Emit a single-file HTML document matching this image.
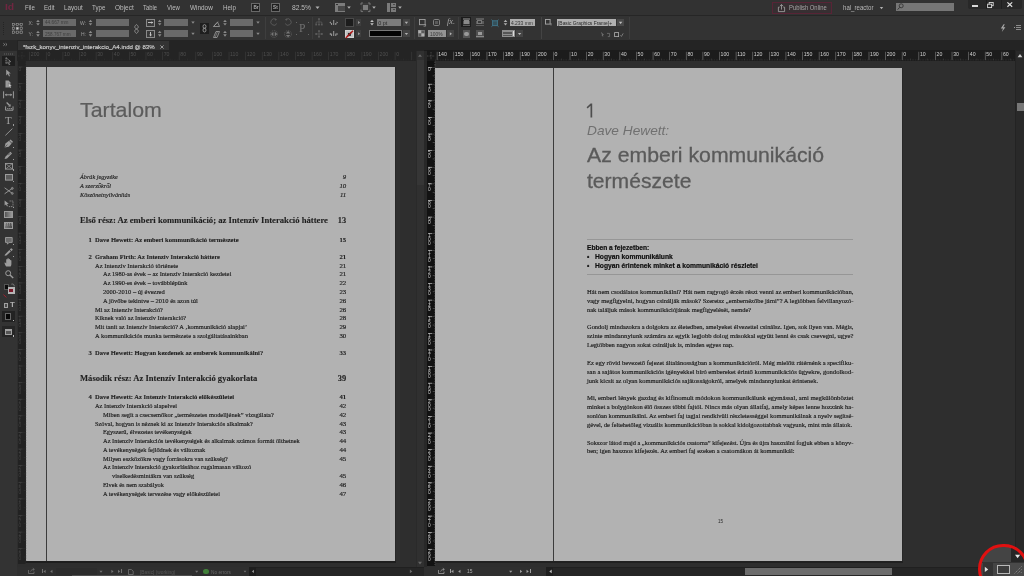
<!DOCTYPE html>
<html><head><meta charset="utf-8"><title>InDesign</title>
<style>
html,body{margin:0;padding:0;}
body{width:1024px;height:576px;overflow:hidden;background:#2e2e2e;position:relative;font-family:"Liberation Sans",sans-serif;}
.b{position:absolute;}
.t{position:absolute;white-space:pre;transform-origin:0 0;}
.se{font-family:"Liberation Serif",serif;}
.sa{font-family:"Liberation Sans",sans-serif;}
svg{position:absolute;overflow:visible;}
#r{position:absolute;left:-16px;top:-16px;width:1056px;height:608px;background:#2e2e2e;filter:blur(0.45px);}
#w{position:absolute;left:16px;top:16px;width:1024px;height:576px;}
</style></head><body><div id="r"><div id="w">
<div class="b" style="left:17px;top:51px;width:407px;height:525px;background:#2e2e2e;"></div>
<div class="b" style="left:424px;top:51px;width:600px;height:525px;background:#2e2e2e;"></div>
<div class="b" style="left:26.2px;top:67px;width:369.0px;height:493.70000000000005px;background:#b2b2b2;"></div>
<div class="b" style="left:395.2px;top:67px;width:1px;height:493.70000000000005px;background:#272727;"></div>
<div class="b" style="left:45.7px;top:67px;width:1.1px;height:493.70000000000005px;background:#3c3c3c;"></div>
<div class="b" style="left:435.4px;top:67.9px;width:467.0px;height:493.1px;background:#b2b2b2;"></div>
<div class="b" style="left:902.4px;top:67.9px;width:1px;height:492.80000000000007px;background:#272727;"></div>
<div class="b" style="left:553.3px;top:67.9px;width:1.1px;height:493.1px;background:#3c3c3c;"></div>
<div class="t sa" style="top:98.38px;font-size:20.2px;line-height:24.24px;color:#5c5c5c;left:79.80px;transform:scaleX(1.0573);-webkit-text-stroke:0.2px #5c5c5c;">Tartalom</div>
<div class="t se" style="top:172.82px;font-size:6.8px;line-height:8.16px;color:#1e1e1e;font-style:italic;left:79.90px;transform:scaleX(0.9119);-webkit-text-stroke:0.15px #1e1e1e;">Ábrák jegyzéke</div>
<div class="t se" style="top:172.82px;font-size:6.8px;line-height:8.16px;color:#1e1e1e;font-style:italic;left:342.80px;-webkit-text-stroke:0.15px #1e1e1e;">9</div>
<div class="t se" style="top:181.82px;font-size:6.8px;line-height:8.16px;color:#1e1e1e;font-style:italic;left:79.90px;transform:scaleX(0.9232);-webkit-text-stroke:0.15px #1e1e1e;">A szerzőkről</div>
<div class="t se" style="top:181.82px;font-size:6.8px;line-height:8.16px;color:#1e1e1e;font-style:italic;left:339.40px;-webkit-text-stroke:0.15px #1e1e1e;">10</div>
<div class="t se" style="top:190.53px;font-size:6.8px;line-height:8.16px;color:#1e1e1e;font-style:italic;left:79.90px;transform:scaleX(0.9147);-webkit-text-stroke:0.15px #1e1e1e;">Köszönetnyilvánítás</div>
<div class="t se" style="top:190.53px;font-size:6.8px;line-height:8.16px;color:#1e1e1e;font-style:italic;left:339.90px;-webkit-text-stroke:0.15px #1e1e1e;">11</div>
<div class="t se" style="top:215.72px;font-size:8.4px;line-height:10.08px;color:#1e1e1e;font-weight:bold;left:79.90px;transform:scaleX(1.0336);-webkit-text-stroke:0.1px #1e1e1e;">Első rész: Az emberi kommunikáció; az Intenzív Interakció háttere</div>
<div class="t se" style="top:215.72px;font-size:8.4px;line-height:10.08px;color:#1e1e1e;font-weight:bold;left:337.80px;-webkit-text-stroke:0.1px #1e1e1e;">13</div>
<div class="t se" style="top:374.12px;font-size:8.4px;line-height:10.08px;color:#1e1e1e;font-weight:bold;left:79.90px;transform:scaleX(1.0235);-webkit-text-stroke:0.1px #1e1e1e;">Második rész: Az Intenzív Interakció gyakorlata</div>
<div class="t se" style="top:374.12px;font-size:8.4px;line-height:10.08px;color:#1e1e1e;font-weight:bold;left:337.80px;-webkit-text-stroke:0.1px #1e1e1e;">39</div>
<div class="t se" style="top:235.92px;font-size:6.7px;line-height:8.04px;color:#1e1e1e;font-weight:bold;left:88.40px;-webkit-text-stroke:0.1px #1e1e1e;">1</div>
<div class="t se" style="top:235.92px;font-size:6.7px;line-height:8.04px;color:#1e1e1e;font-weight:bold;left:94.90px;transform:scaleX(0.9828);-webkit-text-stroke:0.1px #1e1e1e;">Dave Hewett: Az emberi kommunikáció természete</div>
<div class="t se" style="top:235.92px;font-size:6.7px;line-height:8.04px;color:#1e1e1e;font-weight:bold;left:339.50px;-webkit-text-stroke:0.1px #1e1e1e;">15</div>
<div class="t se" style="top:252.92px;font-size:6.7px;line-height:8.04px;color:#1e1e1e;font-weight:bold;left:88.40px;-webkit-text-stroke:0.1px #1e1e1e;">2</div>
<div class="t se" style="top:252.92px;font-size:6.7px;line-height:8.04px;color:#1e1e1e;font-weight:bold;left:94.90px;transform:scaleX(0.9580);-webkit-text-stroke:0.1px #1e1e1e;">Graham Firth: Az Intenzív Interakció háttere</div>
<div class="t se" style="top:252.92px;font-size:6.7px;line-height:8.04px;color:#1e1e1e;font-weight:bold;left:339.50px;-webkit-text-stroke:0.1px #1e1e1e;">21</div>
<div class="t se" style="top:261.52px;font-size:6.8px;line-height:8.16px;color:#1e1e1e;left:94.90px;transform:scaleX(0.9613);-webkit-text-stroke:0.18px #1e1e1e;">Az Intenzív Interakció története</div>
<div class="t se" style="top:261.52px;font-size:6.8px;line-height:8.16px;color:#1e1e1e;left:339.40px;-webkit-text-stroke:0.18px #1e1e1e;">21</div>
<div class="t se" style="top:270.32px;font-size:6.8px;line-height:8.16px;color:#1e1e1e;left:103.10px;transform:scaleX(0.9425);-webkit-text-stroke:0.18px #1e1e1e;">Az 1980-as évek – az Intenzív Interakció kezdetei</div>
<div class="t se" style="top:270.32px;font-size:6.8px;line-height:8.16px;color:#1e1e1e;left:339.40px;-webkit-text-stroke:0.18px #1e1e1e;">21</div>
<div class="t se" style="top:279.12px;font-size:6.8px;line-height:8.16px;color:#1e1e1e;left:103.10px;transform:scaleX(0.9429);-webkit-text-stroke:0.18px #1e1e1e;">Az 1990-es évek – továbblépünk</div>
<div class="t se" style="top:279.12px;font-size:6.8px;line-height:8.16px;color:#1e1e1e;left:339.40px;-webkit-text-stroke:0.18px #1e1e1e;">22</div>
<div class="t se" style="top:287.93px;font-size:6.8px;line-height:8.16px;color:#1e1e1e;left:103.10px;transform:scaleX(0.9598);-webkit-text-stroke:0.18px #1e1e1e;">2000-2010 – új évezred</div>
<div class="t se" style="top:287.93px;font-size:6.8px;line-height:8.16px;color:#1e1e1e;left:339.40px;-webkit-text-stroke:0.18px #1e1e1e;">23</div>
<div class="t se" style="top:296.72px;font-size:6.8px;line-height:8.16px;color:#1e1e1e;left:103.10px;transform:scaleX(0.9535);-webkit-text-stroke:0.18px #1e1e1e;">A jövőbe tekintve – 2010 és azon túl</div>
<div class="t se" style="top:296.72px;font-size:6.8px;line-height:8.16px;color:#1e1e1e;left:339.40px;-webkit-text-stroke:0.18px #1e1e1e;">26</div>
<div class="t se" style="top:305.52px;font-size:6.8px;line-height:8.16px;color:#1e1e1e;left:94.90px;transform:scaleX(0.9454);-webkit-text-stroke:0.18px #1e1e1e;">Mi az Intenzív Interakció?</div>
<div class="t se" style="top:305.52px;font-size:6.8px;line-height:8.16px;color:#1e1e1e;left:339.40px;-webkit-text-stroke:0.18px #1e1e1e;">26</div>
<div class="t se" style="top:314.32px;font-size:6.8px;line-height:8.16px;color:#1e1e1e;left:94.90px;transform:scaleX(0.9362);-webkit-text-stroke:0.18px #1e1e1e;">Kiknek való az Intenzív Interakció?</div>
<div class="t se" style="top:314.32px;font-size:6.8px;line-height:8.16px;color:#1e1e1e;left:339.40px;-webkit-text-stroke:0.18px #1e1e1e;">28</div>
<div class="t se" style="top:323.02px;font-size:6.8px;line-height:8.16px;color:#1e1e1e;left:94.90px;transform:scaleX(0.9488);-webkit-text-stroke:0.18px #1e1e1e;">Mit tanít az Intenzív Interakció? A ‚kommunikáció alapjai’</div>
<div class="t se" style="top:323.02px;font-size:6.8px;line-height:8.16px;color:#1e1e1e;left:339.40px;-webkit-text-stroke:0.18px #1e1e1e;">29</div>
<div class="t se" style="top:331.82px;font-size:6.8px;line-height:8.16px;color:#1e1e1e;left:94.90px;transform:scaleX(0.9544);-webkit-text-stroke:0.18px #1e1e1e;">A kommunikációs munka természete a szolgáltatásainkban</div>
<div class="t se" style="top:331.82px;font-size:6.8px;line-height:8.16px;color:#1e1e1e;left:339.40px;-webkit-text-stroke:0.18px #1e1e1e;">30</div>
<div class="t se" style="top:348.72px;font-size:6.7px;line-height:8.04px;color:#1e1e1e;font-weight:bold;left:88.40px;-webkit-text-stroke:0.1px #1e1e1e;">3</div>
<div class="t se" style="top:348.72px;font-size:6.7px;line-height:8.04px;color:#1e1e1e;font-weight:bold;left:94.90px;transform:scaleX(0.9743);-webkit-text-stroke:0.1px #1e1e1e;">Dave Hewett: Hogyan kezdenek az emberek kommunikálni?</div>
<div class="t se" style="top:348.72px;font-size:6.7px;line-height:8.04px;color:#1e1e1e;font-weight:bold;left:339.50px;-webkit-text-stroke:0.1px #1e1e1e;">33</div>
<div class="t se" style="top:393.42px;font-size:6.7px;line-height:8.04px;color:#1e1e1e;font-weight:bold;left:88.40px;-webkit-text-stroke:0.1px #1e1e1e;">4</div>
<div class="t se" style="top:393.42px;font-size:6.7px;line-height:8.04px;color:#1e1e1e;font-weight:bold;left:94.90px;transform:scaleX(0.9794);-webkit-text-stroke:0.1px #1e1e1e;">Dave Hewett: Az Intenzív Interakció előkészületei</div>
<div class="t se" style="top:393.42px;font-size:6.7px;line-height:8.04px;color:#1e1e1e;font-weight:bold;left:339.50px;-webkit-text-stroke:0.1px #1e1e1e;">41</div>
<div class="t se" style="top:402.12px;font-size:6.8px;line-height:8.16px;color:#1e1e1e;left:94.90px;transform:scaleX(0.9393);-webkit-text-stroke:0.18px #1e1e1e;">Az Intenzív Interakció alapelvei</div>
<div class="t se" style="top:402.12px;font-size:6.8px;line-height:8.16px;color:#1e1e1e;left:339.40px;-webkit-text-stroke:0.18px #1e1e1e;">42</div>
<div class="t se" style="top:410.82px;font-size:6.8px;line-height:8.16px;color:#1e1e1e;left:103.10px;transform:scaleX(0.9463);-webkit-text-stroke:0.18px #1e1e1e;">Miben segít a csecsemőkor „természetes modelljének” vizsgálata?</div>
<div class="t se" style="top:410.82px;font-size:6.8px;line-height:8.16px;color:#1e1e1e;left:339.40px;-webkit-text-stroke:0.18px #1e1e1e;">42</div>
<div class="t se" style="top:419.62px;font-size:6.8px;line-height:8.16px;color:#1e1e1e;left:94.90px;transform:scaleX(0.9317);-webkit-text-stroke:0.18px #1e1e1e;">Szóval, hogyan is néznek ki az Intenzív Interakciós alkalmak?</div>
<div class="t se" style="top:419.62px;font-size:6.8px;line-height:8.16px;color:#1e1e1e;left:339.40px;-webkit-text-stroke:0.18px #1e1e1e;">43</div>
<div class="t se" style="top:428.43px;font-size:6.8px;line-height:8.16px;color:#1e1e1e;left:103.10px;transform:scaleX(0.9303);-webkit-text-stroke:0.18px #1e1e1e;">Egyszerű, élvezetes tevékenységek</div>
<div class="t se" style="top:428.43px;font-size:6.8px;line-height:8.16px;color:#1e1e1e;left:339.40px;-webkit-text-stroke:0.18px #1e1e1e;">43</div>
<div class="t se" style="top:437.12px;font-size:6.8px;line-height:8.16px;color:#1e1e1e;left:103.10px;transform:scaleX(0.9463);-webkit-text-stroke:0.18px #1e1e1e;">Az Intenzív Interakciós tevékenységek és alkalmak számos formát ölthetnek</div>
<div class="t se" style="top:437.12px;font-size:6.8px;line-height:8.16px;color:#1e1e1e;left:339.40px;-webkit-text-stroke:0.18px #1e1e1e;">44</div>
<div class="t se" style="top:445.93px;font-size:6.8px;line-height:8.16px;color:#1e1e1e;left:103.10px;transform:scaleX(0.9374);-webkit-text-stroke:0.18px #1e1e1e;">A tevékenységek fejlődnek és változnak</div>
<div class="t se" style="top:445.93px;font-size:6.8px;line-height:8.16px;color:#1e1e1e;left:339.40px;-webkit-text-stroke:0.18px #1e1e1e;">44</div>
<div class="t se" style="top:454.72px;font-size:6.8px;line-height:8.16px;color:#1e1e1e;left:103.10px;transform:scaleX(0.9304);-webkit-text-stroke:0.18px #1e1e1e;">Milyen eszközökre vagy forrásokra van szükség?</div>
<div class="t se" style="top:454.72px;font-size:6.8px;line-height:8.16px;color:#1e1e1e;left:339.40px;-webkit-text-stroke:0.18px #1e1e1e;">45</div>
<div class="t se" style="top:463.43px;font-size:6.8px;line-height:8.16px;color:#1e1e1e;left:103.10px;transform:scaleX(0.9446);-webkit-text-stroke:0.18px #1e1e1e;">Az Intenzív Interakció gyakorlásához rugalmasan változó</div>
<div class="t se" style="top:472.22px;font-size:6.8px;line-height:8.16px;color:#1e1e1e;left:111.60px;transform:scaleX(0.9422);-webkit-text-stroke:0.18px #1e1e1e;">viselkedésmintákra van szükség</div>
<div class="t se" style="top:472.22px;font-size:6.8px;line-height:8.16px;color:#1e1e1e;left:339.40px;-webkit-text-stroke:0.18px #1e1e1e;">45</div>
<div class="t se" style="top:481.02px;font-size:6.8px;line-height:8.16px;color:#1e1e1e;left:103.10px;transform:scaleX(0.9295);-webkit-text-stroke:0.18px #1e1e1e;">Elvek és nem szabályok</div>
<div class="t se" style="top:481.02px;font-size:6.8px;line-height:8.16px;color:#1e1e1e;left:339.40px;-webkit-text-stroke:0.18px #1e1e1e;">46</div>
<div class="t se" style="top:489.72px;font-size:6.8px;line-height:8.16px;color:#1e1e1e;left:103.10px;transform:scaleX(0.9333);-webkit-text-stroke:0.18px #1e1e1e;">A tevékenységek tervezése vagy előkészületei</div>
<div class="t se" style="top:489.72px;font-size:6.8px;line-height:8.16px;color:#1e1e1e;left:339.40px;-webkit-text-stroke:0.18px #1e1e1e;">47</div>
<svg style="left:0;top:0" width="1024" height="576"><path d="M586.6 107.2L590.6 103.4H592.2V117.6H590.5V105.8L587.6 108.4Z" fill="#4e4e4e"/></svg>
<div class="t sa" style="top:124.07px;font-size:12.6px;line-height:15.12px;color:#707070;font-style:italic;left:586.90px;transform:scaleX(1.0868);">Dave Hewett:</div>
<div class="t sa" style="top:143.10px;font-size:20.6px;line-height:24.72px;color:#5a5a5a;left:586.80px;transform:scaleX(1.0308);-webkit-text-stroke:0.3px #5a5a5a;">Az emberi kommunikáció</div>
<div class="t sa" style="top:169.10px;font-size:20.6px;line-height:24.72px;color:#5a5a5a;left:586.80px;transform:scaleX(1.0246);-webkit-text-stroke:0.3px #5a5a5a;">természete</div>
<div class="b" style="left:586.9px;top:238.8px;width:266.5px;height:0.6px;background:#969696;"></div>
<div class="b" style="left:586.9px;top:274.2px;width:266.5px;height:0.6px;background:#969696;"></div>
<div class="t sa" style="top:244.25px;font-size:6.6px;line-height:7.92px;color:#101010;font-weight:bold;left:586.90px;transform:scaleX(1.0052);-webkit-text-stroke:0.2px #101010;">Ebben a fejezetben:</div>
<div class="t sa" style="top:253.35px;font-size:6.6px;line-height:7.92px;color:#101010;font-weight:bold;left:586.90px;-webkit-text-stroke:0.2px #101010;">•</div>
<div class="t sa" style="top:253.35px;font-size:6.6px;line-height:7.92px;color:#101010;font-weight:bold;left:595.40px;transform:scaleX(1.0212);-webkit-text-stroke:0.2px #101010;">Hogyan kommunikálunk</div>
<div class="t sa" style="top:262.15px;font-size:6.6px;line-height:7.92px;color:#101010;font-weight:bold;left:586.90px;-webkit-text-stroke:0.2px #101010;">•</div>
<div class="t sa" style="top:262.15px;font-size:6.6px;line-height:7.92px;color:#101010;font-weight:bold;left:595.40px;transform:scaleX(1.0175);-webkit-text-stroke:0.2px #101010;">Hogyan érintenek minket a kommunikáció részletei</div>
<div class="t se" style="top:287.93px;font-size:6.8px;line-height:8.16px;color:#1e1e1e;left:586.90px;transform:scaleX(0.9660);-webkit-text-stroke:0.18px #1e1e1e;">Hát nem csodálatos kommunikálni? Hát nem ragyogó érzés részt venni az emberi kommunikációban,</div>
<div class="t se" style="top:296.79px;font-size:6.8px;line-height:8.16px;color:#1e1e1e;left:586.90px;transform:scaleX(0.9543);-webkit-text-stroke:0.18px #1e1e1e;">vagy megfigyelni, hogyan csinálják mások? Szeretsz „embernézőbe járni”? A legtöbben felvillanyozó-</div>
<div class="t se" style="top:305.64px;font-size:6.8px;line-height:8.16px;color:#1e1e1e;left:586.90px;transform:scaleX(0.9499);-webkit-text-stroke:0.18px #1e1e1e;">nak találjuk mások kommunikációjának megfigyelését, nemde?</div>
<div class="t se" style="top:323.37px;font-size:6.8px;line-height:8.16px;color:#1e1e1e;left:586.90px;transform:scaleX(0.9460);-webkit-text-stroke:0.18px #1e1e1e;">Gondolj mindazokra a dolgokra az életedben, amelyeket élvezettel csinálsz. Igen, sok ilyen van. Mégis,</div>
<div class="t se" style="top:332.23px;font-size:6.8px;line-height:8.16px;color:#1e1e1e;left:586.90px;transform:scaleX(0.9774);-webkit-text-stroke:0.18px #1e1e1e;">szinte mindannyiunk számára az egyik legjobb dolog másokkal együtt lenni és csak csevegni, ugye?</div>
<div class="t se" style="top:341.09px;font-size:6.8px;line-height:8.16px;color:#1e1e1e;left:586.90px;transform:scaleX(0.9555);-webkit-text-stroke:0.18px #1e1e1e;">Legtöbben nagyon sokat csináljuk is, minden egyes nap.</div>
<div class="t se" style="top:358.81px;font-size:6.8px;line-height:8.16px;color:#1e1e1e;left:586.90px;transform:scaleX(0.9595);-webkit-text-stroke:0.18px #1e1e1e;">Ez egy rövid bevezető fejezet általánosságban a kommunikációról. Még mielőtt rátérnénk a specifiku-</div>
<div class="t se" style="top:367.67px;font-size:6.8px;line-height:8.16px;color:#1e1e1e;left:586.90px;transform:scaleX(0.9713);-webkit-text-stroke:0.18px #1e1e1e;">san a sajátos kommunikációs igényekkel bíró embereket érintő kommunikációs ügyekre, gondolkod-</div>
<div class="t se" style="top:376.52px;font-size:6.8px;line-height:8.16px;color:#1e1e1e;left:586.90px;transform:scaleX(0.9516);-webkit-text-stroke:0.18px #1e1e1e;">junk kicsit az olyan kommunikációs sajátosságokról, amelyek mindannyiunkat érintenek.</div>
<div class="t se" style="top:394.25px;font-size:6.8px;line-height:8.16px;color:#1e1e1e;left:586.90px;transform:scaleX(0.9814);-webkit-text-stroke:0.18px #1e1e1e;">Mi, emberi lények gazdag és kifinomult módokon kommunikálunk egymással, ami megkülönböztet</div>
<div class="t se" style="top:403.11px;font-size:6.8px;line-height:8.16px;color:#1e1e1e;left:586.90px;transform:scaleX(0.9647);-webkit-text-stroke:0.18px #1e1e1e;">minket a bolygónkon élő összes többi fajtól. Nincs más olyan állatfaj, amely képes lenne hozzánk ha-</div>
<div class="t se" style="top:411.97px;font-size:6.8px;line-height:8.16px;color:#1e1e1e;left:586.90px;transform:scaleX(0.9459);-webkit-text-stroke:0.18px #1e1e1e;">sonlóan kommunikálni. Az emberi faj tagjai rendkívüli részletességgel kommunikálnak a nyelv segítsé-</div>
<div class="t se" style="top:420.82px;font-size:6.8px;line-height:8.16px;color:#1e1e1e;left:586.90px;transform:scaleX(0.9346);-webkit-text-stroke:0.18px #1e1e1e;">gével, de feltehetőleg vizuális kommunikációban is sokkal kidolgozottabbak vagyunk, mint más állatok.</div>
<div class="t se" style="top:438.55px;font-size:6.8px;line-height:8.16px;color:#1e1e1e;left:586.90px;transform:scaleX(0.9316);-webkit-text-stroke:0.18px #1e1e1e;">Sokszor látod majd a „kommunikációs csatorna” kifejezést. Újra és újra használni fogjuk ebben a könyv-</div>
<div class="t se" style="top:447.40px;font-size:6.8px;line-height:8.16px;color:#1e1e1e;left:586.90px;transform:scaleX(0.9478);-webkit-text-stroke:0.18px #1e1e1e;">ben; igen hasznos kifejezés. Az emberi faj ezeken a csatornákon át kommunikál:</div>
<div class="t sa" style="top:516.83px;font-size:6.2px;line-height:7.44px;color:#2a2a2a;left:717.50px;transform:scaleX(0.7395);">15</div>
<div class="b" style="left:0px;top:0px;width:1024px;height:15px;background:#323232;"></div>
<div class="b" style="left:0px;top:14.6px;width:1024px;height:1.2px;background:#262626;"></div>
<div class="b" style="left:0px;top:16px;width:1024px;height:24px;background:#333333;"></div>
<div class="t sa" style="top:1.21px;font-size:9.6px;line-height:11.52px;color:#702641;font-weight:bold;left:4.90px;transform:scaleX(1.0784);">Id</div>
<div class="t sa" style="top:3.01px;font-size:7.6px;line-height:9.12px;color:#bdbdbd;left:25.30px;transform:scaleX(0.8084);">File</div>
<div class="t sa" style="top:3.01px;font-size:7.6px;line-height:9.12px;color:#bdbdbd;left:43.90px;transform:scaleX(0.8018);">Edit</div>
<div class="t sa" style="top:3.01px;font-size:7.6px;line-height:9.12px;color:#bdbdbd;left:64.00px;transform:scaleX(0.8239);">Layout</div>
<div class="t sa" style="top:3.01px;font-size:7.6px;line-height:9.12px;color:#bdbdbd;left:92.20px;transform:scaleX(0.8072);">Type</div>
<div class="t sa" style="top:3.01px;font-size:7.6px;line-height:9.12px;color:#bdbdbd;left:114.80px;transform:scaleX(0.8559);">Object</div>
<div class="t sa" style="top:3.01px;font-size:7.6px;line-height:9.12px;color:#bdbdbd;left:143.00px;transform:scaleX(0.7705);">Table</div>
<div class="t sa" style="top:3.01px;font-size:7.6px;line-height:9.12px;color:#bdbdbd;left:166.90px;transform:scaleX(0.7835);">View</div>
<div class="t sa" style="top:3.01px;font-size:7.6px;line-height:9.12px;color:#bdbdbd;left:190.20px;transform:scaleX(0.8435);">Window</div>
<div class="t sa" style="top:3.01px;font-size:7.6px;line-height:9.12px;color:#bdbdbd;left:222.70px;transform:scaleX(0.8253);">Help</div>
<div class="b" style="left:251.3px;top:2.8px;width:9.2px;height:8.8px;background:#1f1f1f;border:0.8px solid #686868;box-sizing:border-box;"></div>
<div class="t sa" style="top:4.95px;font-size:4.6px;line-height:5.52px;color:#b0b0b0;font-weight:bold;left:253.40px;">Br</div>
<div class="b" style="left:271px;top:2.8px;width:9.2px;height:8.8px;background:#1f1f1f;border:0.8px solid #686868;box-sizing:border-box;"></div>
<div class="t sa" style="top:4.95px;font-size:4.6px;line-height:5.52px;color:#b0b0b0;font-weight:bold;left:273.10px;">St</div>
<div class="t sa" style="top:3.01px;font-size:7.6px;line-height:9.12px;color:#bdbdbd;left:291.90px;transform:scaleX(0.8863);">82.5%</div>
<svg style="left:0;top:0" width="1024" height="576"><polygon points="315.5,6.3999999999999995 319.5,6.3999999999999995 317.5,9.0" fill="#b0b0b0"/></svg>
<div class="b" style="left:335.2px;top:3px;width:10px;height:8.6px;background:#7c7c7c;"></div>
<div class="b" style="left:337.6px;top:5.6px;width:7px;height:5.2px;background:#484848;"></div>
<div class="b" style="left:336px;top:3.8px;width:1.6px;height:1.4px;background:#333;"></div>
<svg style="left:0;top:0" width="1024" height="576"><polygon points="347.2,6.52 350.8,6.52 349,8.86" fill="#b0b0b0"/></svg>
<div class="b" style="left:361px;top:3px;width:9px;height:8.6px;background:#3a3a3a;"></div>
<div class="b" style="left:363.2px;top:4.8px;width:4.8px;height:5px;background:#7c7c7c;"></div>
<svg style="left:361px;top:3px" width="9" height="8.6" viewBox="0 0 9 8.6"><path d="M0 2V0H2M7 0H9V2M9 6.6V8.6H7M2 8.6H0V6.6" stroke="#7c7c7c" stroke-width="0.9" fill="none"/></svg>
<svg style="left:0;top:0" width="1024" height="576"><polygon points="372.2,6.52 375.8,6.52 374,8.86" fill="#b0b0b0"/></svg>
<div class="b" style="left:386.7px;top:3px;width:9.8px;height:8.6px;background:#7a7a7a;"></div>
<div class="b" style="left:390.2px;top:3px;width:1.2px;height:8.6px;background:#343434;"></div>
<div class="b" style="left:391.4px;top:6.8px;width:5.2px;height:1.2px;background:#343434;"></div>
<div class="b" style="left:392.6px;top:4.2px;width:2.4px;height:1px;background:#4a4a4a;"></div>
<div class="b" style="left:392.6px;top:9px;width:2.4px;height:1px;background:#4a4a4a;"></div>
<svg style="left:0;top:0" width="1024" height="576"><polygon points="398.2,6.52 401.8,6.52 400,8.86" fill="#b0b0b0"/></svg>
<div class="b" style="left:772.4px;top:1.6px;width:59.4px;height:12.8px;background:#372f32;border:0.8px solid #582436;box-sizing:border-box;"></div>
<svg style="left:778px;top:4.2px" width="7" height="8" viewBox="0 0 7 8"><path d="M1.6 3.2H0.4V7.6H6.6V3.2H5.4M3.5 5.6V0.6M1.9 2.2L3.5 0.6L5.1 2.2" stroke="#a8a8a8" stroke-width="0.8" fill="none"/></svg>
<div class="t sa" style="top:4.39px;font-size:7.2px;line-height:8.64px;color:#a5a5a5;left:788.60px;transform:scaleX(0.8142);">Publish Online</div>
<div class="t sa" style="top:3.79px;font-size:7.2px;line-height:8.64px;color:#b8b8b8;left:843.30px;transform:scaleX(0.8467);">hal_reactor</div>
<svg style="left:0;top:0" width="1024" height="576"><polygon points="879.8,6.98 883.2,6.98 881.5,9.19" fill="#b0b0b0"/></svg>
<div class="b" style="left:896px;top:2.5px;width:58px;height:8.6px;background:#767676;"></div>
<svg style="left:896.6px;top:3.2px" width="7" height="7" viewBox="0 0 7 7"><circle cx="4.2" cy="2.8" r="2" stroke="#333" stroke-width="0.9" fill="none"/><path d="M2.8 4.3L0.6 6.6" stroke="#333" stroke-width="1"/></svg>
<div class="b" style="left:968px;top:0px;width:53.6px;height:8.8px;background:#282828;border-radius:0 0 2px 2px;"></div>
<div class="b" style="left:986px;top:0px;width:0.6px;height:8.8px;background:#1e1e1e;"></div>
<div class="b" style="left:1001px;top:0px;width:0.6px;height:8.8px;background:#1e1e1e;"></div>
<div class="b" style="left:972px;top:5.3px;width:6px;height:1.5px;background:#d8d8d8;"></div>
<svg style="left:986.6px;top:1.6px" width="7" height="6.4" viewBox="0 0 7 6.4"><rect x="2.2" y="0.5" width="4" height="3.2" stroke="#d8d8d8" stroke-width="0.9" fill="none"/><rect x="0.6" y="2.2" width="4" height="3.4" stroke="#d8d8d8" stroke-width="0.9" fill="#282828"/></svg>
<svg style="left:1007px;top:2px" width="5.6" height="5.2" viewBox="0 0 5.6 5.2"><path d="M0.4 0.4L5.2 4.8M5.2 0.4L0.4 4.8" stroke="#e0e0e0" stroke-width="1.2"/></svg>
<div class="b" style="left:2.8px;top:22px;width:1.2px;height:1.2px;background:#242424;"></div>
<div class="b" style="left:2.8px;top:24px;width:1.2px;height:1.2px;background:#242424;"></div>
<div class="b" style="left:2.8px;top:26px;width:1.2px;height:1.2px;background:#242424;"></div>
<div class="b" style="left:2.8px;top:28px;width:1.2px;height:1.2px;background:#242424;"></div>
<div class="b" style="left:2.8px;top:30px;width:1.2px;height:1.2px;background:#242424;"></div>
<div class="b" style="left:2.8px;top:32px;width:1.2px;height:1.2px;background:#242424;"></div>
<div class="b" style="left:2.8px;top:34px;width:1.2px;height:1.2px;background:#242424;"></div>
<svg style="left:12.3px;top:23px" width="10.4" height="10.4" viewBox="0 0 10.4 10.4"><rect x="0.3" y="0.3" width="2.2" height="2.2" stroke="#9a9a9a" stroke-width="0.6" fill="none"/><rect x="0.3" y="4.2" width="2.2" height="2.2" stroke="#9a9a9a" stroke-width="0.6" fill="none"/><rect x="0.3" y="8.1" width="2.2" height="2.2" stroke="#9a9a9a" stroke-width="0.6" fill="none"/><rect x="4.2" y="0.3" width="2.2" height="2.2" stroke="#9a9a9a" stroke-width="0.6" fill="none"/><rect x="4.2" y="4.2" width="2.2" height="2.2" stroke="#9a9a9a" stroke-width="0.6" fill="#ccc"/><rect x="4.2" y="8.1" width="2.2" height="2.2" stroke="#9a9a9a" stroke-width="0.6" fill="none"/><rect x="8.1" y="0.3" width="2.2" height="2.2" stroke="#9a9a9a" stroke-width="0.6" fill="none"/><rect x="8.1" y="4.2" width="2.2" height="2.2" stroke="#9a9a9a" stroke-width="0.6" fill="none"/><rect x="8.1" y="8.1" width="2.2" height="2.2" stroke="#9a9a9a" stroke-width="0.6" fill="none"/><path d="M2.5 1.4H4.2M6.4 1.4H8.1M2.5 9.2H4.2M6.4 9.2H8.1M1.4 2.5V4.2M1.4 6.4V8.1M9.2 2.5V4.2M9.2 6.4V8.1" stroke="#8a8a8a" stroke-width="0.5"/></svg>
<div class="t sa" style="top:19.67px;font-size:5px;line-height:6.0px;color:#9c9c9c;left:28.60px;">X:</div>
<div class="t sa" style="top:31.37px;font-size:5px;line-height:6.0px;color:#9c9c9c;left:28.60px;">Y:</div>
<svg style="left:0;top:0" width="1024" height="576"><polygon points="36.2,21.980000000000004 39.8,21.980000000000004 38,19.64" fill="#8c8c8c"/></svg>
<svg style="left:0;top:0" width="1024" height="576"><polygon points="36.2,23.22 39.8,23.22 38,25.560000000000002" fill="#8c8c8c"/></svg>
<svg style="left:0;top:0" width="1024" height="576"><polygon points="36.2,33.08 39.8,33.08 38,30.74" fill="#8c8c8c"/></svg>
<svg style="left:0;top:0" width="1024" height="576"><polygon points="36.2,34.32000000000001 39.8,34.32000000000001 38,36.660000000000004" fill="#8c8c8c"/></svg>
<div class="b" style="left:43.1px;top:19px;width:32.9px;height:7.1px;background:#6a6a6a;"></div>
<div class="b" style="left:43.1px;top:30.2px;width:32.9px;height:7.1px;background:#6a6a6a;"></div>
<div class="t sa" style="top:19.19px;font-size:5.5px;line-height:6.6px;color:#3e3e3e;left:44.50px;transform:scaleX(0.8541);">44.667 mm</div>
<div class="t sa" style="top:30.59px;font-size:5.5px;line-height:6.6px;color:#3e3e3e;left:44.50px;transform:scaleX(0.8341);">258.767 mm</div>
<div class="t sa" style="top:19.67px;font-size:5px;line-height:6.0px;color:#9c9c9c;left:80.00px;">W:</div>
<div class="t sa" style="top:31.37px;font-size:5px;line-height:6.0px;color:#9c9c9c;left:81.00px;">H:</div>
<svg style="left:0;top:0" width="1024" height="576"><polygon points="88.7,21.980000000000004 92.3,21.980000000000004 90.5,19.64" fill="#8c8c8c"/></svg>
<svg style="left:0;top:0" width="1024" height="576"><polygon points="88.7,23.22 92.3,23.22 90.5,25.560000000000002" fill="#8c8c8c"/></svg>
<svg style="left:0;top:0" width="1024" height="576"><polygon points="88.7,33.08 92.3,33.08 90.5,30.74" fill="#8c8c8c"/></svg>
<svg style="left:0;top:0" width="1024" height="576"><polygon points="88.7,34.32000000000001 92.3,34.32000000000001 90.5,36.660000000000004" fill="#8c8c8c"/></svg>
<div class="b" style="left:96px;top:19px;width:32.6px;height:7.1px;background:#6a6a6a;"></div>
<div class="b" style="left:96px;top:30.2px;width:32.6px;height:7.1px;background:#6a6a6a;"></div>
<svg style="left:132.5px;top:23.5px" width="7" height="10" viewBox="0 0 7 10"><path d="M3.5 0.6C1.2 2 1.2 4 3.5 5C5.8 6 5.8 8 3.5 9.4M3.5 0.6C5.8 2 5.8 4 3.5 5C1.2 6 1.2 8 3.5 9.4" stroke="#a0a0a0" stroke-width="0.8" fill="none"/></svg>
<div class="b" style="left:146.3px;top:18.5px;width:8.6px;height:8px;background:#3a3a3a;border:0.7px solid #8a8a8a;box-sizing:border-box;"></div>
<div class="b" style="left:146.3px;top:30px;width:8.6px;height:8px;background:#3a3a3a;border:0.7px solid #8a8a8a;box-sizing:border-box;"></div>
<div class="b" style="left:148px;top:22.2px;width:4.6px;height:0.9px;background:#c0c0c0;"></div>
<svg style="left:0;top:0" width="1024" height="576"><polygon points="151.35999999999999,21.200000000000003 151.35999999999999,24.0 153.17999999999998,22.6" fill="#c0c0c0"/></svg>
<div class="b" style="left:150.1px;top:31.6px;width:0.9px;height:4.6px;background:#c0c0c0;"></div>
<svg style="left:0;top:0" width="1024" height="576"><polygon points="149.2,34.559999999999995 152.0,34.559999999999995 150.6,36.379999999999995" fill="#c0c0c0"/></svg>
<svg style="left:0;top:0" width="1024" height="576"><polygon points="157.89999999999998,21.980000000000004 161.5,21.980000000000004 159.7,19.64" fill="#8c8c8c"/></svg>
<svg style="left:0;top:0" width="1024" height="576"><polygon points="157.89999999999998,23.22 161.5,23.22 159.7,25.560000000000002" fill="#8c8c8c"/></svg>
<svg style="left:0;top:0" width="1024" height="576"><polygon points="157.89999999999998,33.08 161.5,33.08 159.7,30.74" fill="#8c8c8c"/></svg>
<svg style="left:0;top:0" width="1024" height="576"><polygon points="157.89999999999998,34.32000000000001 161.5,34.32000000000001 159.7,36.660000000000004" fill="#8c8c8c"/></svg>
<div class="b" style="left:164.4px;top:19px;width:23.6px;height:7.1px;background:#6a6a6a;"></div>
<div class="b" style="left:164.4px;top:30.2px;width:23.6px;height:7.1px;background:#6a6a6a;"></div>
<svg style="left:0;top:0" width="1024" height="576"><polygon points="191.3,21.580000000000002 194.7,21.580000000000002 193,23.790000000000003" fill="#8a8a8a"/></svg>
<svg style="left:0;top:0" width="1024" height="576"><polygon points="191.3,32.779999999999994 194.7,32.779999999999994 193,34.989999999999995" fill="#8a8a8a"/></svg>
<div class="b" style="left:200px;top:23px;width:9.4px;height:11px;background:#1e1e1e;"></div>
<svg style="left:202.2px;top:24.2px" width="5" height="8.6" viewBox="0 0 5 8.6"><ellipse cx="2.5" cy="2.5" rx="1.5" ry="1.9" stroke="#a8a8a8" stroke-width="0.8" fill="none"/><ellipse cx="2.5" cy="6.1" rx="1.5" ry="1.9" stroke="#a8a8a8" stroke-width="0.8" fill="none"/></svg>
<svg style="left:212.5px;top:20.5px" width="7" height="6" viewBox="0 0 7 6"><path d="M0.5 5.5H6.5L4.6 1.2Z" stroke="#a0a0a0" stroke-width="0.8" fill="none"/><path d="M0.5 5.5L5 0.5" stroke="#a0a0a0" stroke-width="0.6"/></svg>
<svg style="left:212.5px;top:31px" width="7" height="7" viewBox="0 0 7 7"><path d="M0.5 6.5L3 0.5H6.5L4 6.5Z" stroke="#a0a0a0" stroke-width="0.8" fill="none"/><path d="M2 6.5L4.6 0.5" stroke="#a0a0a0" stroke-width="0.6"/></svg>
<svg style="left:0;top:0" width="1024" height="576"><polygon points="223.2,21.980000000000004 226.8,21.980000000000004 225,19.64" fill="#8c8c8c"/></svg>
<svg style="left:0;top:0" width="1024" height="576"><polygon points="223.2,23.22 226.8,23.22 225,25.560000000000002" fill="#8c8c8c"/></svg>
<svg style="left:0;top:0" width="1024" height="576"><polygon points="223.2,33.08 226.8,33.08 225,30.74" fill="#8c8c8c"/></svg>
<svg style="left:0;top:0" width="1024" height="576"><polygon points="223.2,34.32000000000001 226.8,34.32000000000001 225,36.660000000000004" fill="#8c8c8c"/></svg>
<div class="b" style="left:229.7px;top:19px;width:23.3px;height:7.1px;background:#6a6a6a;"></div>
<div class="b" style="left:229.7px;top:30.2px;width:23.3px;height:7.1px;background:#6a6a6a;"></div>
<svg style="left:0;top:0" width="1024" height="576"><polygon points="256.3,21.580000000000002 259.7,21.580000000000002 258,23.790000000000003" fill="#8a8a8a"/></svg>
<svg style="left:0;top:0" width="1024" height="576"><polygon points="256.3,32.779999999999994 259.7,32.779999999999994 258,34.989999999999995" fill="#8a8a8a"/></svg>
<div class="b" style="left:264.8px;top:17px;width:0.7px;height:22px;background:#3e3e3e;"></div>
<svg style="left:270px;top:18px" width="8" height="8" viewBox="0 0 8 8"><path d="M6.8 5.6A3.2 3.2 0 1 1 5.8 1.4" stroke="#5c5c5c" stroke-width="0.9" fill="none"/><path d="M4.6 0.2L7 1.2L5.6 3Z" fill="#5c5c5c"/></svg>
<svg style="left:284px;top:18px" width="8" height="8" viewBox="0 0 8 8"><path d="M1.2 5.6A3.2 3.2 0 1 0 2.2 1.4" stroke="#5c5c5c" stroke-width="0.9" fill="none"/><path d="M3.4 0.2L1 1.2L2.4 3Z" fill="#5c5c5c"/></svg>
<svg style="left:270px;top:30.4px" width="8.4" height="8.4" viewBox="0 0 8.4 8.4"><circle cx="4" cy="4.1" r="3.5" stroke="#5c5c5c" stroke-width="0.8" fill="none" stroke-dasharray="1.4 0.9"/><path d="M3.4 1.8V6.4L1 4.1ZM4.8 1.8V6.4L7.2 4.1Z" fill="#777"/></svg>
<svg style="left:283.8px;top:30.4px" width="8.4" height="8.4" viewBox="0 0 8.4 8.4"><circle cx="4" cy="4.1" r="3.5" stroke="#5c5c5c" stroke-width="0.8" fill="none" stroke-dasharray="1.4 0.9"/><path d="M1.8 3.5H6.4L4.1 1.1ZM1.8 4.9H6.4L4.1 7.3Z" fill="#777"/></svg>
<div class="t se" style="top:21.35px;font-size:12px;line-height:14.4px;color:#737373;left:299.20px;transform:scaleX(0.9589);">P</div>
<div class="b" style="left:296px;top:21.8px;width:1px;height:1px;background:#666;"></div>
<div class="b" style="left:308.4px;top:21.8px;width:1px;height:1px;background:#666;"></div>
<div class="b" style="left:296px;top:34px;width:1px;height:1px;background:#666;"></div>
<div class="b" style="left:308.4px;top:34px;width:1px;height:1px;background:#666;"></div>
<div class="b" style="left:312px;top:17px;width:0.6px;height:22px;background:#3c3c3c;"></div>
<svg style="left:315px;top:18.3px" width="8" height="8.2" viewBox="0 0 8 8.2"><rect x="3.1" y="0.2" width="1.8" height="1.8" fill="#5c5c5c"/><path d="M4 2V5.4M1.2 5.6V4H6.8V5.6" stroke="#5c5c5c" stroke-width="0.7" fill="none"/><rect x="0.3" y="5.6" width="1.8" height="1.8" fill="#5c5c5c"/><rect x="3.1" y="5.6" width="1.8" height="1.8" fill="#5c5c5c"/><rect x="5.9" y="5.6" width="1.8" height="1.8" fill="#5c5c5c"/></svg>
<svg style="left:315px;top:30.2px" width="8" height="8.2" viewBox="0 0 8 8.2"><rect x="3.1" y="0.2" width="1.8" height="1.8" fill="#5c5c5c"/><path d="M4 2V6M0.6 4H7.4" stroke="#5c5c5c" stroke-width="0.7" fill="none"/><rect x="0.3" y="3.1" width="1.8" height="1.8" fill="#5c5c5c"/><rect x="5.9" y="3.1" width="1.8" height="1.8" fill="#5c5c5c"/><rect x="3.1" y="5.8" width="1.8" height="1.8" fill="#5c5c5c"/></svg>
<svg style="left:329px;top:18.5px" width="9.4" height="7" viewBox="0 0 9.4 7"><path d="M4.7 1V6M2.6 4V6M6.8 4V6" stroke="#a8a8a8" stroke-width="0.9"/><path d="M0.4 3.6L1.8 2.4V4.8ZM9 3.6L7.6 2.4V4.8Z" fill="#a8a8a8"/></svg>
<svg style="left:329px;top:30px" width="9.4" height="7" viewBox="0 0 9.4 7"><path d="M4.7 1V6M2.6 3.6V6M6.8 3.6V6" stroke="#a8a8a8" stroke-width="0.9"/><path d="M0.4 4L1.8 2.8V5.2ZM9 4L7.6 2.8V5.2Z" fill="#a8a8a8"/></svg>
<div class="b" style="left:345.3px;top:18px;width:8.8px;height:8.8px;background:#1c1c1c;border:0.7px solid #4a4a4a;box-sizing:border-box;"></div>
<div class="b" style="left:345.2px;top:29.6px;width:8.9px;height:8.6px;background:#c2c2c2;border:0.7px solid #d4d4d4;box-sizing:border-box;"></div>
<svg style="left:345.2px;top:29.6px" width="8.8" height="8.8" viewBox="0 0 8.8 8.8"><path d="M0.8 8L8 0.8" stroke="#b01818" stroke-width="1.5"/><rect x="2.9" y="2.9" width="3" height="3" fill="#2a2a2a"/><path d="M2.4 6.4L6.4 2.4" stroke="#b01818" stroke-width="1.3"/></svg>
<div class="b" style="left:356.4px;top:19px;width:5px;height:6.6px;background:#3e3e3e;"></div>
<div class="b" style="left:356.4px;top:30.4px;width:5px;height:6.6px;background:#3e3e3e;"></div>
<svg style="left:0;top:0" width="1024" height="576"><polygon points="358.1,20.9 358.1,23.9 360.05,22.4" fill="#a0a0a0"/></svg>
<svg style="left:0;top:0" width="1024" height="576"><polygon points="358.1,32.2 358.1,35.2 360.05,33.7" fill="#a0a0a0"/></svg>
<svg style="left:0;top:0" width="1024" height="576"><polygon points="370.2,21.980000000000004 373.8,21.980000000000004 372,19.64" fill="#c4c4c4"/></svg>
<svg style="left:0;top:0" width="1024" height="576"><polygon points="370.2,23.22 373.8,23.22 372,25.560000000000002" fill="#c4c4c4"/></svg>
<div class="b" style="left:377px;top:19px;width:24.3px;height:7.1px;background:#7c7c7c;"></div>
<div class="t sa" style="top:19.69px;font-size:5.4px;line-height:6.48px;color:#2a2a2a;left:378.20px;">0 pt</div>
<div class="b" style="left:403px;top:19px;width:6.8px;height:7.1px;background:#444;"></div>
<svg style="left:0;top:0" width="1024" height="576"><polygon points="404.7,21.68 408.09999999999997,21.68 406.4,23.89" fill="#b0b0b0"/></svg>
<div class="b" style="left:369.2px;top:30.2px;width:32.7px;height:7.1px;background:#787878;"></div>
<div class="b" style="left:370.4px;top:31.3px;width:30.3px;height:4.9px;background:#040404;"></div>
<div class="b" style="left:403px;top:30.2px;width:6.8px;height:7.1px;background:#444;"></div>
<svg style="left:0;top:0" width="1024" height="576"><polygon points="404.7,32.879999999999995 408.09999999999997,32.879999999999995 406.4,35.089999999999996" fill="#b0b0b0"/></svg>
<div class="b" style="left:413.5px;top:17px;width:0.7px;height:22px;background:#3e3e3e;"></div>
<svg style="left:419px;top:18.5px" width="8" height="8" viewBox="0 0 8 8"><rect x="0.5" y="0.5" width="5.6" height="5.2" stroke="#a0a0a0" stroke-width="0.9" fill="none"/><path d="M6.6 5V7.2H4.6" stroke="#a0a0a0" stroke-width="0.7" fill="none"/></svg>
<svg style="left:433px;top:18.5px" width="8" height="8" viewBox="0 0 8 8"><rect x="0.5" y="0.5" width="6" height="6" rx="1.2" stroke="#8a8a8a" stroke-width="0.9" fill="none"/><rect x="2" y="2" width="3" height="3" fill="#5a5a5a"/></svg>
<div class="t se" style="top:17.86px;font-size:7.4px;line-height:8.88px;color:#a8a8a8;font-style:italic;left:446.60px;transform:scaleX(1.1405);">fx.</div>
<svg style="left:418px;top:30.2px" width="6.6" height="6.6" viewBox="0 0 6.6 6.6"><rect x="0.3" y="0.3" width="6" height="6" stroke="#8a8a8a" stroke-width="0.6" fill="#5a5a5a"/><rect x="0.3" y="0.3" width="3" height="3" fill="#b0b0b0"/><rect x="3.3" y="3.3" width="3" height="3" fill="#b0b0b0"/></svg>
<div class="b" style="left:428px;top:30.2px;width:18px;height:7.1px;background:#949494;"></div>
<div class="t sa" style="top:30.89px;font-size:5.4px;line-height:6.48px;color:#3a3a3a;left:430.00px;transform:scaleX(0.9123);">100%</div>
<div class="b" style="left:447.3px;top:30.2px;width:6.4px;height:7.1px;background:#444;"></div>
<svg style="left:0;top:0" width="1024" height="576"><polygon points="449.84000000000003,32.199999999999996 449.84000000000003,35.4 451.92,33.8" fill="#b0b0b0"/></svg>
<div class="b" style="left:458px;top:17px;width:0.7px;height:22px;background:#3e3e3e;"></div>
<div class="b" style="left:461.4px;top:17.4px;width:10px;height:9.6px;background:#1c1c1c;"></div>
<div class="b" style="left:462.6px;top:18.4px;width:7.6px;height:7.4px;background:#5c5c5c;"></div>
<div class="b" style="left:462.6px;top:19.799999999999997px;width:7.6px;height:0.7px;background:#333;"></div>
<div class="b" style="left:462.6px;top:23.599999999999998px;width:7.6px;height:0.7px;background:#333;"></div>
<div class="b" style="left:476px;top:18.4px;width:7.6px;height:7.4px;background:#5c5c5c;"></div>
<div class="b" style="left:476px;top:19.799999999999997px;width:7.6px;height:0.7px;background:#333;"></div>
<div class="b" style="left:476px;top:23.599999999999998px;width:7.6px;height:0.7px;background:#333;"></div>
<div class="b" style="left:464.2px;top:20.2px;width:4.4px;height:3.6px;background:#8a8a8a;"></div>
<div class="b" style="left:477.2px;top:20.4px;width:5.2px;height:3.2px;background:#3a3a3a;border:0.6px solid #777;box-sizing:border-box;"></div>
<div class="b" style="left:463px;top:30.4px;width:7.4px;height:7.4px;background:#565656;"></div>
<div class="b" style="left:464.4px;top:31.8px;width:4.6px;height:4.6px;border-radius:50%;background:#9a9a9a"></div>
<div class="b" style="left:476.2px;top:30.4px;width:7.6px;height:7.4px;background:#505050;"></div>
<div class="b" style="left:477.6px;top:32px;width:4.8px;height:2.6px;background:#9a9a9a;"></div>
<div class="b" style="left:476.2px;top:36.2px;width:7.6px;height:0.7px;background:#888;"></div>
<svg style="left:490.8px;top:18.8px" width="8" height="8.4" viewBox="0 0 8 8.4"><rect x="1.6" y="1.8" width="4.8" height="4.8" stroke="#3f7285" stroke-width="1" fill="#35505a"/><path d="M0.4 0.6L2 2.2M7.6 0.6L6 2.2M0.4 7.8L2 6.2M7.6 7.8L6 6.2" stroke="#3f7285" stroke-width="0.9"/></svg>
<svg style="left:0;top:0" width="1024" height="576"><polygon points="503.7,21.980000000000004 507.3,21.980000000000004 505.5,19.64" fill="#b0b0b0"/></svg>
<svg style="left:0;top:0" width="1024" height="576"><polygon points="503.7,23.22 507.3,23.22 505.5,25.560000000000002" fill="#b0b0b0"/></svg>
<div class="b" style="left:510px;top:19px;width:25.2px;height:7.1px;background:#adadad;"></div>
<div class="t sa" style="top:19.69px;font-size:5.4px;line-height:6.48px;color:#333;left:511.40px;transform:scaleX(0.9163);">4.233 mm</div>
<div class="b" style="left:502.3px;top:30.2px;width:12.5px;height:7.1px;background:#8e8e8e;"></div>
<div class="b" style="left:503.4px;top:31.6px;width:9px;height:0.8px;background:#555;"></div>
<div class="b" style="left:503.4px;top:33.4px;width:9px;height:0.8px;background:#555;"></div>
<div class="b" style="left:503.4px;top:35.2px;width:9px;height:0.8px;background:#555;"></div>
<div class="b" style="left:512.8px;top:31px;width:1px;height:5.4px;background:#ddd;"></div>
<div class="b" style="left:516.2px;top:30.2px;width:6.6px;height:7.1px;background:#444;"></div>
<svg style="left:0;top:0" width="1024" height="576"><polygon points="517.9,32.879999999999995 521.3000000000001,32.879999999999995 519.6,35.089999999999996" fill="#b8b8b8"/></svg>
<div class="b" style="left:540.6px;top:17px;width:0.7px;height:22px;background:#444;"></div>
<svg style="left:544.5px;top:19px" width="7" height="7" viewBox="0 0 7 7"><rect x="0.5" y="0.5" width="4.6" height="4.6" stroke="#a8a8a8" stroke-width="0.9" fill="none"/><path d="M6 4.2V6.4" stroke="#a8a8a8" stroke-width="0.8"/></svg>
<div class="b" style="left:556.7px;top:19px;width:59px;height:7.1px;background:#b0b0b0;"></div>
<div class="t sa" style="top:19.88px;font-size:5.2px;line-height:6.24px;color:#262626;left:557.80px;transform:scaleX(0.9448);">[Basic Graphics Frame]+</div>
<div class="b" style="left:617px;top:19px;width:7px;height:7.1px;background:#484848;"></div>
<svg style="left:0;top:0" width="1024" height="576"><polygon points="618.9,21.68 622.3000000000001,21.68 620.6,23.89" fill="#c0c0c0"/></svg>
<svg style="left:600px;top:32px" width="24" height="6" viewBox="0 0 24 6"><path d="M1 0.6L3.4 2.6L2 2.8L2.8 4.4" stroke="#8a8a8a" stroke-width="0.7" fill="none"/><path d="M7 1.4H9.6V4.6H7.8" stroke="#7a7a7a" stroke-width="0.7" fill="none"/><rect x="14.6" y="0.6" width="4" height="4" stroke="#b0b0b0" stroke-width="0.8" fill="none"/><path d="M20.4 3.4L21.4 4.4L23.2 1.4" stroke="#9a9a9a" stroke-width="0.7" fill="none"/></svg>
<div class="b" style="left:629px;top:17px;width:0.7px;height:22px;background:#3e3e3e;"></div>
<svg style="left:1000px;top:24px" width="6.4" height="8.4" viewBox="0 0 6.4 8.4"><path d="M3.6 0.3L0.8 4.6H3L1.8 8.1L5.4 3.2H3.2L4.8 0.3Z" fill="#a8a8a8"/></svg>
<div class="b" style="left:1014px;top:27px;width:1.4px;height:1.4px;background:#999;"></div>
<div class="b" style="left:1016.4px;top:25.4px;width:4.4px;height:0.9px;background:#8c8c8c;"></div>
<div class="b" style="left:1016.4px;top:27.2px;width:4.4px;height:0.9px;background:#8c8c8c;"></div>
<div class="b" style="left:1016.4px;top:29px;width:4.4px;height:0.9px;background:#8c8c8c;"></div>
<div class="b" style="left:0px;top:40px;width:1024px;height:11px;background:#242424;"></div>
<div class="b" style="left:17.5px;top:41px;width:151.2px;height:10px;background:#333;"></div>
<svg style="left:159.8px;top:44.8px" width="4" height="4" viewBox="0 0 4 4"><path d="M0.4 0.4L3.6 3.6M3.6 0.4L0.4 3.6" stroke="#b0b0b0" stroke-width="0.8"/></svg>
<div class="b" style="left:0px;top:40px;width:16.5px;height:536px;background:#333333;"></div>
<div class="b" style="left:0px;top:40px;width:16.5px;height:11px;background:#282828;"></div>
<svg style="left:3px;top:42.5px" width="5" height="3" viewBox="0 0 5 3"><path d="M0.4 0.3L1.8 1.5L0.4 2.7M2.6 0.3L4 1.5L2.6 2.7" stroke="#a0a0a0" stroke-width="0.7" fill="none"/></svg>
<div class="b" style="left:4px;top:53.4px;width:1px;height:1.4px;background:#4a4a4a;"></div>
<div class="b" style="left:6px;top:53.4px;width:1px;height:1.4px;background:#4a4a4a;"></div>
<div class="b" style="left:8px;top:53.4px;width:1px;height:1.4px;background:#4a4a4a;"></div>
<div class="b" style="left:10px;top:53.4px;width:1px;height:1.4px;background:#4a4a4a;"></div>
<div class="b" style="left:12px;top:53.4px;width:1px;height:1.4px;background:#4a4a4a;"></div>
<div class="b" style="left:1.8px;top:56.4px;width:13.4px;height:9.6px;background:#1f1f1f;"></div>
<svg style="left:5px;top:57px" width="7" height="8.5" viewBox="0 0 7 8.5"><path d="M1 0.6L1 6.6L2.6 5.2L3.8 7.8L4.8 7.3L3.7 4.8L5.8 4.6Z" stroke="#9c9c9c" stroke-width="0.8" fill="#2a2a2a" stroke-dasharray="1.6 0.6"/></svg>
<svg style="left:5px;top:69px" width="7" height="8" viewBox="0 0 7 8"><path d="M1.2 0.4L1.2 6.4L2.8 5L4 7.4L5 7L3.8 4.6L5.8 4.4Z" fill="#9c9c9c"/></svg>
<svg style="left:5px;top:80px" width="8" height="8" viewBox="0 0 8 8"><path d="M0.5 0.5H3.6L5.4 2.4V7.5H0.5Z" fill="#9c9c9c"/><path d="M3.4 3L3.4 7.6L4.6 6.6L5.4 8L6.2 7.6L5.4 6.2L6.8 6Z" fill="#d0d0d0" stroke="#333" stroke-width="0.3"/></svg>
<svg style="left:3px;top:91.4px" width="11" height="7.6" viewBox="0 0 11 7.6"><path d="M0.6 0.3V7.3M10.4 0.3V7.3M2.4 3.8H8.6" stroke="#9c9c9c" stroke-width="1"/><path d="M1.8 3.8L3.6 2.4V5.2ZM9.2 3.8L7.4 2.4V5.2Z" fill="#9c9c9c"/></svg>
<svg style="left:4.5px;top:102px" width="9" height="9" viewBox="0 0 9 9"><path d="M0.6 4.4V8.2H8V4.4M2.2 6.6H3.4M4.2 6.6H5.4M6 6.6H7" stroke="#9c9c9c" stroke-width="1" fill="none"/><path d="M1.6 0.6L4.6 3.4" stroke="#9c9c9c" stroke-width="1.3"/><path d="M3.2 4.8L5.8 4.4L5.4 2Z" fill="#9c9c9c"/></svg>
<div class="t se" style="top:114.29px;font-size:11px;line-height:13.2px;color:#a4a4a4;left:5.20px;transform:scaleX(0.9822);">T</div>
<div class="b" style="left:12.6px;top:124.4px;width:1.2px;height:1.2px;background:#9c9c9c;"></div>
<svg style="left:4.5px;top:128px" width="8" height="8" viewBox="0 0 8 8"><path d="M0.4 7.4L7.4 0.6" stroke="#9c9c9c" stroke-width="0.9"/></svg>
<svg style="left:4px;top:138.5px" width="10" height="9.5" viewBox="0 0 10 9.5"><path d="M0.6 8.6L1.4 4.6L5 1.8L7.6 4.4L4.8 7.8Z" fill="#9c9c9c"/><path d="M5.4 1.4L6.6 0.4L9 2.8L8 4Z" fill="#9c9c9c"/><path d="M0.6 8.6L3.4 5.6" stroke="#333" stroke-width="0.6"/></svg>
<div class="b" style="left:13px;top:147px;width:1.2px;height:1.2px;background:#9c9c9c;"></div>
<svg style="left:4px;top:150.6px" width="10" height="9" viewBox="0 0 10 9"><path d="M0.6 8L1.4 5.8L6.4 0.8L8 2.4L3 7.4Z" fill="#9c9c9c"/><path d="M6.2 2.2L4.2 4.2" stroke="#333" stroke-width="0.7"/></svg>
<div class="b" style="left:13px;top:158.6px;width:1.2px;height:1.2px;background:#9c9c9c;"></div>
<svg style="left:4.5px;top:163px" width="8" height="6.6" viewBox="0 0 8 6.6"><rect x="0.5" y="0.5" width="7" height="5.6" stroke="#9c9c9c" stroke-width="0.9" fill="none"/><path d="M0.5 0.5L7.5 6.1M7.5 0.5L0.5 6.1" stroke="#9c9c9c" stroke-width="0.7"/></svg>
<div class="b" style="left:13px;top:169.4px;width:1.2px;height:1.2px;background:#9c9c9c;"></div>
<svg style="left:4.5px;top:174.2px" width="8" height="6.6" viewBox="0 0 8 6.6"><rect x="0.5" y="0.5" width="7" height="5.6" stroke="#9c9c9c" stroke-width="1" fill="#5a5a5a"/></svg>
<div class="b" style="left:13px;top:180.6px;width:1.2px;height:1.2px;background:#9c9c9c;"></div>
<svg style="left:4px;top:186.8px" width="10" height="8" viewBox="0 0 10 8"><path d="M0.6 0.8L8.6 6.6M0.6 6.8L8.8 1" stroke="#9c9c9c" stroke-width="0.9"/><circle cx="8.3" cy="1.4" r="1" stroke="#9c9c9c" stroke-width="0.7" fill="none"/><circle cx="8.3" cy="6.4" r="1" stroke="#9c9c9c" stroke-width="0.7" fill="none"/></svg>
<svg style="left:4px;top:199.8px" width="10" height="8" viewBox="0 0 10 8"><path d="M0.6 0.6L0.6 5.6L2 4.4L3 6.4L3.9 6L3 4L4.8 3.8Z" fill="#9c9c9c"/><path d="M5.6 1H9V6.6H4.4" stroke="#9c9c9c" stroke-width="0.8" fill="none" stroke-dasharray="1.2 0.8"/></svg>
<div class="b" style="left:13px;top:207px;width:1.2px;height:1.2px;background:#9c9c9c;"></div>
<div class="b" style="left:4px;top:211px;width:9px;height:7px;box-sizing:border-box;border:0.8px solid #9a9a9a;background:linear-gradient(90deg,#555,#999)"></div>
<div class="b" style="left:4px;top:222.4px;width:9px;height:7px;box-sizing:border-box;border:0.8px solid #9a9a9a;background:linear-gradient(90deg,#777,#4a4a4a)"></div>
<svg style="left:4px;top:222.4px" width="9" height="7" viewBox="0 0 9 7"><path d="M1 1.6H8M1 3H8" stroke="#bbb" stroke-width="0.6" stroke-dasharray="1 1"/></svg>
<svg style="left:5px;top:236.6px" width="8" height="8" viewBox="0 0 8 8"><path d="M0.5 0.5H7.2V5.4H4L2.4 7.2V5.4H0.5Z" stroke="#9c9c9c" stroke-width="0.9" fill="#6a6a6a"/></svg>
<div class="b" style="left:13px;top:244px;width:1.2px;height:1.2px;background:#9c9c9c;"></div>
<svg style="left:4px;top:248px" width="10" height="8.5" viewBox="0 0 10 8.5"><path d="M0.6 7.8L1 6.4L5.4 2L6.8 3.4L2.4 7.6Z" fill="#9c9c9c"/><path d="M5.8 1.2L7.4 0.2L8.8 1.6L7.6 3.2Z" fill="#9c9c9c"/></svg>
<div class="b" style="left:13px;top:256px;width:1.2px;height:1.2px;background:#9c9c9c;"></div>
<svg style="left:4px;top:258.3px" width="9" height="9" viewBox="0 0 9 9"><path d="M2.2 8.6C0.8 6.6 0.4 5.4 0.6 4.6C1.2 4.4 1.8 5 2.2 5.6V1.6C2.6 1 3.2 1 3.4 1.6V0.8C3.8 0.2 4.6 0.2 4.8 0.8V1.4C5.2 0.8 5.9 0.9 6.1 1.5V2.4C6.5 1.9 7.2 2 7.4 2.6V6C7.4 7.2 7 8 6.6 8.6Z" fill="#9c9c9c"/></svg>
<svg style="left:4.5px;top:270px" width="9" height="8.5" viewBox="0 0 9 8.5"><circle cx="3.2" cy="3.2" r="2.5" stroke="#9c9c9c" stroke-width="1" fill="none"/><path d="M5 5L8.2 8" stroke="#9c9c9c" stroke-width="1.4"/></svg>
<div class="b" style="left:3.5px;top:284px;width:5.6px;height:5.8px;background:#0c0c0c;border:0.5px solid #555;box-sizing:border-box;"></div>
<div class="b" style="left:8px;top:287.2px;width:6.6px;height:6.4px;background:#b5b5b5;"></div>
<div class="b" style="left:9.4px;top:288.6px;width:3.8px;height:3.6px;background:#7a1a2a;"></div>
<svg style="left:10.6px;top:282.6px" width="4" height="4" viewBox="0 0 4 4"><path d="M0.4 1.2C2.4 0.6 3.2 1.6 3.2 3.4" stroke="#999" stroke-width="0.7" fill="none"/></svg>
<svg style="left:3px;top:294px" width="4" height="4" viewBox="0 0 4 4"><path d="M0.4 0.6L3.4 3.4" stroke="#a02030" stroke-width="1"/></svg>
<div class="b" style="left:3.6px;top:303px;width:4.4px;height:4.6px;background:#4a4a4a;border:0.8px solid #a0a0a0;box-sizing:border-box;"></div>
<div class="t sa" style="top:301.39px;font-size:7.2px;line-height:8.64px;color:#b0b0b0;font-weight:bold;left:9.80px;transform:scaleX(1.0914);">T</div>
<div class="b" style="left:1.8px;top:310.8px;width:12.8px;height:10.8px;background:#222;"></div>
<div class="b" style="left:4.8px;top:313px;width:6.4px;height:6.6px;background:#080808;border:0.7px solid #666;box-sizing:border-box;"></div>
<div class="b" style="left:13px;top:320px;width:1.2px;height:1.2px;background:#bbb;"></div>
<div class="b" style="left:1.8px;top:326.3px;width:12.8px;height:10.8px;background:#262626;"></div>
<div class="b" style="left:5.4px;top:329px;width:6.2px;height:6px;background:#555;border:0.8px solid #a0a0a0;box-sizing:border-box;"></div>
<div class="b" style="left:5.4px;top:329px;width:6.2px;height:1.6px;background:#a0a0a0;"></div>
<div class="b" style="left:13px;top:335.4px;width:1.2px;height:1.2px;background:#bbb;"></div>
<div class="b" style="left:26.2px;top:560.7px;width:370px;height:2.1px;background:#1e1e1e;"></div>
<div class="b" style="left:435.4px;top:561.0px;width:468px;height:2.0px;background:#212121;"></div>
<div class="b" style="left:16.5px;top:566.8px;width:1007.5px;height:1.2px;background:#202020;"></div>
<div class="b" style="left:16.5px;top:567.6px;width:1007.5px;height:8.4px;background:#262626;"></div>
<div class="b" style="left:16.5px;top:50.2px;width:399.5px;height:10.4px;background:#242424;"></div>
<svg style="left:0;top:0" width="1024" height="576"><rect x="17.81" y="59.4" width="0.5" height="1" fill="#3a3a3a" opacity="0.4"/><rect x="19.47" y="59.4" width="0.5" height="1" fill="#3a3a3a" opacity="0.4"/><rect x="21.13" y="58.6" width="0.5" height="1.8" fill="#3a3a3a" opacity="0.6"/><rect x="22.80" y="59.4" width="0.5" height="1" fill="#3a3a3a" opacity="0.4"/><rect x="24.46" y="59.4" width="0.5" height="1" fill="#3a3a3a" opacity="0.4"/><rect x="26.12" y="59.4" width="0.5" height="1" fill="#3a3a3a" opacity="0.4"/><rect x="27.78" y="59.4" width="0.5" height="1" fill="#3a3a3a" opacity="0.4"/><rect x="29.34" y="51.8" width="0.7" height="8.4" fill="#3a3a3a"/><rect x="31.10" y="59.4" width="0.5" height="1" fill="#3a3a3a" opacity="0.4"/><rect x="32.76" y="59.4" width="0.5" height="1" fill="#3a3a3a" opacity="0.4"/><rect x="34.42" y="59.4" width="0.5" height="1" fill="#3a3a3a" opacity="0.4"/><rect x="36.08" y="59.4" width="0.5" height="1" fill="#3a3a3a" opacity="0.4"/><rect x="37.74" y="58.6" width="0.5" height="1.8" fill="#3a3a3a" opacity="0.6"/><rect x="39.41" y="59.4" width="0.5" height="1" fill="#3a3a3a" opacity="0.4"/><rect x="41.07" y="59.4" width="0.5" height="1" fill="#3a3a3a" opacity="0.4"/><rect x="42.73" y="59.4" width="0.5" height="1" fill="#3a3a3a" opacity="0.4"/><rect x="44.39" y="59.4" width="0.5" height="1" fill="#3a3a3a" opacity="0.4"/><rect x="45.95" y="51.8" width="0.7" height="8.4" fill="#3a3a3a"/><rect x="47.71" y="59.4" width="0.5" height="1" fill="#3a3a3a" opacity="0.4"/><rect x="49.37" y="59.4" width="0.5" height="1" fill="#3a3a3a" opacity="0.4"/><rect x="51.03" y="59.4" width="0.5" height="1" fill="#3a3a3a" opacity="0.4"/><rect x="52.69" y="59.4" width="0.5" height="1" fill="#3a3a3a" opacity="0.4"/><rect x="54.35" y="58.6" width="0.5" height="1.8" fill="#3a3a3a" opacity="0.6"/><rect x="56.02" y="59.4" width="0.5" height="1" fill="#3a3a3a" opacity="0.4"/><rect x="57.68" y="59.4" width="0.5" height="1" fill="#3a3a3a" opacity="0.4"/><rect x="59.34" y="59.4" width="0.5" height="1" fill="#3a3a3a" opacity="0.4"/><rect x="61.00" y="59.4" width="0.5" height="1" fill="#3a3a3a" opacity="0.4"/><rect x="62.56" y="51.8" width="0.7" height="8.4" fill="#3a3a3a"/><rect x="64.32" y="59.4" width="0.5" height="1" fill="#3a3a3a" opacity="0.4"/><rect x="65.98" y="59.4" width="0.5" height="1" fill="#3a3a3a" opacity="0.4"/><rect x="67.64" y="59.4" width="0.5" height="1" fill="#3a3a3a" opacity="0.4"/><rect x="69.30" y="59.4" width="0.5" height="1" fill="#3a3a3a" opacity="0.4"/><rect x="70.97" y="58.6" width="0.5" height="1.8" fill="#3a3a3a" opacity="0.6"/><rect x="72.63" y="59.4" width="0.5" height="1" fill="#3a3a3a" opacity="0.4"/><rect x="74.29" y="59.4" width="0.5" height="1" fill="#3a3a3a" opacity="0.4"/><rect x="75.95" y="59.4" width="0.5" height="1" fill="#3a3a3a" opacity="0.4"/><rect x="77.61" y="59.4" width="0.5" height="1" fill="#3a3a3a" opacity="0.4"/><rect x="79.17" y="51.8" width="0.7" height="8.4" fill="#3a3a3a"/><rect x="80.93" y="59.4" width="0.5" height="1" fill="#3a3a3a" opacity="0.4"/><rect x="82.59" y="59.4" width="0.5" height="1" fill="#3a3a3a" opacity="0.4"/><rect x="84.25" y="59.4" width="0.5" height="1" fill="#3a3a3a" opacity="0.4"/><rect x="85.91" y="59.4" width="0.5" height="1" fill="#3a3a3a" opacity="0.4"/><rect x="87.57" y="58.6" width="0.5" height="1.8" fill="#3a3a3a" opacity="0.6"/><rect x="89.24" y="59.4" width="0.5" height="1" fill="#3a3a3a" opacity="0.4"/><rect x="90.90" y="59.4" width="0.5" height="1" fill="#3a3a3a" opacity="0.4"/><rect x="92.56" y="59.4" width="0.5" height="1" fill="#3a3a3a" opacity="0.4"/><rect x="94.22" y="59.4" width="0.5" height="1" fill="#3a3a3a" opacity="0.4"/><rect x="95.78" y="51.8" width="0.7" height="8.4" fill="#3a3a3a"/><rect x="97.54" y="59.4" width="0.5" height="1" fill="#3a3a3a" opacity="0.4"/><rect x="99.20" y="59.4" width="0.5" height="1" fill="#3a3a3a" opacity="0.4"/><rect x="100.86" y="59.4" width="0.5" height="1" fill="#3a3a3a" opacity="0.4"/><rect x="102.52" y="59.4" width="0.5" height="1" fill="#3a3a3a" opacity="0.4"/><rect x="104.19" y="58.6" width="0.5" height="1.8" fill="#3a3a3a" opacity="0.6"/><rect x="105.85" y="59.4" width="0.5" height="1" fill="#3a3a3a" opacity="0.4"/><rect x="107.51" y="59.4" width="0.5" height="1" fill="#3a3a3a" opacity="0.4"/><rect x="109.17" y="59.4" width="0.5" height="1" fill="#3a3a3a" opacity="0.4"/><rect x="110.83" y="59.4" width="0.5" height="1" fill="#3a3a3a" opacity="0.4"/><rect x="112.39" y="51.8" width="0.7" height="8.4" fill="#3a3a3a"/><rect x="114.15" y="59.4" width="0.5" height="1" fill="#3a3a3a" opacity="0.4"/><rect x="115.81" y="59.4" width="0.5" height="1" fill="#3a3a3a" opacity="0.4"/><rect x="117.47" y="59.4" width="0.5" height="1" fill="#3a3a3a" opacity="0.4"/><rect x="119.13" y="59.4" width="0.5" height="1" fill="#3a3a3a" opacity="0.4"/><rect x="120.80" y="58.6" width="0.5" height="1.8" fill="#3a3a3a" opacity="0.6"/><rect x="122.46" y="59.4" width="0.5" height="1" fill="#3a3a3a" opacity="0.4"/><rect x="124.12" y="59.4" width="0.5" height="1" fill="#3a3a3a" opacity="0.4"/><rect x="125.78" y="59.4" width="0.5" height="1" fill="#3a3a3a" opacity="0.4"/><rect x="127.44" y="59.4" width="0.5" height="1" fill="#3a3a3a" opacity="0.4"/><rect x="129.00" y="51.8" width="0.7" height="8.4" fill="#3a3a3a"/><rect x="130.76" y="59.4" width="0.5" height="1" fill="#3a3a3a" opacity="0.4"/><rect x="132.42" y="59.4" width="0.5" height="1" fill="#3a3a3a" opacity="0.4"/><rect x="134.08" y="59.4" width="0.5" height="1" fill="#3a3a3a" opacity="0.4"/><rect x="135.74" y="59.4" width="0.5" height="1" fill="#3a3a3a" opacity="0.4"/><rect x="137.41" y="58.6" width="0.5" height="1.8" fill="#3a3a3a" opacity="0.6"/><rect x="139.07" y="59.4" width="0.5" height="1" fill="#3a3a3a" opacity="0.4"/><rect x="140.73" y="59.4" width="0.5" height="1" fill="#3a3a3a" opacity="0.4"/><rect x="142.39" y="59.4" width="0.5" height="1" fill="#3a3a3a" opacity="0.4"/><rect x="144.05" y="59.4" width="0.5" height="1" fill="#3a3a3a" opacity="0.4"/><rect x="145.61" y="51.8" width="0.7" height="8.4" fill="#3a3a3a"/><rect x="147.37" y="59.4" width="0.5" height="1" fill="#3a3a3a" opacity="0.4"/><rect x="149.03" y="59.4" width="0.5" height="1" fill="#3a3a3a" opacity="0.4"/><rect x="150.69" y="59.4" width="0.5" height="1" fill="#3a3a3a" opacity="0.4"/><rect x="152.35" y="59.4" width="0.5" height="1" fill="#3a3a3a" opacity="0.4"/><rect x="154.01" y="58.6" width="0.5" height="1.8" fill="#3a3a3a" opacity="0.6"/><rect x="155.68" y="59.4" width="0.5" height="1" fill="#3a3a3a" opacity="0.4"/><rect x="157.34" y="59.4" width="0.5" height="1" fill="#3a3a3a" opacity="0.4"/><rect x="159.00" y="59.4" width="0.5" height="1" fill="#3a3a3a" opacity="0.4"/><rect x="160.66" y="59.4" width="0.5" height="1" fill="#3a3a3a" opacity="0.4"/><rect x="162.22" y="51.8" width="0.7" height="8.4" fill="#3a3a3a"/><rect x="163.98" y="59.4" width="0.5" height="1" fill="#3a3a3a" opacity="0.4"/><rect x="165.64" y="59.4" width="0.5" height="1" fill="#3a3a3a" opacity="0.4"/><rect x="167.30" y="59.4" width="0.5" height="1" fill="#3a3a3a" opacity="0.4"/><rect x="168.96" y="59.4" width="0.5" height="1" fill="#3a3a3a" opacity="0.4"/><rect x="170.62" y="58.6" width="0.5" height="1.8" fill="#3a3a3a" opacity="0.6"/><rect x="172.29" y="59.4" width="0.5" height="1" fill="#3a3a3a" opacity="0.4"/><rect x="173.95" y="59.4" width="0.5" height="1" fill="#3a3a3a" opacity="0.4"/><rect x="175.61" y="59.4" width="0.5" height="1" fill="#3a3a3a" opacity="0.4"/><rect x="177.27" y="59.4" width="0.5" height="1" fill="#3a3a3a" opacity="0.4"/><rect x="178.83" y="51.8" width="0.7" height="8.4" fill="#3a3a3a"/><rect x="180.59" y="59.4" width="0.5" height="1" fill="#3a3a3a" opacity="0.4"/><rect x="182.25" y="59.4" width="0.5" height="1" fill="#3a3a3a" opacity="0.4"/><rect x="183.91" y="59.4" width="0.5" height="1" fill="#3a3a3a" opacity="0.4"/><rect x="185.57" y="59.4" width="0.5" height="1" fill="#3a3a3a" opacity="0.4"/><rect x="187.24" y="58.6" width="0.5" height="1.8" fill="#3a3a3a" opacity="0.6"/><rect x="188.90" y="59.4" width="0.5" height="1" fill="#3a3a3a" opacity="0.4"/><rect x="190.56" y="59.4" width="0.5" height="1" fill="#3a3a3a" opacity="0.4"/><rect x="192.22" y="59.4" width="0.5" height="1" fill="#3a3a3a" opacity="0.4"/><rect x="193.88" y="59.4" width="0.5" height="1" fill="#3a3a3a" opacity="0.4"/><rect x="195.44" y="51.8" width="0.7" height="8.4" fill="#3a3a3a"/><rect x="197.20" y="59.4" width="0.5" height="1" fill="#3a3a3a" opacity="0.4"/><rect x="198.86" y="59.4" width="0.5" height="1" fill="#3a3a3a" opacity="0.4"/><rect x="200.52" y="59.4" width="0.5" height="1" fill="#3a3a3a" opacity="0.4"/><rect x="202.18" y="59.4" width="0.5" height="1" fill="#3a3a3a" opacity="0.4"/><rect x="203.85" y="58.6" width="0.5" height="1.8" fill="#3a3a3a" opacity="0.6"/><rect x="205.51" y="59.4" width="0.5" height="1" fill="#3a3a3a" opacity="0.4"/><rect x="207.17" y="59.4" width="0.5" height="1" fill="#3a3a3a" opacity="0.4"/><rect x="208.83" y="59.4" width="0.5" height="1" fill="#3a3a3a" opacity="0.4"/><rect x="210.49" y="59.4" width="0.5" height="1" fill="#3a3a3a" opacity="0.4"/><rect x="212.05" y="51.8" width="0.7" height="8.4" fill="#3a3a3a"/><rect x="213.81" y="59.4" width="0.5" height="1" fill="#3a3a3a" opacity="0.4"/><rect x="215.47" y="59.4" width="0.5" height="1" fill="#3a3a3a" opacity="0.4"/><rect x="217.13" y="59.4" width="0.5" height="1" fill="#3a3a3a" opacity="0.4"/><rect x="218.79" y="59.4" width="0.5" height="1" fill="#3a3a3a" opacity="0.4"/><rect x="220.45" y="58.6" width="0.5" height="1.8" fill="#3a3a3a" opacity="0.6"/><rect x="222.12" y="59.4" width="0.5" height="1" fill="#3a3a3a" opacity="0.4"/><rect x="223.78" y="59.4" width="0.5" height="1" fill="#3a3a3a" opacity="0.4"/><rect x="225.44" y="59.4" width="0.5" height="1" fill="#3a3a3a" opacity="0.4"/><rect x="227.10" y="59.4" width="0.5" height="1" fill="#3a3a3a" opacity="0.4"/><rect x="228.66" y="51.8" width="0.7" height="8.4" fill="#3a3a3a"/><rect x="230.42" y="59.4" width="0.5" height="1" fill="#3a3a3a" opacity="0.4"/><rect x="232.08" y="59.4" width="0.5" height="1" fill="#3a3a3a" opacity="0.4"/><rect x="233.74" y="59.4" width="0.5" height="1" fill="#3a3a3a" opacity="0.4"/><rect x="235.40" y="59.4" width="0.5" height="1" fill="#3a3a3a" opacity="0.4"/><rect x="237.06" y="58.6" width="0.5" height="1.8" fill="#3a3a3a" opacity="0.6"/><rect x="238.73" y="59.4" width="0.5" height="1" fill="#3a3a3a" opacity="0.4"/><rect x="240.39" y="59.4" width="0.5" height="1" fill="#3a3a3a" opacity="0.4"/><rect x="242.05" y="59.4" width="0.5" height="1" fill="#3a3a3a" opacity="0.4"/><rect x="243.71" y="59.4" width="0.5" height="1" fill="#3a3a3a" opacity="0.4"/><rect x="245.27" y="51.8" width="0.7" height="8.4" fill="#3a3a3a"/><rect x="247.03" y="59.4" width="0.5" height="1" fill="#3a3a3a" opacity="0.4"/><rect x="248.69" y="59.4" width="0.5" height="1" fill="#3a3a3a" opacity="0.4"/><rect x="250.35" y="59.4" width="0.5" height="1" fill="#3a3a3a" opacity="0.4"/><rect x="252.01" y="59.4" width="0.5" height="1" fill="#3a3a3a" opacity="0.4"/><rect x="253.68" y="58.6" width="0.5" height="1.8" fill="#3a3a3a" opacity="0.6"/><rect x="255.34" y="59.4" width="0.5" height="1" fill="#3a3a3a" opacity="0.4"/><rect x="257.00" y="59.4" width="0.5" height="1" fill="#3a3a3a" opacity="0.4"/><rect x="258.66" y="59.4" width="0.5" height="1" fill="#3a3a3a" opacity="0.4"/><rect x="260.32" y="59.4" width="0.5" height="1" fill="#3a3a3a" opacity="0.4"/><rect x="261.88" y="51.8" width="0.7" height="8.4" fill="#3a3a3a"/><rect x="263.64" y="59.4" width="0.5" height="1" fill="#3a3a3a" opacity="0.4"/><rect x="265.30" y="59.4" width="0.5" height="1" fill="#3a3a3a" opacity="0.4"/><rect x="266.96" y="59.4" width="0.5" height="1" fill="#3a3a3a" opacity="0.4"/><rect x="268.62" y="59.4" width="0.5" height="1" fill="#3a3a3a" opacity="0.4"/><rect x="270.29" y="58.6" width="0.5" height="1.8" fill="#3a3a3a" opacity="0.6"/><rect x="271.95" y="59.4" width="0.5" height="1" fill="#3a3a3a" opacity="0.4"/><rect x="273.61" y="59.4" width="0.5" height="1" fill="#3a3a3a" opacity="0.4"/><rect x="275.27" y="59.4" width="0.5" height="1" fill="#3a3a3a" opacity="0.4"/><rect x="276.93" y="59.4" width="0.5" height="1" fill="#3a3a3a" opacity="0.4"/><rect x="278.49" y="51.8" width="0.7" height="8.4" fill="#3a3a3a"/><rect x="280.25" y="59.4" width="0.5" height="1" fill="#3a3a3a" opacity="0.4"/><rect x="281.91" y="59.4" width="0.5" height="1" fill="#3a3a3a" opacity="0.4"/><rect x="283.57" y="59.4" width="0.5" height="1" fill="#3a3a3a" opacity="0.4"/><rect x="285.23" y="59.4" width="0.5" height="1" fill="#3a3a3a" opacity="0.4"/><rect x="286.89" y="58.6" width="0.5" height="1.8" fill="#3a3a3a" opacity="0.6"/><rect x="288.56" y="59.4" width="0.5" height="1" fill="#3a3a3a" opacity="0.4"/><rect x="290.22" y="59.4" width="0.5" height="1" fill="#3a3a3a" opacity="0.4"/><rect x="291.88" y="59.4" width="0.5" height="1" fill="#3a3a3a" opacity="0.4"/><rect x="293.54" y="59.4" width="0.5" height="1" fill="#3a3a3a" opacity="0.4"/><rect x="295.10" y="51.8" width="0.7" height="8.4" fill="#3a3a3a"/><rect x="296.86" y="59.4" width="0.5" height="1" fill="#3a3a3a" opacity="0.4"/><rect x="298.52" y="59.4" width="0.5" height="1" fill="#3a3a3a" opacity="0.4"/><rect x="300.18" y="59.4" width="0.5" height="1" fill="#3a3a3a" opacity="0.4"/><rect x="301.84" y="59.4" width="0.5" height="1" fill="#3a3a3a" opacity="0.4"/><rect x="303.50" y="58.6" width="0.5" height="1.8" fill="#3a3a3a" opacity="0.6"/><rect x="305.17" y="59.4" width="0.5" height="1" fill="#3a3a3a" opacity="0.4"/><rect x="306.83" y="59.4" width="0.5" height="1" fill="#3a3a3a" opacity="0.4"/><rect x="308.49" y="59.4" width="0.5" height="1" fill="#3a3a3a" opacity="0.4"/><rect x="310.15" y="59.4" width="0.5" height="1" fill="#3a3a3a" opacity="0.4"/><rect x="311.71" y="51.8" width="0.7" height="8.4" fill="#3a3a3a"/><rect x="313.47" y="59.4" width="0.5" height="1" fill="#3a3a3a" opacity="0.4"/><rect x="315.13" y="59.4" width="0.5" height="1" fill="#3a3a3a" opacity="0.4"/><rect x="316.79" y="59.4" width="0.5" height="1" fill="#3a3a3a" opacity="0.4"/><rect x="318.45" y="59.4" width="0.5" height="1" fill="#3a3a3a" opacity="0.4"/><rect x="320.12" y="58.6" width="0.5" height="1.8" fill="#3a3a3a" opacity="0.6"/><rect x="321.78" y="59.4" width="0.5" height="1" fill="#3a3a3a" opacity="0.4"/><rect x="323.44" y="59.4" width="0.5" height="1" fill="#3a3a3a" opacity="0.4"/><rect x="325.10" y="59.4" width="0.5" height="1" fill="#3a3a3a" opacity="0.4"/><rect x="326.76" y="59.4" width="0.5" height="1" fill="#3a3a3a" opacity="0.4"/><rect x="328.32" y="51.8" width="0.7" height="8.4" fill="#3a3a3a"/><rect x="330.08" y="59.4" width="0.5" height="1" fill="#3a3a3a" opacity="0.4"/><rect x="331.74" y="59.4" width="0.5" height="1" fill="#3a3a3a" opacity="0.4"/><rect x="333.40" y="59.4" width="0.5" height="1" fill="#3a3a3a" opacity="0.4"/><rect x="335.06" y="59.4" width="0.5" height="1" fill="#3a3a3a" opacity="0.4"/><rect x="336.73" y="58.6" width="0.5" height="1.8" fill="#3a3a3a" opacity="0.6"/><rect x="338.39" y="59.4" width="0.5" height="1" fill="#3a3a3a" opacity="0.4"/><rect x="340.05" y="59.4" width="0.5" height="1" fill="#3a3a3a" opacity="0.4"/><rect x="341.71" y="59.4" width="0.5" height="1" fill="#3a3a3a" opacity="0.4"/><rect x="343.37" y="59.4" width="0.5" height="1" fill="#3a3a3a" opacity="0.4"/><rect x="344.93" y="51.8" width="0.7" height="8.4" fill="#3a3a3a"/><rect x="346.69" y="59.4" width="0.5" height="1" fill="#3a3a3a" opacity="0.4"/><rect x="348.35" y="59.4" width="0.5" height="1" fill="#3a3a3a" opacity="0.4"/><rect x="350.01" y="59.4" width="0.5" height="1" fill="#3a3a3a" opacity="0.4"/><rect x="351.67" y="59.4" width="0.5" height="1" fill="#3a3a3a" opacity="0.4"/><rect x="353.34" y="58.6" width="0.5" height="1.8" fill="#3a3a3a" opacity="0.6"/><rect x="355.00" y="59.4" width="0.5" height="1" fill="#3a3a3a" opacity="0.4"/><rect x="356.66" y="59.4" width="0.5" height="1" fill="#3a3a3a" opacity="0.4"/><rect x="358.32" y="59.4" width="0.5" height="1" fill="#3a3a3a" opacity="0.4"/><rect x="359.98" y="59.4" width="0.5" height="1" fill="#3a3a3a" opacity="0.4"/><rect x="361.54" y="51.8" width="0.7" height="8.4" fill="#3a3a3a"/><rect x="363.30" y="59.4" width="0.5" height="1" fill="#3a3a3a" opacity="0.4"/><rect x="364.96" y="59.4" width="0.5" height="1" fill="#3a3a3a" opacity="0.4"/><rect x="366.62" y="59.4" width="0.5" height="1" fill="#3a3a3a" opacity="0.4"/><rect x="368.28" y="59.4" width="0.5" height="1" fill="#3a3a3a" opacity="0.4"/><rect x="369.94" y="58.6" width="0.5" height="1.8" fill="#3a3a3a" opacity="0.6"/><rect x="371.61" y="59.4" width="0.5" height="1" fill="#3a3a3a" opacity="0.4"/><rect x="373.27" y="59.4" width="0.5" height="1" fill="#3a3a3a" opacity="0.4"/><rect x="374.93" y="59.4" width="0.5" height="1" fill="#3a3a3a" opacity="0.4"/><rect x="376.59" y="59.4" width="0.5" height="1" fill="#3a3a3a" opacity="0.4"/><rect x="378.15" y="51.8" width="0.7" height="8.4" fill="#3a3a3a"/><rect x="379.91" y="59.4" width="0.5" height="1" fill="#3a3a3a" opacity="0.4"/><rect x="381.57" y="59.4" width="0.5" height="1" fill="#3a3a3a" opacity="0.4"/><rect x="383.23" y="59.4" width="0.5" height="1" fill="#3a3a3a" opacity="0.4"/><rect x="384.89" y="59.4" width="0.5" height="1" fill="#3a3a3a" opacity="0.4"/><rect x="386.56" y="58.6" width="0.5" height="1.8" fill="#3a3a3a" opacity="0.6"/><rect x="388.22" y="59.4" width="0.5" height="1" fill="#3a3a3a" opacity="0.4"/><rect x="389.88" y="59.4" width="0.5" height="1" fill="#3a3a3a" opacity="0.4"/><rect x="391.54" y="59.4" width="0.5" height="1" fill="#3a3a3a" opacity="0.4"/><rect x="393.20" y="59.4" width="0.5" height="1" fill="#3a3a3a" opacity="0.4"/><rect x="394.76" y="51.8" width="0.7" height="8.4" fill="#3a3a3a"/><rect x="396.52" y="59.4" width="0.5" height="1" fill="#3a3a3a" opacity="0.4"/><rect x="398.18" y="59.4" width="0.5" height="1" fill="#3a3a3a" opacity="0.4"/><rect x="399.84" y="59.4" width="0.5" height="1" fill="#3a3a3a" opacity="0.4"/><rect x="401.50" y="59.4" width="0.5" height="1" fill="#3a3a3a" opacity="0.4"/><rect x="403.17" y="58.6" width="0.5" height="1.8" fill="#3a3a3a" opacity="0.6"/><rect x="404.83" y="59.4" width="0.5" height="1" fill="#3a3a3a" opacity="0.4"/><rect x="406.49" y="59.4" width="0.5" height="1" fill="#3a3a3a" opacity="0.4"/><rect x="408.15" y="59.4" width="0.5" height="1" fill="#3a3a3a" opacity="0.4"/><rect x="409.81" y="59.4" width="0.5" height="1" fill="#3a3a3a" opacity="0.4"/><rect x="411.37" y="51.8" width="0.7" height="8.4" fill="#3a3a3a"/><rect x="413.13" y="59.4" width="0.5" height="1" fill="#3a3a3a" opacity="0.4"/><rect x="414.79" y="59.4" width="0.5" height="1" fill="#3a3a3a" opacity="0.4"/></svg>
<div class="t sa" style="top:51.48px;font-size:5.2px;line-height:6.24px;color:#4e4e4e;left:30.79px;">200</div>
<div class="t sa" style="top:51.48px;font-size:5.2px;line-height:6.24px;color:#4e4e4e;left:47.40px;">0</div>
<div class="t sa" style="top:51.48px;font-size:5.2px;line-height:6.24px;color:#4e4e4e;left:64.01px;">10</div>
<div class="t sa" style="top:51.48px;font-size:5.2px;line-height:6.24px;color:#4e4e4e;left:80.62px;">20</div>
<div class="t sa" style="top:51.48px;font-size:5.2px;line-height:6.24px;color:#4e4e4e;left:97.23px;">30</div>
<div class="t sa" style="top:51.48px;font-size:5.2px;line-height:6.24px;color:#4e4e4e;left:113.84px;">40</div>
<div class="t sa" style="top:51.48px;font-size:5.2px;line-height:6.24px;color:#4e4e4e;left:130.45px;">50</div>
<div class="t sa" style="top:51.48px;font-size:5.2px;line-height:6.24px;color:#4e4e4e;left:147.06px;">60</div>
<div class="t sa" style="top:51.48px;font-size:5.2px;line-height:6.24px;color:#4e4e4e;left:163.67px;">70</div>
<div class="t sa" style="top:51.48px;font-size:5.2px;line-height:6.24px;color:#4e4e4e;left:180.28px;">80</div>
<div class="t sa" style="top:51.48px;font-size:5.2px;line-height:6.24px;color:#4e4e4e;left:196.89px;">90</div>
<div class="t sa" style="top:51.48px;font-size:5.2px;line-height:6.24px;color:#4e4e4e;left:213.50px;">100</div>
<div class="t sa" style="top:51.48px;font-size:5.2px;line-height:6.24px;color:#4e4e4e;left:230.11px;">110</div>
<div class="t sa" style="top:51.48px;font-size:5.2px;line-height:6.24px;color:#4e4e4e;left:246.72px;">120</div>
<div class="t sa" style="top:51.48px;font-size:5.2px;line-height:6.24px;color:#4e4e4e;left:263.33px;">130</div>
<div class="t sa" style="top:51.48px;font-size:5.2px;line-height:6.24px;color:#4e4e4e;left:279.94px;">140</div>
<div class="t sa" style="top:51.48px;font-size:5.2px;line-height:6.24px;color:#4e4e4e;left:296.55px;">150</div>
<div class="t sa" style="top:51.48px;font-size:5.2px;line-height:6.24px;color:#4e4e4e;left:313.16px;">160</div>
<div class="t sa" style="top:51.48px;font-size:5.2px;line-height:6.24px;color:#4e4e4e;left:329.77px;">170</div>
<div class="t sa" style="top:51.48px;font-size:5.2px;line-height:6.24px;color:#4e4e4e;left:346.38px;">180</div>
<div class="t sa" style="top:51.48px;font-size:5.2px;line-height:6.24px;color:#4e4e4e;left:362.99px;">190</div>
<div class="t sa" style="top:51.48px;font-size:5.2px;line-height:6.24px;color:#4e4e4e;left:379.60px;">200</div>
<div class="t sa" style="top:51.48px;font-size:5.2px;line-height:6.24px;color:#4e4e4e;left:396.21px;">0</div>
<div class="b" style="left:17.6px;top:60.2px;width:8.899999999999999px;height:504.3px;background:#222;"></div>
<svg style="left:0;top:0" width="1024" height="576"><rect x="25.10" y="60.11" width="1.4" height="0.5" fill="#3c3c3c" opacity="0.55"/><rect x="25.10" y="61.77" width="1.4" height="0.5" fill="#3c3c3c" opacity="0.55"/><rect x="25.10" y="63.43" width="1.4" height="0.5" fill="#3c3c3c" opacity="0.55"/><rect x="25.10" y="65.09" width="1.4" height="0.5" fill="#3c3c3c" opacity="0.55"/><rect x="18.40" y="66.70" width="8.10" height="0.6" fill="#3c3c3c" opacity="0.55"/><rect x="18.40" y="66.65" width="4" height="0.7" fill="#424242" opacity="0.8"/><rect x="25.10" y="68.41" width="1.4" height="0.5" fill="#3c3c3c" opacity="0.55"/><rect x="25.10" y="70.07" width="1.4" height="0.5" fill="#3c3c3c" opacity="0.55"/><rect x="25.10" y="71.73" width="1.4" height="0.5" fill="#3c3c3c" opacity="0.55"/><rect x="25.10" y="73.39" width="1.4" height="0.5" fill="#3c3c3c" opacity="0.55"/><rect x="23.70" y="75.06" width="2.8" height="0.5" fill="#3c3c3c" opacity="0.8"/><rect x="25.10" y="76.72" width="1.4" height="0.5" fill="#3c3c3c" opacity="0.55"/><rect x="25.10" y="78.38" width="1.4" height="0.5" fill="#3c3c3c" opacity="0.55"/><rect x="25.10" y="80.04" width="1.4" height="0.5" fill="#3c3c3c" opacity="0.55"/><rect x="25.10" y="81.70" width="1.4" height="0.5" fill="#3c3c3c" opacity="0.55"/><rect x="18.40" y="83.31" width="8.10" height="0.6" fill="#3c3c3c" opacity="0.55"/><rect x="18.40" y="83.26" width="4" height="0.7" fill="#424242" opacity="0.8"/><rect x="25.10" y="85.02" width="1.4" height="0.5" fill="#3c3c3c" opacity="0.55"/><rect x="25.10" y="86.68" width="1.4" height="0.5" fill="#3c3c3c" opacity="0.55"/><rect x="25.10" y="88.34" width="1.4" height="0.5" fill="#3c3c3c" opacity="0.55"/><rect x="25.10" y="90.00" width="1.4" height="0.5" fill="#3c3c3c" opacity="0.55"/><rect x="23.70" y="91.66" width="2.8" height="0.5" fill="#3c3c3c" opacity="0.8"/><rect x="25.10" y="93.33" width="1.4" height="0.5" fill="#3c3c3c" opacity="0.55"/><rect x="25.10" y="94.99" width="1.4" height="0.5" fill="#3c3c3c" opacity="0.55"/><rect x="25.10" y="96.65" width="1.4" height="0.5" fill="#3c3c3c" opacity="0.55"/><rect x="25.10" y="98.31" width="1.4" height="0.5" fill="#3c3c3c" opacity="0.55"/><rect x="18.40" y="99.92" width="8.10" height="0.6" fill="#3c3c3c" opacity="0.55"/><rect x="18.40" y="99.87" width="4" height="0.7" fill="#424242" opacity="0.8"/><rect x="25.10" y="101.63" width="1.4" height="0.5" fill="#3c3c3c" opacity="0.55"/><rect x="25.10" y="103.29" width="1.4" height="0.5" fill="#3c3c3c" opacity="0.55"/><rect x="25.10" y="104.95" width="1.4" height="0.5" fill="#3c3c3c" opacity="0.55"/><rect x="25.10" y="106.61" width="1.4" height="0.5" fill="#3c3c3c" opacity="0.55"/><rect x="23.70" y="108.28" width="2.8" height="0.5" fill="#3c3c3c" opacity="0.8"/><rect x="25.10" y="109.94" width="1.4" height="0.5" fill="#3c3c3c" opacity="0.55"/><rect x="25.10" y="111.60" width="1.4" height="0.5" fill="#3c3c3c" opacity="0.55"/><rect x="25.10" y="113.26" width="1.4" height="0.5" fill="#3c3c3c" opacity="0.55"/><rect x="25.10" y="114.92" width="1.4" height="0.5" fill="#3c3c3c" opacity="0.55"/><rect x="18.40" y="116.53" width="8.10" height="0.6" fill="#3c3c3c" opacity="0.55"/><rect x="18.40" y="116.48" width="4" height="0.7" fill="#424242" opacity="0.8"/><rect x="25.10" y="118.24" width="1.4" height="0.5" fill="#3c3c3c" opacity="0.55"/><rect x="25.10" y="119.90" width="1.4" height="0.5" fill="#3c3c3c" opacity="0.55"/><rect x="25.10" y="121.56" width="1.4" height="0.5" fill="#3c3c3c" opacity="0.55"/><rect x="25.10" y="123.22" width="1.4" height="0.5" fill="#3c3c3c" opacity="0.55"/><rect x="23.70" y="124.88" width="2.8" height="0.5" fill="#3c3c3c" opacity="0.8"/><rect x="25.10" y="126.55" width="1.4" height="0.5" fill="#3c3c3c" opacity="0.55"/><rect x="25.10" y="128.21" width="1.4" height="0.5" fill="#3c3c3c" opacity="0.55"/><rect x="25.10" y="129.87" width="1.4" height="0.5" fill="#3c3c3c" opacity="0.55"/><rect x="25.10" y="131.53" width="1.4" height="0.5" fill="#3c3c3c" opacity="0.55"/><rect x="18.40" y="133.14" width="8.10" height="0.6" fill="#3c3c3c" opacity="0.55"/><rect x="18.40" y="133.09" width="4" height="0.7" fill="#424242" opacity="0.8"/><rect x="25.10" y="134.85" width="1.4" height="0.5" fill="#3c3c3c" opacity="0.55"/><rect x="25.10" y="136.51" width="1.4" height="0.5" fill="#3c3c3c" opacity="0.55"/><rect x="25.10" y="138.17" width="1.4" height="0.5" fill="#3c3c3c" opacity="0.55"/><rect x="25.10" y="139.83" width="1.4" height="0.5" fill="#3c3c3c" opacity="0.55"/><rect x="23.70" y="141.50" width="2.8" height="0.5" fill="#3c3c3c" opacity="0.8"/><rect x="25.10" y="143.16" width="1.4" height="0.5" fill="#3c3c3c" opacity="0.55"/><rect x="25.10" y="144.82" width="1.4" height="0.5" fill="#3c3c3c" opacity="0.55"/><rect x="25.10" y="146.48" width="1.4" height="0.5" fill="#3c3c3c" opacity="0.55"/><rect x="25.10" y="148.14" width="1.4" height="0.5" fill="#3c3c3c" opacity="0.55"/><rect x="18.40" y="149.75" width="8.10" height="0.6" fill="#3c3c3c" opacity="0.55"/><rect x="18.40" y="149.70" width="4" height="0.7" fill="#424242" opacity="0.8"/><rect x="25.10" y="151.46" width="1.4" height="0.5" fill="#3c3c3c" opacity="0.55"/><rect x="25.10" y="153.12" width="1.4" height="0.5" fill="#3c3c3c" opacity="0.55"/><rect x="25.10" y="154.78" width="1.4" height="0.5" fill="#3c3c3c" opacity="0.55"/><rect x="25.10" y="156.44" width="1.4" height="0.5" fill="#3c3c3c" opacity="0.55"/><rect x="23.70" y="158.11" width="2.8" height="0.5" fill="#3c3c3c" opacity="0.8"/><rect x="25.10" y="159.77" width="1.4" height="0.5" fill="#3c3c3c" opacity="0.55"/><rect x="25.10" y="161.43" width="1.4" height="0.5" fill="#3c3c3c" opacity="0.55"/><rect x="25.10" y="163.09" width="1.4" height="0.5" fill="#3c3c3c" opacity="0.55"/><rect x="25.10" y="164.75" width="1.4" height="0.5" fill="#3c3c3c" opacity="0.55"/><rect x="18.40" y="166.36" width="8.10" height="0.6" fill="#3c3c3c" opacity="0.55"/><rect x="18.40" y="166.31" width="4" height="0.7" fill="#424242" opacity="0.8"/><rect x="25.10" y="168.07" width="1.4" height="0.5" fill="#3c3c3c" opacity="0.55"/><rect x="25.10" y="169.73" width="1.4" height="0.5" fill="#3c3c3c" opacity="0.55"/><rect x="25.10" y="171.39" width="1.4" height="0.5" fill="#3c3c3c" opacity="0.55"/><rect x="25.10" y="173.05" width="1.4" height="0.5" fill="#3c3c3c" opacity="0.55"/><rect x="23.70" y="174.72" width="2.8" height="0.5" fill="#3c3c3c" opacity="0.8"/><rect x="25.10" y="176.38" width="1.4" height="0.5" fill="#3c3c3c" opacity="0.55"/><rect x="25.10" y="178.04" width="1.4" height="0.5" fill="#3c3c3c" opacity="0.55"/><rect x="25.10" y="179.70" width="1.4" height="0.5" fill="#3c3c3c" opacity="0.55"/><rect x="25.10" y="181.36" width="1.4" height="0.5" fill="#3c3c3c" opacity="0.55"/><rect x="18.40" y="182.97" width="8.10" height="0.6" fill="#3c3c3c" opacity="0.55"/><rect x="18.40" y="182.92" width="4" height="0.7" fill="#424242" opacity="0.8"/><rect x="25.10" y="184.68" width="1.4" height="0.5" fill="#3c3c3c" opacity="0.55"/><rect x="25.10" y="186.34" width="1.4" height="0.5" fill="#3c3c3c" opacity="0.55"/><rect x="25.10" y="188.00" width="1.4" height="0.5" fill="#3c3c3c" opacity="0.55"/><rect x="25.10" y="189.66" width="1.4" height="0.5" fill="#3c3c3c" opacity="0.55"/><rect x="23.70" y="191.32" width="2.8" height="0.5" fill="#3c3c3c" opacity="0.8"/><rect x="25.10" y="192.99" width="1.4" height="0.5" fill="#3c3c3c" opacity="0.55"/><rect x="25.10" y="194.65" width="1.4" height="0.5" fill="#3c3c3c" opacity="0.55"/><rect x="25.10" y="196.31" width="1.4" height="0.5" fill="#3c3c3c" opacity="0.55"/><rect x="25.10" y="197.97" width="1.4" height="0.5" fill="#3c3c3c" opacity="0.55"/><rect x="18.40" y="199.58" width="8.10" height="0.6" fill="#3c3c3c" opacity="0.55"/><rect x="18.40" y="199.53" width="4" height="0.7" fill="#424242" opacity="0.8"/><rect x="25.10" y="201.29" width="1.4" height="0.5" fill="#3c3c3c" opacity="0.55"/><rect x="25.10" y="202.95" width="1.4" height="0.5" fill="#3c3c3c" opacity="0.55"/><rect x="25.10" y="204.61" width="1.4" height="0.5" fill="#3c3c3c" opacity="0.55"/><rect x="25.10" y="206.27" width="1.4" height="0.5" fill="#3c3c3c" opacity="0.55"/><rect x="23.70" y="207.94" width="2.8" height="0.5" fill="#3c3c3c" opacity="0.8"/><rect x="25.10" y="209.60" width="1.4" height="0.5" fill="#3c3c3c" opacity="0.55"/><rect x="25.10" y="211.26" width="1.4" height="0.5" fill="#3c3c3c" opacity="0.55"/><rect x="25.10" y="212.92" width="1.4" height="0.5" fill="#3c3c3c" opacity="0.55"/><rect x="25.10" y="214.58" width="1.4" height="0.5" fill="#3c3c3c" opacity="0.55"/><rect x="18.40" y="216.19" width="8.10" height="0.6" fill="#3c3c3c" opacity="0.55"/><rect x="18.40" y="216.14" width="4" height="0.7" fill="#424242" opacity="0.8"/><rect x="25.10" y="217.90" width="1.4" height="0.5" fill="#3c3c3c" opacity="0.55"/><rect x="25.10" y="219.56" width="1.4" height="0.5" fill="#3c3c3c" opacity="0.55"/><rect x="25.10" y="221.22" width="1.4" height="0.5" fill="#3c3c3c" opacity="0.55"/><rect x="25.10" y="222.88" width="1.4" height="0.5" fill="#3c3c3c" opacity="0.55"/><rect x="23.70" y="224.55" width="2.8" height="0.5" fill="#3c3c3c" opacity="0.8"/><rect x="25.10" y="226.21" width="1.4" height="0.5" fill="#3c3c3c" opacity="0.55"/><rect x="25.10" y="227.87" width="1.4" height="0.5" fill="#3c3c3c" opacity="0.55"/><rect x="25.10" y="229.53" width="1.4" height="0.5" fill="#3c3c3c" opacity="0.55"/><rect x="25.10" y="231.19" width="1.4" height="0.5" fill="#3c3c3c" opacity="0.55"/><rect x="18.40" y="232.80" width="8.10" height="0.6" fill="#3c3c3c" opacity="0.55"/><rect x="18.40" y="232.75" width="4" height="0.7" fill="#424242" opacity="0.8"/><rect x="25.10" y="234.51" width="1.4" height="0.5" fill="#3c3c3c" opacity="0.55"/><rect x="25.10" y="236.17" width="1.4" height="0.5" fill="#3c3c3c" opacity="0.55"/><rect x="25.10" y="237.83" width="1.4" height="0.5" fill="#3c3c3c" opacity="0.55"/><rect x="25.10" y="239.49" width="1.4" height="0.5" fill="#3c3c3c" opacity="0.55"/><rect x="23.70" y="241.16" width="2.8" height="0.5" fill="#3c3c3c" opacity="0.8"/><rect x="25.10" y="242.82" width="1.4" height="0.5" fill="#3c3c3c" opacity="0.55"/><rect x="25.10" y="244.48" width="1.4" height="0.5" fill="#3c3c3c" opacity="0.55"/><rect x="25.10" y="246.14" width="1.4" height="0.5" fill="#3c3c3c" opacity="0.55"/><rect x="25.10" y="247.80" width="1.4" height="0.5" fill="#3c3c3c" opacity="0.55"/><rect x="18.40" y="249.41" width="8.10" height="0.6" fill="#3c3c3c" opacity="0.55"/><rect x="18.40" y="249.36" width="4" height="0.7" fill="#424242" opacity="0.8"/><rect x="25.10" y="251.12" width="1.4" height="0.5" fill="#3c3c3c" opacity="0.55"/><rect x="25.10" y="252.78" width="1.4" height="0.5" fill="#3c3c3c" opacity="0.55"/><rect x="25.10" y="254.44" width="1.4" height="0.5" fill="#3c3c3c" opacity="0.55"/><rect x="25.10" y="256.10" width="1.4" height="0.5" fill="#3c3c3c" opacity="0.55"/><rect x="23.70" y="257.76" width="2.8" height="0.5" fill="#3c3c3c" opacity="0.8"/><rect x="25.10" y="259.43" width="1.4" height="0.5" fill="#3c3c3c" opacity="0.55"/><rect x="25.10" y="261.09" width="1.4" height="0.5" fill="#3c3c3c" opacity="0.55"/><rect x="25.10" y="262.75" width="1.4" height="0.5" fill="#3c3c3c" opacity="0.55"/><rect x="25.10" y="264.41" width="1.4" height="0.5" fill="#3c3c3c" opacity="0.55"/><rect x="18.40" y="266.02" width="8.10" height="0.6" fill="#3c3c3c" opacity="0.55"/><rect x="18.40" y="265.97" width="4" height="0.7" fill="#424242" opacity="0.8"/><rect x="25.10" y="267.73" width="1.4" height="0.5" fill="#3c3c3c" opacity="0.55"/><rect x="25.10" y="269.39" width="1.4" height="0.5" fill="#3c3c3c" opacity="0.55"/><rect x="25.10" y="271.05" width="1.4" height="0.5" fill="#3c3c3c" opacity="0.55"/><rect x="25.10" y="272.71" width="1.4" height="0.5" fill="#3c3c3c" opacity="0.55"/><rect x="23.70" y="274.38" width="2.8" height="0.5" fill="#3c3c3c" opacity="0.8"/><rect x="25.10" y="276.04" width="1.4" height="0.5" fill="#3c3c3c" opacity="0.55"/><rect x="25.10" y="277.70" width="1.4" height="0.5" fill="#3c3c3c" opacity="0.55"/><rect x="25.10" y="279.36" width="1.4" height="0.5" fill="#3c3c3c" opacity="0.55"/><rect x="25.10" y="281.02" width="1.4" height="0.5" fill="#3c3c3c" opacity="0.55"/><rect x="18.40" y="282.63" width="8.10" height="0.6" fill="#3c3c3c" opacity="0.55"/><rect x="18.40" y="282.58" width="4" height="0.7" fill="#424242" opacity="0.8"/><rect x="25.10" y="284.34" width="1.4" height="0.5" fill="#3c3c3c" opacity="0.55"/><rect x="25.10" y="286.00" width="1.4" height="0.5" fill="#3c3c3c" opacity="0.55"/><rect x="25.10" y="287.66" width="1.4" height="0.5" fill="#3c3c3c" opacity="0.55"/><rect x="25.10" y="289.32" width="1.4" height="0.5" fill="#3c3c3c" opacity="0.55"/><rect x="23.70" y="290.99" width="2.8" height="0.5" fill="#3c3c3c" opacity="0.8"/><rect x="25.10" y="292.65" width="1.4" height="0.5" fill="#3c3c3c" opacity="0.55"/><rect x="25.10" y="294.31" width="1.4" height="0.5" fill="#3c3c3c" opacity="0.55"/><rect x="25.10" y="295.97" width="1.4" height="0.5" fill="#3c3c3c" opacity="0.55"/><rect x="25.10" y="297.63" width="1.4" height="0.5" fill="#3c3c3c" opacity="0.55"/><rect x="18.40" y="299.24" width="8.10" height="0.6" fill="#3c3c3c" opacity="0.55"/><rect x="18.40" y="299.19" width="4" height="0.7" fill="#424242" opacity="0.8"/><rect x="25.10" y="300.95" width="1.4" height="0.5" fill="#3c3c3c" opacity="0.55"/><rect x="25.10" y="302.61" width="1.4" height="0.5" fill="#3c3c3c" opacity="0.55"/><rect x="25.10" y="304.27" width="1.4" height="0.5" fill="#3c3c3c" opacity="0.55"/><rect x="25.10" y="305.93" width="1.4" height="0.5" fill="#3c3c3c" opacity="0.55"/><rect x="23.70" y="307.60" width="2.8" height="0.5" fill="#3c3c3c" opacity="0.8"/><rect x="25.10" y="309.26" width="1.4" height="0.5" fill="#3c3c3c" opacity="0.55"/><rect x="25.10" y="310.92" width="1.4" height="0.5" fill="#3c3c3c" opacity="0.55"/><rect x="25.10" y="312.58" width="1.4" height="0.5" fill="#3c3c3c" opacity="0.55"/><rect x="25.10" y="314.24" width="1.4" height="0.5" fill="#3c3c3c" opacity="0.55"/><rect x="18.40" y="315.85" width="8.10" height="0.6" fill="#3c3c3c" opacity="0.55"/><rect x="18.40" y="315.80" width="4" height="0.7" fill="#424242" opacity="0.8"/><rect x="25.10" y="317.56" width="1.4" height="0.5" fill="#3c3c3c" opacity="0.55"/><rect x="25.10" y="319.22" width="1.4" height="0.5" fill="#3c3c3c" opacity="0.55"/><rect x="25.10" y="320.88" width="1.4" height="0.5" fill="#3c3c3c" opacity="0.55"/><rect x="25.10" y="322.54" width="1.4" height="0.5" fill="#3c3c3c" opacity="0.55"/><rect x="23.70" y="324.20" width="2.8" height="0.5" fill="#3c3c3c" opacity="0.8"/><rect x="25.10" y="325.87" width="1.4" height="0.5" fill="#3c3c3c" opacity="0.55"/><rect x="25.10" y="327.53" width="1.4" height="0.5" fill="#3c3c3c" opacity="0.55"/><rect x="25.10" y="329.19" width="1.4" height="0.5" fill="#3c3c3c" opacity="0.55"/><rect x="25.10" y="330.85" width="1.4" height="0.5" fill="#3c3c3c" opacity="0.55"/><rect x="18.40" y="332.46" width="8.10" height="0.6" fill="#3c3c3c" opacity="0.55"/><rect x="18.40" y="332.41" width="4" height="0.7" fill="#424242" opacity="0.8"/><rect x="25.10" y="334.17" width="1.4" height="0.5" fill="#3c3c3c" opacity="0.55"/><rect x="25.10" y="335.83" width="1.4" height="0.5" fill="#3c3c3c" opacity="0.55"/><rect x="25.10" y="337.49" width="1.4" height="0.5" fill="#3c3c3c" opacity="0.55"/><rect x="25.10" y="339.15" width="1.4" height="0.5" fill="#3c3c3c" opacity="0.55"/><rect x="23.70" y="340.81" width="2.8" height="0.5" fill="#3c3c3c" opacity="0.8"/><rect x="25.10" y="342.48" width="1.4" height="0.5" fill="#3c3c3c" opacity="0.55"/><rect x="25.10" y="344.14" width="1.4" height="0.5" fill="#3c3c3c" opacity="0.55"/><rect x="25.10" y="345.80" width="1.4" height="0.5" fill="#3c3c3c" opacity="0.55"/><rect x="25.10" y="347.46" width="1.4" height="0.5" fill="#3c3c3c" opacity="0.55"/><rect x="18.40" y="349.07" width="8.10" height="0.6" fill="#3c3c3c" opacity="0.55"/><rect x="18.40" y="349.02" width="4" height="0.7" fill="#424242" opacity="0.8"/><rect x="25.10" y="350.78" width="1.4" height="0.5" fill="#3c3c3c" opacity="0.55"/><rect x="25.10" y="352.44" width="1.4" height="0.5" fill="#3c3c3c" opacity="0.55"/><rect x="25.10" y="354.10" width="1.4" height="0.5" fill="#3c3c3c" opacity="0.55"/><rect x="25.10" y="355.76" width="1.4" height="0.5" fill="#3c3c3c" opacity="0.55"/><rect x="23.70" y="357.43" width="2.8" height="0.5" fill="#3c3c3c" opacity="0.8"/><rect x="25.10" y="359.09" width="1.4" height="0.5" fill="#3c3c3c" opacity="0.55"/><rect x="25.10" y="360.75" width="1.4" height="0.5" fill="#3c3c3c" opacity="0.55"/><rect x="25.10" y="362.41" width="1.4" height="0.5" fill="#3c3c3c" opacity="0.55"/><rect x="25.10" y="364.07" width="1.4" height="0.5" fill="#3c3c3c" opacity="0.55"/><rect x="18.40" y="365.68" width="8.10" height="0.6" fill="#3c3c3c" opacity="0.55"/><rect x="18.40" y="365.63" width="4" height="0.7" fill="#424242" opacity="0.8"/><rect x="25.10" y="367.39" width="1.4" height="0.5" fill="#3c3c3c" opacity="0.55"/><rect x="25.10" y="369.05" width="1.4" height="0.5" fill="#3c3c3c" opacity="0.55"/><rect x="25.10" y="370.71" width="1.4" height="0.5" fill="#3c3c3c" opacity="0.55"/><rect x="25.10" y="372.37" width="1.4" height="0.5" fill="#3c3c3c" opacity="0.55"/><rect x="23.70" y="374.04" width="2.8" height="0.5" fill="#3c3c3c" opacity="0.8"/><rect x="25.10" y="375.70" width="1.4" height="0.5" fill="#3c3c3c" opacity="0.55"/><rect x="25.10" y="377.36" width="1.4" height="0.5" fill="#3c3c3c" opacity="0.55"/><rect x="25.10" y="379.02" width="1.4" height="0.5" fill="#3c3c3c" opacity="0.55"/><rect x="25.10" y="380.68" width="1.4" height="0.5" fill="#3c3c3c" opacity="0.55"/><rect x="18.40" y="382.29" width="8.10" height="0.6" fill="#3c3c3c" opacity="0.55"/><rect x="18.40" y="382.24" width="4" height="0.7" fill="#424242" opacity="0.8"/><rect x="25.10" y="384.00" width="1.4" height="0.5" fill="#3c3c3c" opacity="0.55"/><rect x="25.10" y="385.66" width="1.4" height="0.5" fill="#3c3c3c" opacity="0.55"/><rect x="25.10" y="387.32" width="1.4" height="0.5" fill="#3c3c3c" opacity="0.55"/><rect x="25.10" y="388.98" width="1.4" height="0.5" fill="#3c3c3c" opacity="0.55"/><rect x="23.70" y="390.64" width="2.8" height="0.5" fill="#3c3c3c" opacity="0.8"/><rect x="25.10" y="392.31" width="1.4" height="0.5" fill="#3c3c3c" opacity="0.55"/><rect x="25.10" y="393.97" width="1.4" height="0.5" fill="#3c3c3c" opacity="0.55"/><rect x="25.10" y="395.63" width="1.4" height="0.5" fill="#3c3c3c" opacity="0.55"/><rect x="25.10" y="397.29" width="1.4" height="0.5" fill="#3c3c3c" opacity="0.55"/><rect x="18.40" y="398.90" width="8.10" height="0.6" fill="#3c3c3c" opacity="0.55"/><rect x="18.40" y="398.85" width="4" height="0.7" fill="#424242" opacity="0.8"/><rect x="25.10" y="400.61" width="1.4" height="0.5" fill="#3c3c3c" opacity="0.55"/><rect x="25.10" y="402.27" width="1.4" height="0.5" fill="#3c3c3c" opacity="0.55"/><rect x="25.10" y="403.93" width="1.4" height="0.5" fill="#3c3c3c" opacity="0.55"/><rect x="25.10" y="405.59" width="1.4" height="0.5" fill="#3c3c3c" opacity="0.55"/><rect x="23.70" y="407.25" width="2.8" height="0.5" fill="#3c3c3c" opacity="0.8"/><rect x="25.10" y="408.92" width="1.4" height="0.5" fill="#3c3c3c" opacity="0.55"/><rect x="25.10" y="410.58" width="1.4" height="0.5" fill="#3c3c3c" opacity="0.55"/><rect x="25.10" y="412.24" width="1.4" height="0.5" fill="#3c3c3c" opacity="0.55"/><rect x="25.10" y="413.90" width="1.4" height="0.5" fill="#3c3c3c" opacity="0.55"/><rect x="18.40" y="415.51" width="8.10" height="0.6" fill="#3c3c3c" opacity="0.55"/><rect x="18.40" y="415.46" width="4" height="0.7" fill="#424242" opacity="0.8"/><rect x="25.10" y="417.22" width="1.4" height="0.5" fill="#3c3c3c" opacity="0.55"/><rect x="25.10" y="418.88" width="1.4" height="0.5" fill="#3c3c3c" opacity="0.55"/><rect x="25.10" y="420.54" width="1.4" height="0.5" fill="#3c3c3c" opacity="0.55"/><rect x="25.10" y="422.20" width="1.4" height="0.5" fill="#3c3c3c" opacity="0.55"/><rect x="23.70" y="423.87" width="2.8" height="0.5" fill="#3c3c3c" opacity="0.8"/><rect x="25.10" y="425.53" width="1.4" height="0.5" fill="#3c3c3c" opacity="0.55"/><rect x="25.10" y="427.19" width="1.4" height="0.5" fill="#3c3c3c" opacity="0.55"/><rect x="25.10" y="428.85" width="1.4" height="0.5" fill="#3c3c3c" opacity="0.55"/><rect x="25.10" y="430.51" width="1.4" height="0.5" fill="#3c3c3c" opacity="0.55"/><rect x="18.40" y="432.12" width="8.10" height="0.6" fill="#3c3c3c" opacity="0.55"/><rect x="18.40" y="432.07" width="4" height="0.7" fill="#424242" opacity="0.8"/><rect x="25.10" y="433.83" width="1.4" height="0.5" fill="#3c3c3c" opacity="0.55"/><rect x="25.10" y="435.49" width="1.4" height="0.5" fill="#3c3c3c" opacity="0.55"/><rect x="25.10" y="437.15" width="1.4" height="0.5" fill="#3c3c3c" opacity="0.55"/><rect x="25.10" y="438.81" width="1.4" height="0.5" fill="#3c3c3c" opacity="0.55"/><rect x="23.70" y="440.48" width="2.8" height="0.5" fill="#3c3c3c" opacity="0.8"/><rect x="25.10" y="442.14" width="1.4" height="0.5" fill="#3c3c3c" opacity="0.55"/><rect x="25.10" y="443.80" width="1.4" height="0.5" fill="#3c3c3c" opacity="0.55"/><rect x="25.10" y="445.46" width="1.4" height="0.5" fill="#3c3c3c" opacity="0.55"/><rect x="25.10" y="447.12" width="1.4" height="0.5" fill="#3c3c3c" opacity="0.55"/><rect x="18.40" y="448.73" width="8.10" height="0.6" fill="#3c3c3c" opacity="0.55"/><rect x="18.40" y="448.68" width="4" height="0.7" fill="#424242" opacity="0.8"/><rect x="25.10" y="450.44" width="1.4" height="0.5" fill="#3c3c3c" opacity="0.55"/><rect x="25.10" y="452.10" width="1.4" height="0.5" fill="#3c3c3c" opacity="0.55"/><rect x="25.10" y="453.76" width="1.4" height="0.5" fill="#3c3c3c" opacity="0.55"/><rect x="25.10" y="455.42" width="1.4" height="0.5" fill="#3c3c3c" opacity="0.55"/><rect x="23.70" y="457.08" width="2.8" height="0.5" fill="#3c3c3c" opacity="0.8"/><rect x="25.10" y="458.75" width="1.4" height="0.5" fill="#3c3c3c" opacity="0.55"/><rect x="25.10" y="460.41" width="1.4" height="0.5" fill="#3c3c3c" opacity="0.55"/><rect x="25.10" y="462.07" width="1.4" height="0.5" fill="#3c3c3c" opacity="0.55"/><rect x="25.10" y="463.73" width="1.4" height="0.5" fill="#3c3c3c" opacity="0.55"/><rect x="18.40" y="465.34" width="8.10" height="0.6" fill="#3c3c3c" opacity="0.55"/><rect x="18.40" y="465.29" width="4" height="0.7" fill="#424242" opacity="0.8"/><rect x="25.10" y="467.05" width="1.4" height="0.5" fill="#3c3c3c" opacity="0.55"/><rect x="25.10" y="468.71" width="1.4" height="0.5" fill="#3c3c3c" opacity="0.55"/><rect x="25.10" y="470.37" width="1.4" height="0.5" fill="#3c3c3c" opacity="0.55"/><rect x="25.10" y="472.03" width="1.4" height="0.5" fill="#3c3c3c" opacity="0.55"/><rect x="23.70" y="473.69" width="2.8" height="0.5" fill="#3c3c3c" opacity="0.8"/><rect x="25.10" y="475.36" width="1.4" height="0.5" fill="#3c3c3c" opacity="0.55"/><rect x="25.10" y="477.02" width="1.4" height="0.5" fill="#3c3c3c" opacity="0.55"/><rect x="25.10" y="478.68" width="1.4" height="0.5" fill="#3c3c3c" opacity="0.55"/><rect x="25.10" y="480.34" width="1.4" height="0.5" fill="#3c3c3c" opacity="0.55"/><rect x="18.40" y="481.95" width="8.10" height="0.6" fill="#3c3c3c" opacity="0.55"/><rect x="18.40" y="481.90" width="4" height="0.7" fill="#424242" opacity="0.8"/><rect x="25.10" y="483.66" width="1.4" height="0.5" fill="#3c3c3c" opacity="0.55"/><rect x="25.10" y="485.32" width="1.4" height="0.5" fill="#3c3c3c" opacity="0.55"/><rect x="25.10" y="486.98" width="1.4" height="0.5" fill="#3c3c3c" opacity="0.55"/><rect x="25.10" y="488.64" width="1.4" height="0.5" fill="#3c3c3c" opacity="0.55"/><rect x="23.70" y="490.31" width="2.8" height="0.5" fill="#3c3c3c" opacity="0.8"/><rect x="25.10" y="491.97" width="1.4" height="0.5" fill="#3c3c3c" opacity="0.55"/><rect x="25.10" y="493.63" width="1.4" height="0.5" fill="#3c3c3c" opacity="0.55"/><rect x="25.10" y="495.29" width="1.4" height="0.5" fill="#3c3c3c" opacity="0.55"/><rect x="25.10" y="496.95" width="1.4" height="0.5" fill="#3c3c3c" opacity="0.55"/><rect x="18.40" y="498.56" width="8.10" height="0.6" fill="#3c3c3c" opacity="0.55"/><rect x="18.40" y="498.51" width="4" height="0.7" fill="#424242" opacity="0.8"/><rect x="25.10" y="500.27" width="1.4" height="0.5" fill="#3c3c3c" opacity="0.55"/><rect x="25.10" y="501.93" width="1.4" height="0.5" fill="#3c3c3c" opacity="0.55"/><rect x="25.10" y="503.59" width="1.4" height="0.5" fill="#3c3c3c" opacity="0.55"/><rect x="25.10" y="505.25" width="1.4" height="0.5" fill="#3c3c3c" opacity="0.55"/><rect x="23.70" y="506.92" width="2.8" height="0.5" fill="#3c3c3c" opacity="0.8"/><rect x="25.10" y="508.58" width="1.4" height="0.5" fill="#3c3c3c" opacity="0.55"/><rect x="25.10" y="510.24" width="1.4" height="0.5" fill="#3c3c3c" opacity="0.55"/><rect x="25.10" y="511.90" width="1.4" height="0.5" fill="#3c3c3c" opacity="0.55"/><rect x="25.10" y="513.56" width="1.4" height="0.5" fill="#3c3c3c" opacity="0.55"/><rect x="18.40" y="515.17" width="8.10" height="0.6" fill="#3c3c3c" opacity="0.55"/><rect x="18.40" y="515.12" width="4" height="0.7" fill="#424242" opacity="0.8"/><rect x="25.10" y="516.88" width="1.4" height="0.5" fill="#3c3c3c" opacity="0.55"/><rect x="25.10" y="518.54" width="1.4" height="0.5" fill="#3c3c3c" opacity="0.55"/><rect x="25.10" y="520.20" width="1.4" height="0.5" fill="#3c3c3c" opacity="0.55"/><rect x="25.10" y="521.86" width="1.4" height="0.5" fill="#3c3c3c" opacity="0.55"/><rect x="23.70" y="523.53" width="2.8" height="0.5" fill="#3c3c3c" opacity="0.8"/><rect x="25.10" y="525.19" width="1.4" height="0.5" fill="#3c3c3c" opacity="0.55"/><rect x="25.10" y="526.85" width="1.4" height="0.5" fill="#3c3c3c" opacity="0.55"/><rect x="25.10" y="528.51" width="1.4" height="0.5" fill="#3c3c3c" opacity="0.55"/><rect x="25.10" y="530.17" width="1.4" height="0.5" fill="#3c3c3c" opacity="0.55"/><rect x="18.40" y="531.78" width="8.10" height="0.6" fill="#3c3c3c" opacity="0.55"/><rect x="18.40" y="531.73" width="4" height="0.7" fill="#424242" opacity="0.8"/><rect x="25.10" y="533.49" width="1.4" height="0.5" fill="#3c3c3c" opacity="0.55"/><rect x="25.10" y="535.15" width="1.4" height="0.5" fill="#3c3c3c" opacity="0.55"/><rect x="25.10" y="536.81" width="1.4" height="0.5" fill="#3c3c3c" opacity="0.55"/><rect x="25.10" y="538.47" width="1.4" height="0.5" fill="#3c3c3c" opacity="0.55"/><rect x="23.70" y="540.13" width="2.8" height="0.5" fill="#3c3c3c" opacity="0.8"/><rect x="25.10" y="541.80" width="1.4" height="0.5" fill="#3c3c3c" opacity="0.55"/><rect x="25.10" y="543.46" width="1.4" height="0.5" fill="#3c3c3c" opacity="0.55"/><rect x="25.10" y="545.12" width="1.4" height="0.5" fill="#3c3c3c" opacity="0.55"/><rect x="25.10" y="546.78" width="1.4" height="0.5" fill="#3c3c3c" opacity="0.55"/><rect x="18.40" y="548.39" width="8.10" height="0.6" fill="#3c3c3c" opacity="0.55"/><rect x="18.40" y="548.34" width="4" height="0.7" fill="#424242" opacity="0.8"/><rect x="25.10" y="550.10" width="1.4" height="0.5" fill="#3c3c3c" opacity="0.55"/><rect x="25.10" y="551.76" width="1.4" height="0.5" fill="#3c3c3c" opacity="0.55"/><rect x="25.10" y="553.42" width="1.4" height="0.5" fill="#3c3c3c" opacity="0.55"/><rect x="25.10" y="555.08" width="1.4" height="0.5" fill="#3c3c3c" opacity="0.55"/><rect x="23.70" y="556.75" width="2.8" height="0.5" fill="#3c3c3c" opacity="0.8"/><rect x="25.10" y="558.41" width="1.4" height="0.5" fill="#3c3c3c" opacity="0.55"/><rect x="25.10" y="560.07" width="1.4" height="0.5" fill="#3c3c3c" opacity="0.55"/><rect x="25.10" y="561.73" width="1.4" height="0.5" fill="#3c3c3c" opacity="0.55"/><rect x="25.10" y="563.39" width="1.4" height="0.5" fill="#3c3c3c" opacity="0.55"/></svg>
<div class="t sa" style="left:18.50px;top:67.50px;font-size:4.8px;line-height:4.8px;color:#424242;">0</div>
<div class="t sa" style="left:18.50px;top:84.11px;font-size:4.8px;line-height:4.8px;color:#424242;">1</div>
<div class="t sa" style="left:18.50px;top:88.01px;font-size:4.8px;line-height:4.8px;color:#424242;">0</div>
<div class="t sa" style="left:18.50px;top:100.72px;font-size:4.8px;line-height:4.8px;color:#424242;">2</div>
<div class="t sa" style="left:18.50px;top:104.62px;font-size:4.8px;line-height:4.8px;color:#424242;">0</div>
<div class="t sa" style="left:18.50px;top:117.33px;font-size:4.8px;line-height:4.8px;color:#424242;">3</div>
<div class="t sa" style="left:18.50px;top:121.23px;font-size:4.8px;line-height:4.8px;color:#424242;">0</div>
<div class="t sa" style="left:18.50px;top:133.94px;font-size:4.8px;line-height:4.8px;color:#424242;">4</div>
<div class="t sa" style="left:18.50px;top:137.84px;font-size:4.8px;line-height:4.8px;color:#424242;">0</div>
<div class="t sa" style="left:18.50px;top:150.55px;font-size:4.8px;line-height:4.8px;color:#424242;">5</div>
<div class="t sa" style="left:18.50px;top:154.45px;font-size:4.8px;line-height:4.8px;color:#424242;">0</div>
<div class="t sa" style="left:18.50px;top:167.16px;font-size:4.8px;line-height:4.8px;color:#424242;">6</div>
<div class="t sa" style="left:18.50px;top:171.06px;font-size:4.8px;line-height:4.8px;color:#424242;">0</div>
<div class="t sa" style="left:18.50px;top:183.77px;font-size:4.8px;line-height:4.8px;color:#424242;">7</div>
<div class="t sa" style="left:18.50px;top:187.67px;font-size:4.8px;line-height:4.8px;color:#424242;">0</div>
<div class="t sa" style="left:18.50px;top:200.38px;font-size:4.8px;line-height:4.8px;color:#424242;">8</div>
<div class="t sa" style="left:18.50px;top:204.28px;font-size:4.8px;line-height:4.8px;color:#424242;">0</div>
<div class="t sa" style="left:18.50px;top:216.99px;font-size:4.8px;line-height:4.8px;color:#424242;">9</div>
<div class="t sa" style="left:18.50px;top:220.89px;font-size:4.8px;line-height:4.8px;color:#424242;">0</div>
<div class="t sa" style="left:18.50px;top:233.60px;font-size:4.8px;line-height:4.8px;color:#424242;">1</div>
<div class="t sa" style="left:18.50px;top:237.50px;font-size:4.8px;line-height:4.8px;color:#424242;">0</div>
<div class="t sa" style="left:18.50px;top:241.40px;font-size:4.8px;line-height:4.8px;color:#424242;">0</div>
<div class="t sa" style="left:18.50px;top:250.21px;font-size:4.8px;line-height:4.8px;color:#424242;">1</div>
<div class="t sa" style="left:18.50px;top:254.11px;font-size:4.8px;line-height:4.8px;color:#424242;">1</div>
<div class="t sa" style="left:18.50px;top:258.01px;font-size:4.8px;line-height:4.8px;color:#424242;">0</div>
<div class="t sa" style="left:18.50px;top:266.82px;font-size:4.8px;line-height:4.8px;color:#424242;">1</div>
<div class="t sa" style="left:18.50px;top:270.72px;font-size:4.8px;line-height:4.8px;color:#424242;">2</div>
<div class="t sa" style="left:18.50px;top:274.62px;font-size:4.8px;line-height:4.8px;color:#424242;">0</div>
<div class="t sa" style="left:18.50px;top:283.43px;font-size:4.8px;line-height:4.8px;color:#424242;">1</div>
<div class="t sa" style="left:18.50px;top:287.33px;font-size:4.8px;line-height:4.8px;color:#424242;">3</div>
<div class="t sa" style="left:18.50px;top:291.23px;font-size:4.8px;line-height:4.8px;color:#424242;">0</div>
<div class="t sa" style="left:18.50px;top:300.04px;font-size:4.8px;line-height:4.8px;color:#424242;">1</div>
<div class="t sa" style="left:18.50px;top:303.94px;font-size:4.8px;line-height:4.8px;color:#424242;">4</div>
<div class="t sa" style="left:18.50px;top:307.84px;font-size:4.8px;line-height:4.8px;color:#424242;">0</div>
<div class="t sa" style="left:18.50px;top:316.65px;font-size:4.8px;line-height:4.8px;color:#424242;">1</div>
<div class="t sa" style="left:18.50px;top:320.55px;font-size:4.8px;line-height:4.8px;color:#424242;">5</div>
<div class="t sa" style="left:18.50px;top:324.45px;font-size:4.8px;line-height:4.8px;color:#424242;">0</div>
<div class="t sa" style="left:18.50px;top:333.26px;font-size:4.8px;line-height:4.8px;color:#424242;">1</div>
<div class="t sa" style="left:18.50px;top:337.16px;font-size:4.8px;line-height:4.8px;color:#424242;">6</div>
<div class="t sa" style="left:18.50px;top:341.06px;font-size:4.8px;line-height:4.8px;color:#424242;">0</div>
<div class="t sa" style="left:18.50px;top:349.87px;font-size:4.8px;line-height:4.8px;color:#424242;">1</div>
<div class="t sa" style="left:18.50px;top:353.77px;font-size:4.8px;line-height:4.8px;color:#424242;">7</div>
<div class="t sa" style="left:18.50px;top:357.67px;font-size:4.8px;line-height:4.8px;color:#424242;">0</div>
<div class="t sa" style="left:18.50px;top:366.48px;font-size:4.8px;line-height:4.8px;color:#424242;">1</div>
<div class="t sa" style="left:18.50px;top:370.38px;font-size:4.8px;line-height:4.8px;color:#424242;">8</div>
<div class="t sa" style="left:18.50px;top:374.28px;font-size:4.8px;line-height:4.8px;color:#424242;">0</div>
<div class="t sa" style="left:18.50px;top:383.09px;font-size:4.8px;line-height:4.8px;color:#424242;">1</div>
<div class="t sa" style="left:18.50px;top:386.99px;font-size:4.8px;line-height:4.8px;color:#424242;">9</div>
<div class="t sa" style="left:18.50px;top:390.89px;font-size:4.8px;line-height:4.8px;color:#424242;">0</div>
<div class="t sa" style="left:18.50px;top:399.70px;font-size:4.8px;line-height:4.8px;color:#424242;">2</div>
<div class="t sa" style="left:18.50px;top:403.60px;font-size:4.8px;line-height:4.8px;color:#424242;">0</div>
<div class="t sa" style="left:18.50px;top:407.50px;font-size:4.8px;line-height:4.8px;color:#424242;">0</div>
<div class="t sa" style="left:18.50px;top:416.31px;font-size:4.8px;line-height:4.8px;color:#424242;">2</div>
<div class="t sa" style="left:18.50px;top:420.21px;font-size:4.8px;line-height:4.8px;color:#424242;">1</div>
<div class="t sa" style="left:18.50px;top:424.11px;font-size:4.8px;line-height:4.8px;color:#424242;">0</div>
<div class="t sa" style="left:18.50px;top:432.92px;font-size:4.8px;line-height:4.8px;color:#424242;">2</div>
<div class="t sa" style="left:18.50px;top:436.82px;font-size:4.8px;line-height:4.8px;color:#424242;">2</div>
<div class="t sa" style="left:18.50px;top:440.72px;font-size:4.8px;line-height:4.8px;color:#424242;">0</div>
<div class="t sa" style="left:18.50px;top:449.53px;font-size:4.8px;line-height:4.8px;color:#424242;">2</div>
<div class="t sa" style="left:18.50px;top:453.43px;font-size:4.8px;line-height:4.8px;color:#424242;">3</div>
<div class="t sa" style="left:18.50px;top:457.33px;font-size:4.8px;line-height:4.8px;color:#424242;">0</div>
<div class="t sa" style="left:18.50px;top:466.14px;font-size:4.8px;line-height:4.8px;color:#424242;">2</div>
<div class="t sa" style="left:18.50px;top:470.04px;font-size:4.8px;line-height:4.8px;color:#424242;">4</div>
<div class="t sa" style="left:18.50px;top:473.94px;font-size:4.8px;line-height:4.8px;color:#424242;">0</div>
<div class="t sa" style="left:18.50px;top:482.75px;font-size:4.8px;line-height:4.8px;color:#424242;">2</div>
<div class="t sa" style="left:18.50px;top:486.65px;font-size:4.8px;line-height:4.8px;color:#424242;">5</div>
<div class="t sa" style="left:18.50px;top:490.55px;font-size:4.8px;line-height:4.8px;color:#424242;">0</div>
<div class="t sa" style="left:18.50px;top:499.36px;font-size:4.8px;line-height:4.8px;color:#424242;">2</div>
<div class="t sa" style="left:18.50px;top:503.26px;font-size:4.8px;line-height:4.8px;color:#424242;">6</div>
<div class="t sa" style="left:18.50px;top:507.16px;font-size:4.8px;line-height:4.8px;color:#424242;">0</div>
<div class="t sa" style="left:18.50px;top:515.97px;font-size:4.8px;line-height:4.8px;color:#424242;">2</div>
<div class="t sa" style="left:18.50px;top:519.87px;font-size:4.8px;line-height:4.8px;color:#424242;">7</div>
<div class="t sa" style="left:18.50px;top:523.77px;font-size:4.8px;line-height:4.8px;color:#424242;">0</div>
<div class="t sa" style="left:18.50px;top:532.58px;font-size:4.8px;line-height:4.8px;color:#424242;">2</div>
<div class="t sa" style="left:18.50px;top:536.48px;font-size:4.8px;line-height:4.8px;color:#424242;">8</div>
<div class="t sa" style="left:18.50px;top:540.38px;font-size:4.8px;line-height:4.8px;color:#424242;">0</div>
<div class="t sa" style="left:18.50px;top:549.19px;font-size:4.8px;line-height:4.8px;color:#424242;">2</div>
<div class="t sa" style="left:18.50px;top:553.09px;font-size:4.8px;line-height:4.8px;color:#424242;">9</div>
<div class="t sa" style="left:18.50px;top:556.99px;font-size:4.8px;line-height:4.8px;color:#424242;">0</div>
<div class="b" style="left:16.5px;top:50.2px;width:10px;height:10.4px;background:#232323;"></div>
<svg style="left:17.5px;top:52px" width="8" height="8" viewBox="0 0 8 8"><path d="M4 0V8M0 4H8" stroke="#444" stroke-width="0.5" stroke-dasharray="0.8 0.8"/></svg>
<div class="b" style="left:424px;top:50.2px;width:591.2px;height:10.4px;background:#1c1c1c;"></div>
<svg style="left:0;top:0" width="1024" height="576"><rect x="425.25" y="59.4" width="0.5" height="1" fill="#707070" opacity="0.4"/><rect x="426.91" y="59.4" width="0.5" height="1" fill="#707070" opacity="0.4"/><rect x="428.57" y="58.6" width="0.5" height="1.8" fill="#707070" opacity="0.6"/><rect x="430.24" y="59.4" width="0.5" height="1" fill="#707070" opacity="0.4"/><rect x="431.90" y="59.4" width="0.5" height="1" fill="#707070" opacity="0.4"/><rect x="433.56" y="59.4" width="0.5" height="1" fill="#707070" opacity="0.4"/><rect x="435.22" y="59.4" width="0.5" height="1" fill="#707070" opacity="0.4"/><rect x="436.78" y="51.8" width="0.7" height="8.4" fill="#707070"/><rect x="438.54" y="59.4" width="0.5" height="1" fill="#707070" opacity="0.4"/><rect x="440.20" y="59.4" width="0.5" height="1" fill="#707070" opacity="0.4"/><rect x="441.86" y="59.4" width="0.5" height="1" fill="#707070" opacity="0.4"/><rect x="443.52" y="59.4" width="0.5" height="1" fill="#707070" opacity="0.4"/><rect x="445.18" y="58.6" width="0.5" height="1.8" fill="#707070" opacity="0.6"/><rect x="446.85" y="59.4" width="0.5" height="1" fill="#707070" opacity="0.4"/><rect x="448.51" y="59.4" width="0.5" height="1" fill="#707070" opacity="0.4"/><rect x="450.17" y="59.4" width="0.5" height="1" fill="#707070" opacity="0.4"/><rect x="451.83" y="59.4" width="0.5" height="1" fill="#707070" opacity="0.4"/><rect x="453.39" y="51.8" width="0.7" height="8.4" fill="#707070"/><rect x="455.15" y="59.4" width="0.5" height="1" fill="#707070" opacity="0.4"/><rect x="456.81" y="59.4" width="0.5" height="1" fill="#707070" opacity="0.4"/><rect x="458.47" y="59.4" width="0.5" height="1" fill="#707070" opacity="0.4"/><rect x="460.13" y="59.4" width="0.5" height="1" fill="#707070" opacity="0.4"/><rect x="461.79" y="58.6" width="0.5" height="1.8" fill="#707070" opacity="0.6"/><rect x="463.46" y="59.4" width="0.5" height="1" fill="#707070" opacity="0.4"/><rect x="465.12" y="59.4" width="0.5" height="1" fill="#707070" opacity="0.4"/><rect x="466.78" y="59.4" width="0.5" height="1" fill="#707070" opacity="0.4"/><rect x="468.44" y="59.4" width="0.5" height="1" fill="#707070" opacity="0.4"/><rect x="470.00" y="51.8" width="0.7" height="8.4" fill="#707070"/><rect x="471.76" y="59.4" width="0.5" height="1" fill="#707070" opacity="0.4"/><rect x="473.42" y="59.4" width="0.5" height="1" fill="#707070" opacity="0.4"/><rect x="475.08" y="59.4" width="0.5" height="1" fill="#707070" opacity="0.4"/><rect x="476.74" y="59.4" width="0.5" height="1" fill="#707070" opacity="0.4"/><rect x="478.40" y="58.6" width="0.5" height="1.8" fill="#707070" opacity="0.6"/><rect x="480.07" y="59.4" width="0.5" height="1" fill="#707070" opacity="0.4"/><rect x="481.73" y="59.4" width="0.5" height="1" fill="#707070" opacity="0.4"/><rect x="483.39" y="59.4" width="0.5" height="1" fill="#707070" opacity="0.4"/><rect x="485.05" y="59.4" width="0.5" height="1" fill="#707070" opacity="0.4"/><rect x="486.61" y="51.8" width="0.7" height="8.4" fill="#707070"/><rect x="488.37" y="59.4" width="0.5" height="1" fill="#707070" opacity="0.4"/><rect x="490.03" y="59.4" width="0.5" height="1" fill="#707070" opacity="0.4"/><rect x="491.69" y="59.4" width="0.5" height="1" fill="#707070" opacity="0.4"/><rect x="493.35" y="59.4" width="0.5" height="1" fill="#707070" opacity="0.4"/><rect x="495.01" y="58.6" width="0.5" height="1.8" fill="#707070" opacity="0.6"/><rect x="496.68" y="59.4" width="0.5" height="1" fill="#707070" opacity="0.4"/><rect x="498.34" y="59.4" width="0.5" height="1" fill="#707070" opacity="0.4"/><rect x="500.00" y="59.4" width="0.5" height="1" fill="#707070" opacity="0.4"/><rect x="501.66" y="59.4" width="0.5" height="1" fill="#707070" opacity="0.4"/><rect x="503.22" y="51.8" width="0.7" height="8.4" fill="#707070"/><rect x="504.98" y="59.4" width="0.5" height="1" fill="#707070" opacity="0.4"/><rect x="506.64" y="59.4" width="0.5" height="1" fill="#707070" opacity="0.4"/><rect x="508.30" y="59.4" width="0.5" height="1" fill="#707070" opacity="0.4"/><rect x="509.96" y="59.4" width="0.5" height="1" fill="#707070" opacity="0.4"/><rect x="511.62" y="58.6" width="0.5" height="1.8" fill="#707070" opacity="0.6"/><rect x="513.29" y="59.4" width="0.5" height="1" fill="#707070" opacity="0.4"/><rect x="514.95" y="59.4" width="0.5" height="1" fill="#707070" opacity="0.4"/><rect x="516.61" y="59.4" width="0.5" height="1" fill="#707070" opacity="0.4"/><rect x="518.27" y="59.4" width="0.5" height="1" fill="#707070" opacity="0.4"/><rect x="519.83" y="51.8" width="0.7" height="8.4" fill="#707070"/><rect x="521.59" y="59.4" width="0.5" height="1" fill="#707070" opacity="0.4"/><rect x="523.25" y="59.4" width="0.5" height="1" fill="#707070" opacity="0.4"/><rect x="524.91" y="59.4" width="0.5" height="1" fill="#707070" opacity="0.4"/><rect x="526.57" y="59.4" width="0.5" height="1" fill="#707070" opacity="0.4"/><rect x="528.24" y="58.6" width="0.5" height="1.8" fill="#707070" opacity="0.6"/><rect x="529.90" y="59.4" width="0.5" height="1" fill="#707070" opacity="0.4"/><rect x="531.56" y="59.4" width="0.5" height="1" fill="#707070" opacity="0.4"/><rect x="533.22" y="59.4" width="0.5" height="1" fill="#707070" opacity="0.4"/><rect x="534.88" y="59.4" width="0.5" height="1" fill="#707070" opacity="0.4"/><rect x="536.44" y="51.8" width="0.7" height="8.4" fill="#707070"/><rect x="538.20" y="59.4" width="0.5" height="1" fill="#707070" opacity="0.4"/><rect x="539.86" y="59.4" width="0.5" height="1" fill="#707070" opacity="0.4"/><rect x="541.52" y="59.4" width="0.5" height="1" fill="#707070" opacity="0.4"/><rect x="543.18" y="59.4" width="0.5" height="1" fill="#707070" opacity="0.4"/><rect x="544.85" y="58.6" width="0.5" height="1.8" fill="#707070" opacity="0.6"/><rect x="546.51" y="59.4" width="0.5" height="1" fill="#707070" opacity="0.4"/><rect x="548.17" y="59.4" width="0.5" height="1" fill="#707070" opacity="0.4"/><rect x="549.83" y="59.4" width="0.5" height="1" fill="#707070" opacity="0.4"/><rect x="551.49" y="59.4" width="0.5" height="1" fill="#707070" opacity="0.4"/><rect x="553.05" y="51.8" width="0.7" height="8.4" fill="#707070"/><rect x="554.81" y="59.4" width="0.5" height="1" fill="#707070" opacity="0.4"/><rect x="556.47" y="59.4" width="0.5" height="1" fill="#707070" opacity="0.4"/><rect x="558.13" y="59.4" width="0.5" height="1" fill="#707070" opacity="0.4"/><rect x="559.79" y="59.4" width="0.5" height="1" fill="#707070" opacity="0.4"/><rect x="561.45" y="58.6" width="0.5" height="1.8" fill="#707070" opacity="0.6"/><rect x="563.12" y="59.4" width="0.5" height="1" fill="#707070" opacity="0.4"/><rect x="564.78" y="59.4" width="0.5" height="1" fill="#707070" opacity="0.4"/><rect x="566.44" y="59.4" width="0.5" height="1" fill="#707070" opacity="0.4"/><rect x="568.10" y="59.4" width="0.5" height="1" fill="#707070" opacity="0.4"/><rect x="569.66" y="51.8" width="0.7" height="8.4" fill="#707070"/><rect x="571.42" y="59.4" width="0.5" height="1" fill="#707070" opacity="0.4"/><rect x="573.08" y="59.4" width="0.5" height="1" fill="#707070" opacity="0.4"/><rect x="574.74" y="59.4" width="0.5" height="1" fill="#707070" opacity="0.4"/><rect x="576.40" y="59.4" width="0.5" height="1" fill="#707070" opacity="0.4"/><rect x="578.06" y="58.6" width="0.5" height="1.8" fill="#707070" opacity="0.6"/><rect x="579.73" y="59.4" width="0.5" height="1" fill="#707070" opacity="0.4"/><rect x="581.39" y="59.4" width="0.5" height="1" fill="#707070" opacity="0.4"/><rect x="583.05" y="59.4" width="0.5" height="1" fill="#707070" opacity="0.4"/><rect x="584.71" y="59.4" width="0.5" height="1" fill="#707070" opacity="0.4"/><rect x="586.27" y="51.8" width="0.7" height="8.4" fill="#707070"/><rect x="588.03" y="59.4" width="0.5" height="1" fill="#707070" opacity="0.4"/><rect x="589.69" y="59.4" width="0.5" height="1" fill="#707070" opacity="0.4"/><rect x="591.35" y="59.4" width="0.5" height="1" fill="#707070" opacity="0.4"/><rect x="593.01" y="59.4" width="0.5" height="1" fill="#707070" opacity="0.4"/><rect x="594.67" y="58.6" width="0.5" height="1.8" fill="#707070" opacity="0.6"/><rect x="596.34" y="59.4" width="0.5" height="1" fill="#707070" opacity="0.4"/><rect x="598.00" y="59.4" width="0.5" height="1" fill="#707070" opacity="0.4"/><rect x="599.66" y="59.4" width="0.5" height="1" fill="#707070" opacity="0.4"/><rect x="601.32" y="59.4" width="0.5" height="1" fill="#707070" opacity="0.4"/><rect x="602.88" y="51.8" width="0.7" height="8.4" fill="#707070"/><rect x="604.64" y="59.4" width="0.5" height="1" fill="#707070" opacity="0.4"/><rect x="606.30" y="59.4" width="0.5" height="1" fill="#707070" opacity="0.4"/><rect x="607.96" y="59.4" width="0.5" height="1" fill="#707070" opacity="0.4"/><rect x="609.62" y="59.4" width="0.5" height="1" fill="#707070" opacity="0.4"/><rect x="611.28" y="58.6" width="0.5" height="1.8" fill="#707070" opacity="0.6"/><rect x="612.95" y="59.4" width="0.5" height="1" fill="#707070" opacity="0.4"/><rect x="614.61" y="59.4" width="0.5" height="1" fill="#707070" opacity="0.4"/><rect x="616.27" y="59.4" width="0.5" height="1" fill="#707070" opacity="0.4"/><rect x="617.93" y="59.4" width="0.5" height="1" fill="#707070" opacity="0.4"/><rect x="619.49" y="51.8" width="0.7" height="8.4" fill="#707070"/><rect x="621.25" y="59.4" width="0.5" height="1" fill="#707070" opacity="0.4"/><rect x="622.91" y="59.4" width="0.5" height="1" fill="#707070" opacity="0.4"/><rect x="624.57" y="59.4" width="0.5" height="1" fill="#707070" opacity="0.4"/><rect x="626.23" y="59.4" width="0.5" height="1" fill="#707070" opacity="0.4"/><rect x="627.89" y="58.6" width="0.5" height="1.8" fill="#707070" opacity="0.6"/><rect x="629.56" y="59.4" width="0.5" height="1" fill="#707070" opacity="0.4"/><rect x="631.22" y="59.4" width="0.5" height="1" fill="#707070" opacity="0.4"/><rect x="632.88" y="59.4" width="0.5" height="1" fill="#707070" opacity="0.4"/><rect x="634.54" y="59.4" width="0.5" height="1" fill="#707070" opacity="0.4"/><rect x="636.10" y="51.8" width="0.7" height="8.4" fill="#707070"/><rect x="637.86" y="59.4" width="0.5" height="1" fill="#707070" opacity="0.4"/><rect x="639.52" y="59.4" width="0.5" height="1" fill="#707070" opacity="0.4"/><rect x="641.18" y="59.4" width="0.5" height="1" fill="#707070" opacity="0.4"/><rect x="642.84" y="59.4" width="0.5" height="1" fill="#707070" opacity="0.4"/><rect x="644.50" y="58.6" width="0.5" height="1.8" fill="#707070" opacity="0.6"/><rect x="646.17" y="59.4" width="0.5" height="1" fill="#707070" opacity="0.4"/><rect x="647.83" y="59.4" width="0.5" height="1" fill="#707070" opacity="0.4"/><rect x="649.49" y="59.4" width="0.5" height="1" fill="#707070" opacity="0.4"/><rect x="651.15" y="59.4" width="0.5" height="1" fill="#707070" opacity="0.4"/><rect x="652.71" y="51.8" width="0.7" height="8.4" fill="#707070"/><rect x="654.47" y="59.4" width="0.5" height="1" fill="#707070" opacity="0.4"/><rect x="656.13" y="59.4" width="0.5" height="1" fill="#707070" opacity="0.4"/><rect x="657.79" y="59.4" width="0.5" height="1" fill="#707070" opacity="0.4"/><rect x="659.45" y="59.4" width="0.5" height="1" fill="#707070" opacity="0.4"/><rect x="661.12" y="58.6" width="0.5" height="1.8" fill="#707070" opacity="0.6"/><rect x="662.78" y="59.4" width="0.5" height="1" fill="#707070" opacity="0.4"/><rect x="664.44" y="59.4" width="0.5" height="1" fill="#707070" opacity="0.4"/><rect x="666.10" y="59.4" width="0.5" height="1" fill="#707070" opacity="0.4"/><rect x="667.76" y="59.4" width="0.5" height="1" fill="#707070" opacity="0.4"/><rect x="669.32" y="51.8" width="0.7" height="8.4" fill="#707070"/><rect x="671.08" y="59.4" width="0.5" height="1" fill="#707070" opacity="0.4"/><rect x="672.74" y="59.4" width="0.5" height="1" fill="#707070" opacity="0.4"/><rect x="674.40" y="59.4" width="0.5" height="1" fill="#707070" opacity="0.4"/><rect x="676.06" y="59.4" width="0.5" height="1" fill="#707070" opacity="0.4"/><rect x="677.73" y="58.6" width="0.5" height="1.8" fill="#707070" opacity="0.6"/><rect x="679.39" y="59.4" width="0.5" height="1" fill="#707070" opacity="0.4"/><rect x="681.05" y="59.4" width="0.5" height="1" fill="#707070" opacity="0.4"/><rect x="682.71" y="59.4" width="0.5" height="1" fill="#707070" opacity="0.4"/><rect x="684.37" y="59.4" width="0.5" height="1" fill="#707070" opacity="0.4"/><rect x="685.93" y="51.8" width="0.7" height="8.4" fill="#707070"/><rect x="687.69" y="59.4" width="0.5" height="1" fill="#707070" opacity="0.4"/><rect x="689.35" y="59.4" width="0.5" height="1" fill="#707070" opacity="0.4"/><rect x="691.01" y="59.4" width="0.5" height="1" fill="#707070" opacity="0.4"/><rect x="692.67" y="59.4" width="0.5" height="1" fill="#707070" opacity="0.4"/><rect x="694.34" y="58.6" width="0.5" height="1.8" fill="#707070" opacity="0.6"/><rect x="696.00" y="59.4" width="0.5" height="1" fill="#707070" opacity="0.4"/><rect x="697.66" y="59.4" width="0.5" height="1" fill="#707070" opacity="0.4"/><rect x="699.32" y="59.4" width="0.5" height="1" fill="#707070" opacity="0.4"/><rect x="700.98" y="59.4" width="0.5" height="1" fill="#707070" opacity="0.4"/><rect x="702.54" y="51.8" width="0.7" height="8.4" fill="#707070"/><rect x="704.30" y="59.4" width="0.5" height="1" fill="#707070" opacity="0.4"/><rect x="705.96" y="59.4" width="0.5" height="1" fill="#707070" opacity="0.4"/><rect x="707.62" y="59.4" width="0.5" height="1" fill="#707070" opacity="0.4"/><rect x="709.28" y="59.4" width="0.5" height="1" fill="#707070" opacity="0.4"/><rect x="710.94" y="58.6" width="0.5" height="1.8" fill="#707070" opacity="0.6"/><rect x="712.61" y="59.4" width="0.5" height="1" fill="#707070" opacity="0.4"/><rect x="714.27" y="59.4" width="0.5" height="1" fill="#707070" opacity="0.4"/><rect x="715.93" y="59.4" width="0.5" height="1" fill="#707070" opacity="0.4"/><rect x="717.59" y="59.4" width="0.5" height="1" fill="#707070" opacity="0.4"/><rect x="719.15" y="51.8" width="0.7" height="8.4" fill="#707070"/><rect x="720.91" y="59.4" width="0.5" height="1" fill="#707070" opacity="0.4"/><rect x="722.57" y="59.4" width="0.5" height="1" fill="#707070" opacity="0.4"/><rect x="724.23" y="59.4" width="0.5" height="1" fill="#707070" opacity="0.4"/><rect x="725.89" y="59.4" width="0.5" height="1" fill="#707070" opacity="0.4"/><rect x="727.55" y="58.6" width="0.5" height="1.8" fill="#707070" opacity="0.6"/><rect x="729.22" y="59.4" width="0.5" height="1" fill="#707070" opacity="0.4"/><rect x="730.88" y="59.4" width="0.5" height="1" fill="#707070" opacity="0.4"/><rect x="732.54" y="59.4" width="0.5" height="1" fill="#707070" opacity="0.4"/><rect x="734.20" y="59.4" width="0.5" height="1" fill="#707070" opacity="0.4"/><rect x="735.76" y="51.8" width="0.7" height="8.4" fill="#707070"/><rect x="737.52" y="59.4" width="0.5" height="1" fill="#707070" opacity="0.4"/><rect x="739.18" y="59.4" width="0.5" height="1" fill="#707070" opacity="0.4"/><rect x="740.84" y="59.4" width="0.5" height="1" fill="#707070" opacity="0.4"/><rect x="742.50" y="59.4" width="0.5" height="1" fill="#707070" opacity="0.4"/><rect x="744.16" y="58.6" width="0.5" height="1.8" fill="#707070" opacity="0.6"/><rect x="745.83" y="59.4" width="0.5" height="1" fill="#707070" opacity="0.4"/><rect x="747.49" y="59.4" width="0.5" height="1" fill="#707070" opacity="0.4"/><rect x="749.15" y="59.4" width="0.5" height="1" fill="#707070" opacity="0.4"/><rect x="750.81" y="59.4" width="0.5" height="1" fill="#707070" opacity="0.4"/><rect x="752.37" y="51.8" width="0.7" height="8.4" fill="#707070"/><rect x="754.13" y="59.4" width="0.5" height="1" fill="#707070" opacity="0.4"/><rect x="755.79" y="59.4" width="0.5" height="1" fill="#707070" opacity="0.4"/><rect x="757.45" y="59.4" width="0.5" height="1" fill="#707070" opacity="0.4"/><rect x="759.11" y="59.4" width="0.5" height="1" fill="#707070" opacity="0.4"/><rect x="760.77" y="58.6" width="0.5" height="1.8" fill="#707070" opacity="0.6"/><rect x="762.44" y="59.4" width="0.5" height="1" fill="#707070" opacity="0.4"/><rect x="764.10" y="59.4" width="0.5" height="1" fill="#707070" opacity="0.4"/><rect x="765.76" y="59.4" width="0.5" height="1" fill="#707070" opacity="0.4"/><rect x="767.42" y="59.4" width="0.5" height="1" fill="#707070" opacity="0.4"/><rect x="768.98" y="51.8" width="0.7" height="8.4" fill="#707070"/><rect x="770.74" y="59.4" width="0.5" height="1" fill="#707070" opacity="0.4"/><rect x="772.40" y="59.4" width="0.5" height="1" fill="#707070" opacity="0.4"/><rect x="774.06" y="59.4" width="0.5" height="1" fill="#707070" opacity="0.4"/><rect x="775.72" y="59.4" width="0.5" height="1" fill="#707070" opacity="0.4"/><rect x="777.38" y="58.6" width="0.5" height="1.8" fill="#707070" opacity="0.6"/><rect x="779.05" y="59.4" width="0.5" height="1" fill="#707070" opacity="0.4"/><rect x="780.71" y="59.4" width="0.5" height="1" fill="#707070" opacity="0.4"/><rect x="782.37" y="59.4" width="0.5" height="1" fill="#707070" opacity="0.4"/><rect x="784.03" y="59.4" width="0.5" height="1" fill="#707070" opacity="0.4"/><rect x="785.59" y="51.8" width="0.7" height="8.4" fill="#707070"/><rect x="787.35" y="59.4" width="0.5" height="1" fill="#707070" opacity="0.4"/><rect x="789.01" y="59.4" width="0.5" height="1" fill="#707070" opacity="0.4"/><rect x="790.67" y="59.4" width="0.5" height="1" fill="#707070" opacity="0.4"/><rect x="792.33" y="59.4" width="0.5" height="1" fill="#707070" opacity="0.4"/><rect x="794.00" y="58.6" width="0.5" height="1.8" fill="#707070" opacity="0.6"/><rect x="795.66" y="59.4" width="0.5" height="1" fill="#707070" opacity="0.4"/><rect x="797.32" y="59.4" width="0.5" height="1" fill="#707070" opacity="0.4"/><rect x="798.98" y="59.4" width="0.5" height="1" fill="#707070" opacity="0.4"/><rect x="800.64" y="59.4" width="0.5" height="1" fill="#707070" opacity="0.4"/><rect x="802.20" y="51.8" width="0.7" height="8.4" fill="#707070"/><rect x="803.96" y="59.4" width="0.5" height="1" fill="#707070" opacity="0.4"/><rect x="805.62" y="59.4" width="0.5" height="1" fill="#707070" opacity="0.4"/><rect x="807.28" y="59.4" width="0.5" height="1" fill="#707070" opacity="0.4"/><rect x="808.94" y="59.4" width="0.5" height="1" fill="#707070" opacity="0.4"/><rect x="810.61" y="58.6" width="0.5" height="1.8" fill="#707070" opacity="0.6"/><rect x="812.27" y="59.4" width="0.5" height="1" fill="#707070" opacity="0.4"/><rect x="813.93" y="59.4" width="0.5" height="1" fill="#707070" opacity="0.4"/><rect x="815.59" y="59.4" width="0.5" height="1" fill="#707070" opacity="0.4"/><rect x="817.25" y="59.4" width="0.5" height="1" fill="#707070" opacity="0.4"/><rect x="818.81" y="51.8" width="0.7" height="8.4" fill="#707070"/><rect x="820.57" y="59.4" width="0.5" height="1" fill="#707070" opacity="0.4"/><rect x="822.23" y="59.4" width="0.5" height="1" fill="#707070" opacity="0.4"/><rect x="823.89" y="59.4" width="0.5" height="1" fill="#707070" opacity="0.4"/><rect x="825.55" y="59.4" width="0.5" height="1" fill="#707070" opacity="0.4"/><rect x="827.21" y="58.6" width="0.5" height="1.8" fill="#707070" opacity="0.6"/><rect x="828.88" y="59.4" width="0.5" height="1" fill="#707070" opacity="0.4"/><rect x="830.54" y="59.4" width="0.5" height="1" fill="#707070" opacity="0.4"/><rect x="832.20" y="59.4" width="0.5" height="1" fill="#707070" opacity="0.4"/><rect x="833.86" y="59.4" width="0.5" height="1" fill="#707070" opacity="0.4"/><rect x="835.42" y="51.8" width="0.7" height="8.4" fill="#707070"/><rect x="837.18" y="59.4" width="0.5" height="1" fill="#707070" opacity="0.4"/><rect x="838.84" y="59.4" width="0.5" height="1" fill="#707070" opacity="0.4"/><rect x="840.50" y="59.4" width="0.5" height="1" fill="#707070" opacity="0.4"/><rect x="842.16" y="59.4" width="0.5" height="1" fill="#707070" opacity="0.4"/><rect x="843.83" y="58.6" width="0.5" height="1.8" fill="#707070" opacity="0.6"/><rect x="845.49" y="59.4" width="0.5" height="1" fill="#707070" opacity="0.4"/><rect x="847.15" y="59.4" width="0.5" height="1" fill="#707070" opacity="0.4"/><rect x="848.81" y="59.4" width="0.5" height="1" fill="#707070" opacity="0.4"/><rect x="850.47" y="59.4" width="0.5" height="1" fill="#707070" opacity="0.4"/><rect x="852.03" y="51.8" width="0.7" height="8.4" fill="#707070"/><rect x="853.79" y="59.4" width="0.5" height="1" fill="#707070" opacity="0.4"/><rect x="855.45" y="59.4" width="0.5" height="1" fill="#707070" opacity="0.4"/><rect x="857.11" y="59.4" width="0.5" height="1" fill="#707070" opacity="0.4"/><rect x="858.77" y="59.4" width="0.5" height="1" fill="#707070" opacity="0.4"/><rect x="860.43" y="58.6" width="0.5" height="1.8" fill="#707070" opacity="0.6"/><rect x="862.10" y="59.4" width="0.5" height="1" fill="#707070" opacity="0.4"/><rect x="863.76" y="59.4" width="0.5" height="1" fill="#707070" opacity="0.4"/><rect x="865.42" y="59.4" width="0.5" height="1" fill="#707070" opacity="0.4"/><rect x="867.08" y="59.4" width="0.5" height="1" fill="#707070" opacity="0.4"/><rect x="868.64" y="51.8" width="0.7" height="8.4" fill="#707070"/><rect x="870.40" y="59.4" width="0.5" height="1" fill="#707070" opacity="0.4"/><rect x="872.06" y="59.4" width="0.5" height="1" fill="#707070" opacity="0.4"/><rect x="873.72" y="59.4" width="0.5" height="1" fill="#707070" opacity="0.4"/><rect x="875.38" y="59.4" width="0.5" height="1" fill="#707070" opacity="0.4"/><rect x="877.04" y="58.6" width="0.5" height="1.8" fill="#707070" opacity="0.6"/><rect x="878.71" y="59.4" width="0.5" height="1" fill="#707070" opacity="0.4"/><rect x="880.37" y="59.4" width="0.5" height="1" fill="#707070" opacity="0.4"/><rect x="882.03" y="59.4" width="0.5" height="1" fill="#707070" opacity="0.4"/><rect x="883.69" y="59.4" width="0.5" height="1" fill="#707070" opacity="0.4"/><rect x="885.25" y="51.8" width="0.7" height="8.4" fill="#707070"/><rect x="887.01" y="59.4" width="0.5" height="1" fill="#707070" opacity="0.4"/><rect x="888.67" y="59.4" width="0.5" height="1" fill="#707070" opacity="0.4"/><rect x="890.33" y="59.4" width="0.5" height="1" fill="#707070" opacity="0.4"/><rect x="891.99" y="59.4" width="0.5" height="1" fill="#707070" opacity="0.4"/><rect x="893.65" y="58.6" width="0.5" height="1.8" fill="#707070" opacity="0.6"/><rect x="895.32" y="59.4" width="0.5" height="1" fill="#707070" opacity="0.4"/><rect x="896.98" y="59.4" width="0.5" height="1" fill="#707070" opacity="0.4"/><rect x="898.64" y="59.4" width="0.5" height="1" fill="#707070" opacity="0.4"/><rect x="900.30" y="59.4" width="0.5" height="1" fill="#707070" opacity="0.4"/><rect x="901.86" y="51.8" width="0.7" height="8.4" fill="#707070"/><rect x="903.62" y="59.4" width="0.5" height="1" fill="#707070" opacity="0.4"/><rect x="905.28" y="59.4" width="0.5" height="1" fill="#707070" opacity="0.4"/><rect x="906.94" y="59.4" width="0.5" height="1" fill="#707070" opacity="0.4"/><rect x="908.60" y="59.4" width="0.5" height="1" fill="#707070" opacity="0.4"/><rect x="910.26" y="58.6" width="0.5" height="1.8" fill="#707070" opacity="0.6"/><rect x="911.93" y="59.4" width="0.5" height="1" fill="#707070" opacity="0.4"/><rect x="913.59" y="59.4" width="0.5" height="1" fill="#707070" opacity="0.4"/><rect x="915.25" y="59.4" width="0.5" height="1" fill="#707070" opacity="0.4"/><rect x="916.91" y="59.4" width="0.5" height="1" fill="#707070" opacity="0.4"/><rect x="918.47" y="51.8" width="0.7" height="8.4" fill="#707070"/><rect x="920.23" y="59.4" width="0.5" height="1" fill="#707070" opacity="0.4"/><rect x="921.89" y="59.4" width="0.5" height="1" fill="#707070" opacity="0.4"/><rect x="923.55" y="59.4" width="0.5" height="1" fill="#707070" opacity="0.4"/><rect x="925.21" y="59.4" width="0.5" height="1" fill="#707070" opacity="0.4"/><rect x="926.88" y="58.6" width="0.5" height="1.8" fill="#707070" opacity="0.6"/><rect x="928.54" y="59.4" width="0.5" height="1" fill="#707070" opacity="0.4"/><rect x="930.20" y="59.4" width="0.5" height="1" fill="#707070" opacity="0.4"/><rect x="931.86" y="59.4" width="0.5" height="1" fill="#707070" opacity="0.4"/><rect x="933.52" y="59.4" width="0.5" height="1" fill="#707070" opacity="0.4"/><rect x="935.08" y="51.8" width="0.7" height="8.4" fill="#707070"/><rect x="936.84" y="59.4" width="0.5" height="1" fill="#707070" opacity="0.4"/><rect x="938.50" y="59.4" width="0.5" height="1" fill="#707070" opacity="0.4"/><rect x="940.16" y="59.4" width="0.5" height="1" fill="#707070" opacity="0.4"/><rect x="941.82" y="59.4" width="0.5" height="1" fill="#707070" opacity="0.4"/><rect x="943.48" y="58.6" width="0.5" height="1.8" fill="#707070" opacity="0.6"/><rect x="945.15" y="59.4" width="0.5" height="1" fill="#707070" opacity="0.4"/><rect x="946.81" y="59.4" width="0.5" height="1" fill="#707070" opacity="0.4"/><rect x="948.47" y="59.4" width="0.5" height="1" fill="#707070" opacity="0.4"/><rect x="950.13" y="59.4" width="0.5" height="1" fill="#707070" opacity="0.4"/><rect x="951.69" y="51.8" width="0.7" height="8.4" fill="#707070"/><rect x="953.45" y="59.4" width="0.5" height="1" fill="#707070" opacity="0.4"/><rect x="955.11" y="59.4" width="0.5" height="1" fill="#707070" opacity="0.4"/><rect x="956.77" y="59.4" width="0.5" height="1" fill="#707070" opacity="0.4"/><rect x="958.43" y="59.4" width="0.5" height="1" fill="#707070" opacity="0.4"/><rect x="960.10" y="58.6" width="0.5" height="1.8" fill="#707070" opacity="0.6"/><rect x="961.76" y="59.4" width="0.5" height="1" fill="#707070" opacity="0.4"/><rect x="963.42" y="59.4" width="0.5" height="1" fill="#707070" opacity="0.4"/><rect x="965.08" y="59.4" width="0.5" height="1" fill="#707070" opacity="0.4"/><rect x="966.74" y="59.4" width="0.5" height="1" fill="#707070" opacity="0.4"/><rect x="968.30" y="51.8" width="0.7" height="8.4" fill="#707070"/><rect x="970.06" y="59.4" width="0.5" height="1" fill="#707070" opacity="0.4"/><rect x="971.72" y="59.4" width="0.5" height="1" fill="#707070" opacity="0.4"/><rect x="973.38" y="59.4" width="0.5" height="1" fill="#707070" opacity="0.4"/><rect x="975.04" y="59.4" width="0.5" height="1" fill="#707070" opacity="0.4"/><rect x="976.70" y="58.6" width="0.5" height="1.8" fill="#707070" opacity="0.6"/><rect x="978.37" y="59.4" width="0.5" height="1" fill="#707070" opacity="0.4"/><rect x="980.03" y="59.4" width="0.5" height="1" fill="#707070" opacity="0.4"/><rect x="981.69" y="59.4" width="0.5" height="1" fill="#707070" opacity="0.4"/><rect x="983.35" y="59.4" width="0.5" height="1" fill="#707070" opacity="0.4"/><rect x="984.91" y="51.8" width="0.7" height="8.4" fill="#707070"/><rect x="986.67" y="59.4" width="0.5" height="1" fill="#707070" opacity="0.4"/><rect x="988.33" y="59.4" width="0.5" height="1" fill="#707070" opacity="0.4"/><rect x="989.99" y="59.4" width="0.5" height="1" fill="#707070" opacity="0.4"/><rect x="991.65" y="59.4" width="0.5" height="1" fill="#707070" opacity="0.4"/><rect x="993.32" y="58.6" width="0.5" height="1.8" fill="#707070" opacity="0.6"/><rect x="994.98" y="59.4" width="0.5" height="1" fill="#707070" opacity="0.4"/><rect x="996.64" y="59.4" width="0.5" height="1" fill="#707070" opacity="0.4"/><rect x="998.30" y="59.4" width="0.5" height="1" fill="#707070" opacity="0.4"/><rect x="999.96" y="59.4" width="0.5" height="1" fill="#707070" opacity="0.4"/><rect x="1001.52" y="51.8" width="0.7" height="8.4" fill="#707070"/><rect x="1003.28" y="59.4" width="0.5" height="1" fill="#707070" opacity="0.4"/><rect x="1004.94" y="59.4" width="0.5" height="1" fill="#707070" opacity="0.4"/><rect x="1006.60" y="59.4" width="0.5" height="1" fill="#707070" opacity="0.4"/><rect x="1008.26" y="59.4" width="0.5" height="1" fill="#707070" opacity="0.4"/><rect x="1009.92" y="58.6" width="0.5" height="1.8" fill="#707070" opacity="0.6"/><rect x="1011.59" y="59.4" width="0.5" height="1" fill="#707070" opacity="0.4"/><rect x="1013.25" y="59.4" width="0.5" height="1" fill="#707070" opacity="0.4"/><rect x="1014.91" y="59.4" width="0.5" height="1" fill="#707070" opacity="0.4"/></svg>
<div class="t sa" style="top:51.48px;font-size:5.2px;line-height:6.24px;color:#d2d2d2;left:438.23px;">140</div>
<div class="t sa" style="top:51.48px;font-size:5.2px;line-height:6.24px;color:#d2d2d2;left:454.84px;">150</div>
<div class="t sa" style="top:51.48px;font-size:5.2px;line-height:6.24px;color:#d2d2d2;left:471.45px;">160</div>
<div class="t sa" style="top:51.48px;font-size:5.2px;line-height:6.24px;color:#d2d2d2;left:488.06px;">170</div>
<div class="t sa" style="top:51.48px;font-size:5.2px;line-height:6.24px;color:#d2d2d2;left:504.67px;">180</div>
<div class="t sa" style="top:51.48px;font-size:5.2px;line-height:6.24px;color:#d2d2d2;left:521.28px;">190</div>
<div class="t sa" style="top:51.48px;font-size:5.2px;line-height:6.24px;color:#d2d2d2;left:537.89px;">200</div>
<div class="t sa" style="top:51.48px;font-size:5.2px;line-height:6.24px;color:#d2d2d2;left:554.50px;">0</div>
<div class="t sa" style="top:51.48px;font-size:5.2px;line-height:6.24px;color:#d2d2d2;left:571.11px;">10</div>
<div class="t sa" style="top:51.48px;font-size:5.2px;line-height:6.24px;color:#d2d2d2;left:587.72px;">20</div>
<div class="t sa" style="top:51.48px;font-size:5.2px;line-height:6.24px;color:#d2d2d2;left:604.33px;">30</div>
<div class="t sa" style="top:51.48px;font-size:5.2px;line-height:6.24px;color:#d2d2d2;left:620.94px;">40</div>
<div class="t sa" style="top:51.48px;font-size:5.2px;line-height:6.24px;color:#d2d2d2;left:637.55px;">50</div>
<div class="t sa" style="top:51.48px;font-size:5.2px;line-height:6.24px;color:#d2d2d2;left:654.16px;">60</div>
<div class="t sa" style="top:51.48px;font-size:5.2px;line-height:6.24px;color:#d2d2d2;left:670.77px;">70</div>
<div class="t sa" style="top:51.48px;font-size:5.2px;line-height:6.24px;color:#d2d2d2;left:687.38px;">80</div>
<div class="t sa" style="top:51.48px;font-size:5.2px;line-height:6.24px;color:#d2d2d2;left:703.99px;">90</div>
<div class="t sa" style="top:51.48px;font-size:5.2px;line-height:6.24px;color:#d2d2d2;left:720.60px;">100</div>
<div class="t sa" style="top:51.48px;font-size:5.2px;line-height:6.24px;color:#d2d2d2;left:737.21px;">110</div>
<div class="t sa" style="top:51.48px;font-size:5.2px;line-height:6.24px;color:#d2d2d2;left:753.82px;">120</div>
<div class="t sa" style="top:51.48px;font-size:5.2px;line-height:6.24px;color:#d2d2d2;left:770.43px;">130</div>
<div class="t sa" style="top:51.48px;font-size:5.2px;line-height:6.24px;color:#d2d2d2;left:787.04px;">140</div>
<div class="t sa" style="top:51.48px;font-size:5.2px;line-height:6.24px;color:#d2d2d2;left:803.65px;">150</div>
<div class="t sa" style="top:51.48px;font-size:5.2px;line-height:6.24px;color:#d2d2d2;left:820.26px;">160</div>
<div class="t sa" style="top:51.48px;font-size:5.2px;line-height:6.24px;color:#d2d2d2;left:836.87px;">170</div>
<div class="t sa" style="top:51.48px;font-size:5.2px;line-height:6.24px;color:#d2d2d2;left:853.48px;">180</div>
<div class="t sa" style="top:51.48px;font-size:5.2px;line-height:6.24px;color:#d2d2d2;left:870.09px;">190</div>
<div class="t sa" style="top:51.48px;font-size:5.2px;line-height:6.24px;color:#d2d2d2;left:886.70px;">200</div>
<div class="t sa" style="top:51.48px;font-size:5.2px;line-height:6.24px;color:#d2d2d2;left:903.31px;">0</div>
<div class="t sa" style="top:51.48px;font-size:5.2px;line-height:6.24px;color:#d2d2d2;left:919.92px;">10</div>
<div class="t sa" style="top:51.48px;font-size:5.2px;line-height:6.24px;color:#d2d2d2;left:936.53px;">20</div>
<div class="t sa" style="top:51.48px;font-size:5.2px;line-height:6.24px;color:#d2d2d2;left:953.14px;">30</div>
<div class="t sa" style="top:51.48px;font-size:5.2px;line-height:6.24px;color:#d2d2d2;left:969.75px;">40</div>
<div class="t sa" style="top:51.48px;font-size:5.2px;line-height:6.24px;color:#d2d2d2;left:986.36px;">50</div>
<div class="t sa" style="top:51.48px;font-size:5.2px;line-height:6.24px;color:#d2d2d2;left:1002.97px;">60</div>
<div class="b" style="left:424px;top:51px;width:3.2px;height:516px;background:#282828;"></div>
<div class="b" style="left:427.2px;top:60.2px;width:8.300000000000011px;height:505.40000000000003px;background:#121212;"></div>
<svg style="left:0;top:0" width="1024" height="576"><rect x="434.10" y="60.71" width="1.4" height="0.5" fill="#909090" opacity="0.55"/><rect x="434.10" y="62.37" width="1.4" height="0.5" fill="#909090" opacity="0.55"/><rect x="434.10" y="64.03" width="1.4" height="0.5" fill="#909090" opacity="0.55"/><rect x="434.10" y="65.69" width="1.4" height="0.5" fill="#909090" opacity="0.55"/><rect x="428.00" y="67.30" width="7.50" height="0.6" fill="#909090" opacity="0.55"/><rect x="428.00" y="67.25" width="4" height="0.7" fill="#c8c8c8" opacity="0.8"/><rect x="434.10" y="69.01" width="1.4" height="0.5" fill="#909090" opacity="0.55"/><rect x="434.10" y="70.67" width="1.4" height="0.5" fill="#909090" opacity="0.55"/><rect x="434.10" y="72.33" width="1.4" height="0.5" fill="#909090" opacity="0.55"/><rect x="434.10" y="73.99" width="1.4" height="0.5" fill="#909090" opacity="0.55"/><rect x="432.70" y="75.66" width="2.8" height="0.5" fill="#909090" opacity="0.8"/><rect x="434.10" y="77.32" width="1.4" height="0.5" fill="#909090" opacity="0.55"/><rect x="434.10" y="78.98" width="1.4" height="0.5" fill="#909090" opacity="0.55"/><rect x="434.10" y="80.64" width="1.4" height="0.5" fill="#909090" opacity="0.55"/><rect x="434.10" y="82.30" width="1.4" height="0.5" fill="#909090" opacity="0.55"/><rect x="428.00" y="83.91" width="7.50" height="0.6" fill="#909090" opacity="0.55"/><rect x="428.00" y="83.86" width="4" height="0.7" fill="#c8c8c8" opacity="0.8"/><rect x="434.10" y="85.62" width="1.4" height="0.5" fill="#909090" opacity="0.55"/><rect x="434.10" y="87.28" width="1.4" height="0.5" fill="#909090" opacity="0.55"/><rect x="434.10" y="88.94" width="1.4" height="0.5" fill="#909090" opacity="0.55"/><rect x="434.10" y="90.60" width="1.4" height="0.5" fill="#909090" opacity="0.55"/><rect x="432.70" y="92.26" width="2.8" height="0.5" fill="#909090" opacity="0.8"/><rect x="434.10" y="93.93" width="1.4" height="0.5" fill="#909090" opacity="0.55"/><rect x="434.10" y="95.59" width="1.4" height="0.5" fill="#909090" opacity="0.55"/><rect x="434.10" y="97.25" width="1.4" height="0.5" fill="#909090" opacity="0.55"/><rect x="434.10" y="98.91" width="1.4" height="0.5" fill="#909090" opacity="0.55"/><rect x="428.00" y="100.52" width="7.50" height="0.6" fill="#909090" opacity="0.55"/><rect x="428.00" y="100.47" width="4" height="0.7" fill="#c8c8c8" opacity="0.8"/><rect x="434.10" y="102.23" width="1.4" height="0.5" fill="#909090" opacity="0.55"/><rect x="434.10" y="103.89" width="1.4" height="0.5" fill="#909090" opacity="0.55"/><rect x="434.10" y="105.55" width="1.4" height="0.5" fill="#909090" opacity="0.55"/><rect x="434.10" y="107.21" width="1.4" height="0.5" fill="#909090" opacity="0.55"/><rect x="432.70" y="108.88" width="2.8" height="0.5" fill="#909090" opacity="0.8"/><rect x="434.10" y="110.54" width="1.4" height="0.5" fill="#909090" opacity="0.55"/><rect x="434.10" y="112.20" width="1.4" height="0.5" fill="#909090" opacity="0.55"/><rect x="434.10" y="113.86" width="1.4" height="0.5" fill="#909090" opacity="0.55"/><rect x="434.10" y="115.52" width="1.4" height="0.5" fill="#909090" opacity="0.55"/><rect x="428.00" y="117.13" width="7.50" height="0.6" fill="#909090" opacity="0.55"/><rect x="428.00" y="117.08" width="4" height="0.7" fill="#c8c8c8" opacity="0.8"/><rect x="434.10" y="118.84" width="1.4" height="0.5" fill="#909090" opacity="0.55"/><rect x="434.10" y="120.50" width="1.4" height="0.5" fill="#909090" opacity="0.55"/><rect x="434.10" y="122.16" width="1.4" height="0.5" fill="#909090" opacity="0.55"/><rect x="434.10" y="123.82" width="1.4" height="0.5" fill="#909090" opacity="0.55"/><rect x="432.70" y="125.48" width="2.8" height="0.5" fill="#909090" opacity="0.8"/><rect x="434.10" y="127.15" width="1.4" height="0.5" fill="#909090" opacity="0.55"/><rect x="434.10" y="128.81" width="1.4" height="0.5" fill="#909090" opacity="0.55"/><rect x="434.10" y="130.47" width="1.4" height="0.5" fill="#909090" opacity="0.55"/><rect x="434.10" y="132.13" width="1.4" height="0.5" fill="#909090" opacity="0.55"/><rect x="428.00" y="133.74" width="7.50" height="0.6" fill="#909090" opacity="0.55"/><rect x="428.00" y="133.69" width="4" height="0.7" fill="#c8c8c8" opacity="0.8"/><rect x="434.10" y="135.45" width="1.4" height="0.5" fill="#909090" opacity="0.55"/><rect x="434.10" y="137.11" width="1.4" height="0.5" fill="#909090" opacity="0.55"/><rect x="434.10" y="138.77" width="1.4" height="0.5" fill="#909090" opacity="0.55"/><rect x="434.10" y="140.43" width="1.4" height="0.5" fill="#909090" opacity="0.55"/><rect x="432.70" y="142.09" width="2.8" height="0.5" fill="#909090" opacity="0.8"/><rect x="434.10" y="143.76" width="1.4" height="0.5" fill="#909090" opacity="0.55"/><rect x="434.10" y="145.42" width="1.4" height="0.5" fill="#909090" opacity="0.55"/><rect x="434.10" y="147.08" width="1.4" height="0.5" fill="#909090" opacity="0.55"/><rect x="434.10" y="148.74" width="1.4" height="0.5" fill="#909090" opacity="0.55"/><rect x="428.00" y="150.35" width="7.50" height="0.6" fill="#909090" opacity="0.55"/><rect x="428.00" y="150.30" width="4" height="0.7" fill="#c8c8c8" opacity="0.8"/><rect x="434.10" y="152.06" width="1.4" height="0.5" fill="#909090" opacity="0.55"/><rect x="434.10" y="153.72" width="1.4" height="0.5" fill="#909090" opacity="0.55"/><rect x="434.10" y="155.38" width="1.4" height="0.5" fill="#909090" opacity="0.55"/><rect x="434.10" y="157.04" width="1.4" height="0.5" fill="#909090" opacity="0.55"/><rect x="432.70" y="158.70" width="2.8" height="0.5" fill="#909090" opacity="0.8"/><rect x="434.10" y="160.37" width="1.4" height="0.5" fill="#909090" opacity="0.55"/><rect x="434.10" y="162.03" width="1.4" height="0.5" fill="#909090" opacity="0.55"/><rect x="434.10" y="163.69" width="1.4" height="0.5" fill="#909090" opacity="0.55"/><rect x="434.10" y="165.35" width="1.4" height="0.5" fill="#909090" opacity="0.55"/><rect x="428.00" y="166.96" width="7.50" height="0.6" fill="#909090" opacity="0.55"/><rect x="428.00" y="166.91" width="4" height="0.7" fill="#c8c8c8" opacity="0.8"/><rect x="434.10" y="168.67" width="1.4" height="0.5" fill="#909090" opacity="0.55"/><rect x="434.10" y="170.33" width="1.4" height="0.5" fill="#909090" opacity="0.55"/><rect x="434.10" y="171.99" width="1.4" height="0.5" fill="#909090" opacity="0.55"/><rect x="434.10" y="173.65" width="1.4" height="0.5" fill="#909090" opacity="0.55"/><rect x="432.70" y="175.31" width="2.8" height="0.5" fill="#909090" opacity="0.8"/><rect x="434.10" y="176.98" width="1.4" height="0.5" fill="#909090" opacity="0.55"/><rect x="434.10" y="178.64" width="1.4" height="0.5" fill="#909090" opacity="0.55"/><rect x="434.10" y="180.30" width="1.4" height="0.5" fill="#909090" opacity="0.55"/><rect x="434.10" y="181.96" width="1.4" height="0.5" fill="#909090" opacity="0.55"/><rect x="428.00" y="183.57" width="7.50" height="0.6" fill="#909090" opacity="0.55"/><rect x="428.00" y="183.52" width="4" height="0.7" fill="#c8c8c8" opacity="0.8"/><rect x="434.10" y="185.28" width="1.4" height="0.5" fill="#909090" opacity="0.55"/><rect x="434.10" y="186.94" width="1.4" height="0.5" fill="#909090" opacity="0.55"/><rect x="434.10" y="188.60" width="1.4" height="0.5" fill="#909090" opacity="0.55"/><rect x="434.10" y="190.26" width="1.4" height="0.5" fill="#909090" opacity="0.55"/><rect x="432.70" y="191.93" width="2.8" height="0.5" fill="#909090" opacity="0.8"/><rect x="434.10" y="193.59" width="1.4" height="0.5" fill="#909090" opacity="0.55"/><rect x="434.10" y="195.25" width="1.4" height="0.5" fill="#909090" opacity="0.55"/><rect x="434.10" y="196.91" width="1.4" height="0.5" fill="#909090" opacity="0.55"/><rect x="434.10" y="198.57" width="1.4" height="0.5" fill="#909090" opacity="0.55"/><rect x="428.00" y="200.18" width="7.50" height="0.6" fill="#909090" opacity="0.55"/><rect x="428.00" y="200.13" width="4" height="0.7" fill="#c8c8c8" opacity="0.8"/><rect x="434.10" y="201.89" width="1.4" height="0.5" fill="#909090" opacity="0.55"/><rect x="434.10" y="203.55" width="1.4" height="0.5" fill="#909090" opacity="0.55"/><rect x="434.10" y="205.21" width="1.4" height="0.5" fill="#909090" opacity="0.55"/><rect x="434.10" y="206.87" width="1.4" height="0.5" fill="#909090" opacity="0.55"/><rect x="432.70" y="208.53" width="2.8" height="0.5" fill="#909090" opacity="0.8"/><rect x="434.10" y="210.20" width="1.4" height="0.5" fill="#909090" opacity="0.55"/><rect x="434.10" y="211.86" width="1.4" height="0.5" fill="#909090" opacity="0.55"/><rect x="434.10" y="213.52" width="1.4" height="0.5" fill="#909090" opacity="0.55"/><rect x="434.10" y="215.18" width="1.4" height="0.5" fill="#909090" opacity="0.55"/><rect x="428.00" y="216.79" width="7.50" height="0.6" fill="#909090" opacity="0.55"/><rect x="428.00" y="216.74" width="4" height="0.7" fill="#c8c8c8" opacity="0.8"/><rect x="434.10" y="218.50" width="1.4" height="0.5" fill="#909090" opacity="0.55"/><rect x="434.10" y="220.16" width="1.4" height="0.5" fill="#909090" opacity="0.55"/><rect x="434.10" y="221.82" width="1.4" height="0.5" fill="#909090" opacity="0.55"/><rect x="434.10" y="223.48" width="1.4" height="0.5" fill="#909090" opacity="0.55"/><rect x="432.70" y="225.15" width="2.8" height="0.5" fill="#909090" opacity="0.8"/><rect x="434.10" y="226.81" width="1.4" height="0.5" fill="#909090" opacity="0.55"/><rect x="434.10" y="228.47" width="1.4" height="0.5" fill="#909090" opacity="0.55"/><rect x="434.10" y="230.13" width="1.4" height="0.5" fill="#909090" opacity="0.55"/><rect x="434.10" y="231.79" width="1.4" height="0.5" fill="#909090" opacity="0.55"/><rect x="428.00" y="233.40" width="7.50" height="0.6" fill="#909090" opacity="0.55"/><rect x="428.00" y="233.35" width="4" height="0.7" fill="#c8c8c8" opacity="0.8"/><rect x="434.10" y="235.11" width="1.4" height="0.5" fill="#909090" opacity="0.55"/><rect x="434.10" y="236.77" width="1.4" height="0.5" fill="#909090" opacity="0.55"/><rect x="434.10" y="238.43" width="1.4" height="0.5" fill="#909090" opacity="0.55"/><rect x="434.10" y="240.09" width="1.4" height="0.5" fill="#909090" opacity="0.55"/><rect x="432.70" y="241.75" width="2.8" height="0.5" fill="#909090" opacity="0.8"/><rect x="434.10" y="243.42" width="1.4" height="0.5" fill="#909090" opacity="0.55"/><rect x="434.10" y="245.08" width="1.4" height="0.5" fill="#909090" opacity="0.55"/><rect x="434.10" y="246.74" width="1.4" height="0.5" fill="#909090" opacity="0.55"/><rect x="434.10" y="248.40" width="1.4" height="0.5" fill="#909090" opacity="0.55"/><rect x="428.00" y="250.01" width="7.50" height="0.6" fill="#909090" opacity="0.55"/><rect x="428.00" y="249.96" width="4" height="0.7" fill="#c8c8c8" opacity="0.8"/><rect x="434.10" y="251.72" width="1.4" height="0.5" fill="#909090" opacity="0.55"/><rect x="434.10" y="253.38" width="1.4" height="0.5" fill="#909090" opacity="0.55"/><rect x="434.10" y="255.04" width="1.4" height="0.5" fill="#909090" opacity="0.55"/><rect x="434.10" y="256.70" width="1.4" height="0.5" fill="#909090" opacity="0.55"/><rect x="432.70" y="258.37" width="2.8" height="0.5" fill="#909090" opacity="0.8"/><rect x="434.10" y="260.03" width="1.4" height="0.5" fill="#909090" opacity="0.55"/><rect x="434.10" y="261.69" width="1.4" height="0.5" fill="#909090" opacity="0.55"/><rect x="434.10" y="263.35" width="1.4" height="0.5" fill="#909090" opacity="0.55"/><rect x="434.10" y="265.01" width="1.4" height="0.5" fill="#909090" opacity="0.55"/><rect x="428.00" y="266.62" width="7.50" height="0.6" fill="#909090" opacity="0.55"/><rect x="428.00" y="266.57" width="4" height="0.7" fill="#c8c8c8" opacity="0.8"/><rect x="434.10" y="268.33" width="1.4" height="0.5" fill="#909090" opacity="0.55"/><rect x="434.10" y="269.99" width="1.4" height="0.5" fill="#909090" opacity="0.55"/><rect x="434.10" y="271.65" width="1.4" height="0.5" fill="#909090" opacity="0.55"/><rect x="434.10" y="273.31" width="1.4" height="0.5" fill="#909090" opacity="0.55"/><rect x="432.70" y="274.98" width="2.8" height="0.5" fill="#909090" opacity="0.8"/><rect x="434.10" y="276.64" width="1.4" height="0.5" fill="#909090" opacity="0.55"/><rect x="434.10" y="278.30" width="1.4" height="0.5" fill="#909090" opacity="0.55"/><rect x="434.10" y="279.96" width="1.4" height="0.5" fill="#909090" opacity="0.55"/><rect x="434.10" y="281.62" width="1.4" height="0.5" fill="#909090" opacity="0.55"/><rect x="428.00" y="283.23" width="7.50" height="0.6" fill="#909090" opacity="0.55"/><rect x="428.00" y="283.18" width="4" height="0.7" fill="#c8c8c8" opacity="0.8"/><rect x="434.10" y="284.94" width="1.4" height="0.5" fill="#909090" opacity="0.55"/><rect x="434.10" y="286.60" width="1.4" height="0.5" fill="#909090" opacity="0.55"/><rect x="434.10" y="288.26" width="1.4" height="0.5" fill="#909090" opacity="0.55"/><rect x="434.10" y="289.92" width="1.4" height="0.5" fill="#909090" opacity="0.55"/><rect x="432.70" y="291.59" width="2.8" height="0.5" fill="#909090" opacity="0.8"/><rect x="434.10" y="293.25" width="1.4" height="0.5" fill="#909090" opacity="0.55"/><rect x="434.10" y="294.91" width="1.4" height="0.5" fill="#909090" opacity="0.55"/><rect x="434.10" y="296.57" width="1.4" height="0.5" fill="#909090" opacity="0.55"/><rect x="434.10" y="298.23" width="1.4" height="0.5" fill="#909090" opacity="0.55"/><rect x="428.00" y="299.84" width="7.50" height="0.6" fill="#909090" opacity="0.55"/><rect x="428.00" y="299.79" width="4" height="0.7" fill="#c8c8c8" opacity="0.8"/><rect x="434.10" y="301.55" width="1.4" height="0.5" fill="#909090" opacity="0.55"/><rect x="434.10" y="303.21" width="1.4" height="0.5" fill="#909090" opacity="0.55"/><rect x="434.10" y="304.87" width="1.4" height="0.5" fill="#909090" opacity="0.55"/><rect x="434.10" y="306.53" width="1.4" height="0.5" fill="#909090" opacity="0.55"/><rect x="432.70" y="308.19" width="2.8" height="0.5" fill="#909090" opacity="0.8"/><rect x="434.10" y="309.86" width="1.4" height="0.5" fill="#909090" opacity="0.55"/><rect x="434.10" y="311.52" width="1.4" height="0.5" fill="#909090" opacity="0.55"/><rect x="434.10" y="313.18" width="1.4" height="0.5" fill="#909090" opacity="0.55"/><rect x="434.10" y="314.84" width="1.4" height="0.5" fill="#909090" opacity="0.55"/><rect x="428.00" y="316.45" width="7.50" height="0.6" fill="#909090" opacity="0.55"/><rect x="428.00" y="316.40" width="4" height="0.7" fill="#c8c8c8" opacity="0.8"/><rect x="434.10" y="318.16" width="1.4" height="0.5" fill="#909090" opacity="0.55"/><rect x="434.10" y="319.82" width="1.4" height="0.5" fill="#909090" opacity="0.55"/><rect x="434.10" y="321.48" width="1.4" height="0.5" fill="#909090" opacity="0.55"/><rect x="434.10" y="323.14" width="1.4" height="0.5" fill="#909090" opacity="0.55"/><rect x="432.70" y="324.80" width="2.8" height="0.5" fill="#909090" opacity="0.8"/><rect x="434.10" y="326.47" width="1.4" height="0.5" fill="#909090" opacity="0.55"/><rect x="434.10" y="328.13" width="1.4" height="0.5" fill="#909090" opacity="0.55"/><rect x="434.10" y="329.79" width="1.4" height="0.5" fill="#909090" opacity="0.55"/><rect x="434.10" y="331.45" width="1.4" height="0.5" fill="#909090" opacity="0.55"/><rect x="428.00" y="333.06" width="7.50" height="0.6" fill="#909090" opacity="0.55"/><rect x="428.00" y="333.01" width="4" height="0.7" fill="#c8c8c8" opacity="0.8"/><rect x="434.10" y="334.77" width="1.4" height="0.5" fill="#909090" opacity="0.55"/><rect x="434.10" y="336.43" width="1.4" height="0.5" fill="#909090" opacity="0.55"/><rect x="434.10" y="338.09" width="1.4" height="0.5" fill="#909090" opacity="0.55"/><rect x="434.10" y="339.75" width="1.4" height="0.5" fill="#909090" opacity="0.55"/><rect x="432.70" y="341.41" width="2.8" height="0.5" fill="#909090" opacity="0.8"/><rect x="434.10" y="343.08" width="1.4" height="0.5" fill="#909090" opacity="0.55"/><rect x="434.10" y="344.74" width="1.4" height="0.5" fill="#909090" opacity="0.55"/><rect x="434.10" y="346.40" width="1.4" height="0.5" fill="#909090" opacity="0.55"/><rect x="434.10" y="348.06" width="1.4" height="0.5" fill="#909090" opacity="0.55"/><rect x="428.00" y="349.67" width="7.50" height="0.6" fill="#909090" opacity="0.55"/><rect x="428.00" y="349.62" width="4" height="0.7" fill="#c8c8c8" opacity="0.8"/><rect x="434.10" y="351.38" width="1.4" height="0.5" fill="#909090" opacity="0.55"/><rect x="434.10" y="353.04" width="1.4" height="0.5" fill="#909090" opacity="0.55"/><rect x="434.10" y="354.70" width="1.4" height="0.5" fill="#909090" opacity="0.55"/><rect x="434.10" y="356.36" width="1.4" height="0.5" fill="#909090" opacity="0.55"/><rect x="432.70" y="358.02" width="2.8" height="0.5" fill="#909090" opacity="0.8"/><rect x="434.10" y="359.69" width="1.4" height="0.5" fill="#909090" opacity="0.55"/><rect x="434.10" y="361.35" width="1.4" height="0.5" fill="#909090" opacity="0.55"/><rect x="434.10" y="363.01" width="1.4" height="0.5" fill="#909090" opacity="0.55"/><rect x="434.10" y="364.67" width="1.4" height="0.5" fill="#909090" opacity="0.55"/><rect x="428.00" y="366.28" width="7.50" height="0.6" fill="#909090" opacity="0.55"/><rect x="428.00" y="366.23" width="4" height="0.7" fill="#c8c8c8" opacity="0.8"/><rect x="434.10" y="367.99" width="1.4" height="0.5" fill="#909090" opacity="0.55"/><rect x="434.10" y="369.65" width="1.4" height="0.5" fill="#909090" opacity="0.55"/><rect x="434.10" y="371.31" width="1.4" height="0.5" fill="#909090" opacity="0.55"/><rect x="434.10" y="372.97" width="1.4" height="0.5" fill="#909090" opacity="0.55"/><rect x="432.70" y="374.63" width="2.8" height="0.5" fill="#909090" opacity="0.8"/><rect x="434.10" y="376.30" width="1.4" height="0.5" fill="#909090" opacity="0.55"/><rect x="434.10" y="377.96" width="1.4" height="0.5" fill="#909090" opacity="0.55"/><rect x="434.10" y="379.62" width="1.4" height="0.5" fill="#909090" opacity="0.55"/><rect x="434.10" y="381.28" width="1.4" height="0.5" fill="#909090" opacity="0.55"/><rect x="428.00" y="382.89" width="7.50" height="0.6" fill="#909090" opacity="0.55"/><rect x="428.00" y="382.84" width="4" height="0.7" fill="#c8c8c8" opacity="0.8"/><rect x="434.10" y="384.60" width="1.4" height="0.5" fill="#909090" opacity="0.55"/><rect x="434.10" y="386.26" width="1.4" height="0.5" fill="#909090" opacity="0.55"/><rect x="434.10" y="387.92" width="1.4" height="0.5" fill="#909090" opacity="0.55"/><rect x="434.10" y="389.58" width="1.4" height="0.5" fill="#909090" opacity="0.55"/><rect x="432.70" y="391.25" width="2.8" height="0.5" fill="#909090" opacity="0.8"/><rect x="434.10" y="392.91" width="1.4" height="0.5" fill="#909090" opacity="0.55"/><rect x="434.10" y="394.57" width="1.4" height="0.5" fill="#909090" opacity="0.55"/><rect x="434.10" y="396.23" width="1.4" height="0.5" fill="#909090" opacity="0.55"/><rect x="434.10" y="397.89" width="1.4" height="0.5" fill="#909090" opacity="0.55"/><rect x="428.00" y="399.50" width="7.50" height="0.6" fill="#909090" opacity="0.55"/><rect x="428.00" y="399.45" width="4" height="0.7" fill="#c8c8c8" opacity="0.8"/><rect x="434.10" y="401.21" width="1.4" height="0.5" fill="#909090" opacity="0.55"/><rect x="434.10" y="402.87" width="1.4" height="0.5" fill="#909090" opacity="0.55"/><rect x="434.10" y="404.53" width="1.4" height="0.5" fill="#909090" opacity="0.55"/><rect x="434.10" y="406.19" width="1.4" height="0.5" fill="#909090" opacity="0.55"/><rect x="432.70" y="407.86" width="2.8" height="0.5" fill="#909090" opacity="0.8"/><rect x="434.10" y="409.52" width="1.4" height="0.5" fill="#909090" opacity="0.55"/><rect x="434.10" y="411.18" width="1.4" height="0.5" fill="#909090" opacity="0.55"/><rect x="434.10" y="412.84" width="1.4" height="0.5" fill="#909090" opacity="0.55"/><rect x="434.10" y="414.50" width="1.4" height="0.5" fill="#909090" opacity="0.55"/><rect x="428.00" y="416.11" width="7.50" height="0.6" fill="#909090" opacity="0.55"/><rect x="428.00" y="416.06" width="4" height="0.7" fill="#c8c8c8" opacity="0.8"/><rect x="434.10" y="417.82" width="1.4" height="0.5" fill="#909090" opacity="0.55"/><rect x="434.10" y="419.48" width="1.4" height="0.5" fill="#909090" opacity="0.55"/><rect x="434.10" y="421.14" width="1.4" height="0.5" fill="#909090" opacity="0.55"/><rect x="434.10" y="422.80" width="1.4" height="0.5" fill="#909090" opacity="0.55"/><rect x="432.70" y="424.47" width="2.8" height="0.5" fill="#909090" opacity="0.8"/><rect x="434.10" y="426.13" width="1.4" height="0.5" fill="#909090" opacity="0.55"/><rect x="434.10" y="427.79" width="1.4" height="0.5" fill="#909090" opacity="0.55"/><rect x="434.10" y="429.45" width="1.4" height="0.5" fill="#909090" opacity="0.55"/><rect x="434.10" y="431.11" width="1.4" height="0.5" fill="#909090" opacity="0.55"/><rect x="428.00" y="432.72" width="7.50" height="0.6" fill="#909090" opacity="0.55"/><rect x="428.00" y="432.67" width="4" height="0.7" fill="#c8c8c8" opacity="0.8"/><rect x="434.10" y="434.43" width="1.4" height="0.5" fill="#909090" opacity="0.55"/><rect x="434.10" y="436.09" width="1.4" height="0.5" fill="#909090" opacity="0.55"/><rect x="434.10" y="437.75" width="1.4" height="0.5" fill="#909090" opacity="0.55"/><rect x="434.10" y="439.41" width="1.4" height="0.5" fill="#909090" opacity="0.55"/><rect x="432.70" y="441.08" width="2.8" height="0.5" fill="#909090" opacity="0.8"/><rect x="434.10" y="442.74" width="1.4" height="0.5" fill="#909090" opacity="0.55"/><rect x="434.10" y="444.40" width="1.4" height="0.5" fill="#909090" opacity="0.55"/><rect x="434.10" y="446.06" width="1.4" height="0.5" fill="#909090" opacity="0.55"/><rect x="434.10" y="447.72" width="1.4" height="0.5" fill="#909090" opacity="0.55"/><rect x="428.00" y="449.33" width="7.50" height="0.6" fill="#909090" opacity="0.55"/><rect x="428.00" y="449.28" width="4" height="0.7" fill="#c8c8c8" opacity="0.8"/><rect x="434.10" y="451.04" width="1.4" height="0.5" fill="#909090" opacity="0.55"/><rect x="434.10" y="452.70" width="1.4" height="0.5" fill="#909090" opacity="0.55"/><rect x="434.10" y="454.36" width="1.4" height="0.5" fill="#909090" opacity="0.55"/><rect x="434.10" y="456.02" width="1.4" height="0.5" fill="#909090" opacity="0.55"/><rect x="432.70" y="457.68" width="2.8" height="0.5" fill="#909090" opacity="0.8"/><rect x="434.10" y="459.35" width="1.4" height="0.5" fill="#909090" opacity="0.55"/><rect x="434.10" y="461.01" width="1.4" height="0.5" fill="#909090" opacity="0.55"/><rect x="434.10" y="462.67" width="1.4" height="0.5" fill="#909090" opacity="0.55"/><rect x="434.10" y="464.33" width="1.4" height="0.5" fill="#909090" opacity="0.55"/><rect x="428.00" y="465.94" width="7.50" height="0.6" fill="#909090" opacity="0.55"/><rect x="428.00" y="465.89" width="4" height="0.7" fill="#c8c8c8" opacity="0.8"/><rect x="434.10" y="467.65" width="1.4" height="0.5" fill="#909090" opacity="0.55"/><rect x="434.10" y="469.31" width="1.4" height="0.5" fill="#909090" opacity="0.55"/><rect x="434.10" y="470.97" width="1.4" height="0.5" fill="#909090" opacity="0.55"/><rect x="434.10" y="472.63" width="1.4" height="0.5" fill="#909090" opacity="0.55"/><rect x="432.70" y="474.29" width="2.8" height="0.5" fill="#909090" opacity="0.8"/><rect x="434.10" y="475.96" width="1.4" height="0.5" fill="#909090" opacity="0.55"/><rect x="434.10" y="477.62" width="1.4" height="0.5" fill="#909090" opacity="0.55"/><rect x="434.10" y="479.28" width="1.4" height="0.5" fill="#909090" opacity="0.55"/><rect x="434.10" y="480.94" width="1.4" height="0.5" fill="#909090" opacity="0.55"/><rect x="428.00" y="482.55" width="7.50" height="0.6" fill="#909090" opacity="0.55"/><rect x="428.00" y="482.50" width="4" height="0.7" fill="#c8c8c8" opacity="0.8"/><rect x="434.10" y="484.26" width="1.4" height="0.5" fill="#909090" opacity="0.55"/><rect x="434.10" y="485.92" width="1.4" height="0.5" fill="#909090" opacity="0.55"/><rect x="434.10" y="487.58" width="1.4" height="0.5" fill="#909090" opacity="0.55"/><rect x="434.10" y="489.24" width="1.4" height="0.5" fill="#909090" opacity="0.55"/><rect x="432.70" y="490.90" width="2.8" height="0.5" fill="#909090" opacity="0.8"/><rect x="434.10" y="492.57" width="1.4" height="0.5" fill="#909090" opacity="0.55"/><rect x="434.10" y="494.23" width="1.4" height="0.5" fill="#909090" opacity="0.55"/><rect x="434.10" y="495.89" width="1.4" height="0.5" fill="#909090" opacity="0.55"/><rect x="434.10" y="497.55" width="1.4" height="0.5" fill="#909090" opacity="0.55"/><rect x="428.00" y="499.16" width="7.50" height="0.6" fill="#909090" opacity="0.55"/><rect x="428.00" y="499.11" width="4" height="0.7" fill="#c8c8c8" opacity="0.8"/><rect x="434.10" y="500.87" width="1.4" height="0.5" fill="#909090" opacity="0.55"/><rect x="434.10" y="502.53" width="1.4" height="0.5" fill="#909090" opacity="0.55"/><rect x="434.10" y="504.19" width="1.4" height="0.5" fill="#909090" opacity="0.55"/><rect x="434.10" y="505.85" width="1.4" height="0.5" fill="#909090" opacity="0.55"/><rect x="432.70" y="507.51" width="2.8" height="0.5" fill="#909090" opacity="0.8"/><rect x="434.10" y="509.18" width="1.4" height="0.5" fill="#909090" opacity="0.55"/><rect x="434.10" y="510.84" width="1.4" height="0.5" fill="#909090" opacity="0.55"/><rect x="434.10" y="512.50" width="1.4" height="0.5" fill="#909090" opacity="0.55"/><rect x="434.10" y="514.16" width="1.4" height="0.5" fill="#909090" opacity="0.55"/><rect x="428.00" y="515.77" width="7.50" height="0.6" fill="#909090" opacity="0.55"/><rect x="428.00" y="515.72" width="4" height="0.7" fill="#c8c8c8" opacity="0.8"/><rect x="434.10" y="517.48" width="1.4" height="0.5" fill="#909090" opacity="0.55"/><rect x="434.10" y="519.14" width="1.4" height="0.5" fill="#909090" opacity="0.55"/><rect x="434.10" y="520.80" width="1.4" height="0.5" fill="#909090" opacity="0.55"/><rect x="434.10" y="522.46" width="1.4" height="0.5" fill="#909090" opacity="0.55"/><rect x="432.70" y="524.12" width="2.8" height="0.5" fill="#909090" opacity="0.8"/><rect x="434.10" y="525.79" width="1.4" height="0.5" fill="#909090" opacity="0.55"/><rect x="434.10" y="527.45" width="1.4" height="0.5" fill="#909090" opacity="0.55"/><rect x="434.10" y="529.11" width="1.4" height="0.5" fill="#909090" opacity="0.55"/><rect x="434.10" y="530.77" width="1.4" height="0.5" fill="#909090" opacity="0.55"/><rect x="428.00" y="532.38" width="7.50" height="0.6" fill="#909090" opacity="0.55"/><rect x="428.00" y="532.33" width="4" height="0.7" fill="#c8c8c8" opacity="0.8"/><rect x="434.10" y="534.09" width="1.4" height="0.5" fill="#909090" opacity="0.55"/><rect x="434.10" y="535.75" width="1.4" height="0.5" fill="#909090" opacity="0.55"/><rect x="434.10" y="537.41" width="1.4" height="0.5" fill="#909090" opacity="0.55"/><rect x="434.10" y="539.07" width="1.4" height="0.5" fill="#909090" opacity="0.55"/><rect x="432.70" y="540.74" width="2.8" height="0.5" fill="#909090" opacity="0.8"/><rect x="434.10" y="542.40" width="1.4" height="0.5" fill="#909090" opacity="0.55"/><rect x="434.10" y="544.06" width="1.4" height="0.5" fill="#909090" opacity="0.55"/><rect x="434.10" y="545.72" width="1.4" height="0.5" fill="#909090" opacity="0.55"/><rect x="434.10" y="547.38" width="1.4" height="0.5" fill="#909090" opacity="0.55"/><rect x="428.00" y="548.99" width="7.50" height="0.6" fill="#909090" opacity="0.55"/><rect x="428.00" y="548.94" width="4" height="0.7" fill="#c8c8c8" opacity="0.8"/><rect x="434.10" y="550.70" width="1.4" height="0.5" fill="#909090" opacity="0.55"/><rect x="434.10" y="552.36" width="1.4" height="0.5" fill="#909090" opacity="0.55"/><rect x="434.10" y="554.02" width="1.4" height="0.5" fill="#909090" opacity="0.55"/><rect x="434.10" y="555.68" width="1.4" height="0.5" fill="#909090" opacity="0.55"/><rect x="432.70" y="557.35" width="2.8" height="0.5" fill="#909090" opacity="0.8"/><rect x="434.10" y="559.01" width="1.4" height="0.5" fill="#909090" opacity="0.55"/><rect x="434.10" y="560.67" width="1.4" height="0.5" fill="#909090" opacity="0.55"/><rect x="434.10" y="562.33" width="1.4" height="0.5" fill="#909090" opacity="0.55"/><rect x="434.10" y="563.99" width="1.4" height="0.5" fill="#909090" opacity="0.55"/></svg>
<div class="t sa" style="left:428.10px;top:68.10px;font-size:4.8px;line-height:4.8px;color:#c8c8c8;">0</div>
<div class="t sa" style="left:428.10px;top:84.71px;font-size:4.8px;line-height:4.8px;color:#c8c8c8;">1</div>
<div class="t sa" style="left:428.10px;top:88.61px;font-size:4.8px;line-height:4.8px;color:#c8c8c8;">0</div>
<div class="t sa" style="left:428.10px;top:101.32px;font-size:4.8px;line-height:4.8px;color:#c8c8c8;">2</div>
<div class="t sa" style="left:428.10px;top:105.22px;font-size:4.8px;line-height:4.8px;color:#c8c8c8;">0</div>
<div class="t sa" style="left:428.10px;top:117.93px;font-size:4.8px;line-height:4.8px;color:#c8c8c8;">3</div>
<div class="t sa" style="left:428.10px;top:121.83px;font-size:4.8px;line-height:4.8px;color:#c8c8c8;">0</div>
<div class="t sa" style="left:428.10px;top:134.54px;font-size:4.8px;line-height:4.8px;color:#c8c8c8;">4</div>
<div class="t sa" style="left:428.10px;top:138.44px;font-size:4.8px;line-height:4.8px;color:#c8c8c8;">0</div>
<div class="t sa" style="left:428.10px;top:151.15px;font-size:4.8px;line-height:4.8px;color:#c8c8c8;">5</div>
<div class="t sa" style="left:428.10px;top:155.05px;font-size:4.8px;line-height:4.8px;color:#c8c8c8;">0</div>
<div class="t sa" style="left:428.10px;top:167.76px;font-size:4.8px;line-height:4.8px;color:#c8c8c8;">6</div>
<div class="t sa" style="left:428.10px;top:171.66px;font-size:4.8px;line-height:4.8px;color:#c8c8c8;">0</div>
<div class="t sa" style="left:428.10px;top:184.37px;font-size:4.8px;line-height:4.8px;color:#c8c8c8;">7</div>
<div class="t sa" style="left:428.10px;top:188.27px;font-size:4.8px;line-height:4.8px;color:#c8c8c8;">0</div>
<div class="t sa" style="left:428.10px;top:200.98px;font-size:4.8px;line-height:4.8px;color:#c8c8c8;">8</div>
<div class="t sa" style="left:428.10px;top:204.88px;font-size:4.8px;line-height:4.8px;color:#c8c8c8;">0</div>
<div class="t sa" style="left:428.10px;top:217.59px;font-size:4.8px;line-height:4.8px;color:#c8c8c8;">9</div>
<div class="t sa" style="left:428.10px;top:221.49px;font-size:4.8px;line-height:4.8px;color:#c8c8c8;">0</div>
<div class="t sa" style="left:428.10px;top:234.20px;font-size:4.8px;line-height:4.8px;color:#c8c8c8;">1</div>
<div class="t sa" style="left:428.10px;top:238.10px;font-size:4.8px;line-height:4.8px;color:#c8c8c8;">0</div>
<div class="t sa" style="left:428.10px;top:242.00px;font-size:4.8px;line-height:4.8px;color:#c8c8c8;">0</div>
<div class="t sa" style="left:428.10px;top:250.81px;font-size:4.8px;line-height:4.8px;color:#c8c8c8;">1</div>
<div class="t sa" style="left:428.10px;top:254.71px;font-size:4.8px;line-height:4.8px;color:#c8c8c8;">1</div>
<div class="t sa" style="left:428.10px;top:258.61px;font-size:4.8px;line-height:4.8px;color:#c8c8c8;">0</div>
<div class="t sa" style="left:428.10px;top:267.42px;font-size:4.8px;line-height:4.8px;color:#c8c8c8;">1</div>
<div class="t sa" style="left:428.10px;top:271.32px;font-size:4.8px;line-height:4.8px;color:#c8c8c8;">2</div>
<div class="t sa" style="left:428.10px;top:275.22px;font-size:4.8px;line-height:4.8px;color:#c8c8c8;">0</div>
<div class="t sa" style="left:428.10px;top:284.03px;font-size:4.8px;line-height:4.8px;color:#c8c8c8;">1</div>
<div class="t sa" style="left:428.10px;top:287.93px;font-size:4.8px;line-height:4.8px;color:#c8c8c8;">3</div>
<div class="t sa" style="left:428.10px;top:291.83px;font-size:4.8px;line-height:4.8px;color:#c8c8c8;">0</div>
<div class="t sa" style="left:428.10px;top:300.64px;font-size:4.8px;line-height:4.8px;color:#c8c8c8;">1</div>
<div class="t sa" style="left:428.10px;top:304.54px;font-size:4.8px;line-height:4.8px;color:#c8c8c8;">4</div>
<div class="t sa" style="left:428.10px;top:308.44px;font-size:4.8px;line-height:4.8px;color:#c8c8c8;">0</div>
<div class="t sa" style="left:428.10px;top:317.25px;font-size:4.8px;line-height:4.8px;color:#c8c8c8;">1</div>
<div class="t sa" style="left:428.10px;top:321.15px;font-size:4.8px;line-height:4.8px;color:#c8c8c8;">5</div>
<div class="t sa" style="left:428.10px;top:325.05px;font-size:4.8px;line-height:4.8px;color:#c8c8c8;">0</div>
<div class="t sa" style="left:428.10px;top:333.86px;font-size:4.8px;line-height:4.8px;color:#c8c8c8;">1</div>
<div class="t sa" style="left:428.10px;top:337.76px;font-size:4.8px;line-height:4.8px;color:#c8c8c8;">6</div>
<div class="t sa" style="left:428.10px;top:341.66px;font-size:4.8px;line-height:4.8px;color:#c8c8c8;">0</div>
<div class="t sa" style="left:428.10px;top:350.47px;font-size:4.8px;line-height:4.8px;color:#c8c8c8;">1</div>
<div class="t sa" style="left:428.10px;top:354.37px;font-size:4.8px;line-height:4.8px;color:#c8c8c8;">7</div>
<div class="t sa" style="left:428.10px;top:358.27px;font-size:4.8px;line-height:4.8px;color:#c8c8c8;">0</div>
<div class="t sa" style="left:428.10px;top:367.08px;font-size:4.8px;line-height:4.8px;color:#c8c8c8;">1</div>
<div class="t sa" style="left:428.10px;top:370.98px;font-size:4.8px;line-height:4.8px;color:#c8c8c8;">8</div>
<div class="t sa" style="left:428.10px;top:374.88px;font-size:4.8px;line-height:4.8px;color:#c8c8c8;">0</div>
<div class="t sa" style="left:428.10px;top:383.69px;font-size:4.8px;line-height:4.8px;color:#c8c8c8;">1</div>
<div class="t sa" style="left:428.10px;top:387.59px;font-size:4.8px;line-height:4.8px;color:#c8c8c8;">9</div>
<div class="t sa" style="left:428.10px;top:391.49px;font-size:4.8px;line-height:4.8px;color:#c8c8c8;">0</div>
<div class="t sa" style="left:428.10px;top:400.30px;font-size:4.8px;line-height:4.8px;color:#c8c8c8;">2</div>
<div class="t sa" style="left:428.10px;top:404.20px;font-size:4.8px;line-height:4.8px;color:#c8c8c8;">0</div>
<div class="t sa" style="left:428.10px;top:408.10px;font-size:4.8px;line-height:4.8px;color:#c8c8c8;">0</div>
<div class="t sa" style="left:428.10px;top:416.91px;font-size:4.8px;line-height:4.8px;color:#c8c8c8;">2</div>
<div class="t sa" style="left:428.10px;top:420.81px;font-size:4.8px;line-height:4.8px;color:#c8c8c8;">1</div>
<div class="t sa" style="left:428.10px;top:424.71px;font-size:4.8px;line-height:4.8px;color:#c8c8c8;">0</div>
<div class="t sa" style="left:428.10px;top:433.52px;font-size:4.8px;line-height:4.8px;color:#c8c8c8;">2</div>
<div class="t sa" style="left:428.10px;top:437.42px;font-size:4.8px;line-height:4.8px;color:#c8c8c8;">2</div>
<div class="t sa" style="left:428.10px;top:441.32px;font-size:4.8px;line-height:4.8px;color:#c8c8c8;">0</div>
<div class="t sa" style="left:428.10px;top:450.13px;font-size:4.8px;line-height:4.8px;color:#c8c8c8;">2</div>
<div class="t sa" style="left:428.10px;top:454.03px;font-size:4.8px;line-height:4.8px;color:#c8c8c8;">3</div>
<div class="t sa" style="left:428.10px;top:457.93px;font-size:4.8px;line-height:4.8px;color:#c8c8c8;">0</div>
<div class="t sa" style="left:428.10px;top:466.74px;font-size:4.8px;line-height:4.8px;color:#c8c8c8;">2</div>
<div class="t sa" style="left:428.10px;top:470.64px;font-size:4.8px;line-height:4.8px;color:#c8c8c8;">4</div>
<div class="t sa" style="left:428.10px;top:474.54px;font-size:4.8px;line-height:4.8px;color:#c8c8c8;">0</div>
<div class="t sa" style="left:428.10px;top:483.35px;font-size:4.8px;line-height:4.8px;color:#c8c8c8;">2</div>
<div class="t sa" style="left:428.10px;top:487.25px;font-size:4.8px;line-height:4.8px;color:#c8c8c8;">5</div>
<div class="t sa" style="left:428.10px;top:491.15px;font-size:4.8px;line-height:4.8px;color:#c8c8c8;">0</div>
<div class="t sa" style="left:428.10px;top:499.96px;font-size:4.8px;line-height:4.8px;color:#c8c8c8;">2</div>
<div class="t sa" style="left:428.10px;top:503.86px;font-size:4.8px;line-height:4.8px;color:#c8c8c8;">6</div>
<div class="t sa" style="left:428.10px;top:507.76px;font-size:4.8px;line-height:4.8px;color:#c8c8c8;">0</div>
<div class="t sa" style="left:428.10px;top:516.57px;font-size:4.8px;line-height:4.8px;color:#c8c8c8;">2</div>
<div class="t sa" style="left:428.10px;top:520.47px;font-size:4.8px;line-height:4.8px;color:#c8c8c8;">7</div>
<div class="t sa" style="left:428.10px;top:524.37px;font-size:4.8px;line-height:4.8px;color:#c8c8c8;">0</div>
<div class="t sa" style="left:428.10px;top:533.18px;font-size:4.8px;line-height:4.8px;color:#c8c8c8;">2</div>
<div class="t sa" style="left:428.10px;top:537.08px;font-size:4.8px;line-height:4.8px;color:#c8c8c8;">8</div>
<div class="t sa" style="left:428.10px;top:540.98px;font-size:4.8px;line-height:4.8px;color:#c8c8c8;">0</div>
<div class="t sa" style="left:428.10px;top:549.79px;font-size:4.8px;line-height:4.8px;color:#c8c8c8;">2</div>
<div class="t sa" style="left:428.10px;top:553.69px;font-size:4.8px;line-height:4.8px;color:#c8c8c8;">9</div>
<div class="t sa" style="left:428.10px;top:557.59px;font-size:4.8px;line-height:4.8px;color:#c8c8c8;">0</div>
<div class="b" style="left:427.2px;top:50.2px;width:8.3px;height:10.4px;background:#1a1a1a;"></div>
<svg style="left:427.4px;top:52px" width="8" height="8" viewBox="0 0 8 8"><path d="M4 0V8M0 4H8" stroke="#888" stroke-width="0.5" stroke-dasharray="0.8 0.8"/></svg>
<div class="b" style="left:416px;top:51px;width:8px;height:516px;background:#303030;"></div>
<div class="b" style="left:416px;top:60px;width:8px;height:125px;background:#363636;"></div>
<div class="b" style="left:416px;top:51px;width:0.6px;height:516px;background:#2a2a2a;"></div>
<svg style="left:0;top:0" width="1024" height="576"><polygon points="418,56.800000000000004 422,56.800000000000004 420,54.2" fill="#666"/></svg>
<svg style="left:0;top:0" width="1024" height="576"><polygon points="418,561.8 422,561.8 420,564.4" fill="#666"/></svg>
<div class="b" style="left:1015.2px;top:51px;width:8.8px;height:516px;background:#292929;"></div>
<div class="b" style="left:1015.2px;top:51px;width:0.6px;height:516px;background:#232323;"></div>
<svg style="left:0;top:0" width="1024" height="576"><polygon points="1017.6,57.239999999999995 1022.4,57.239999999999995 1020,54.12" fill="#c8c8c8"/></svg>
<div class="b" style="left:1016.6px;top:102.6px;width:7px;height:8.4px;background:#777;"></div>
<div class="b" style="left:16.5px;top:567px;width:239.5px;height:9px;background:#2f2f2f;"></div>
<svg style="left:28px;top:568.4px" width="8" height="6" viewBox="0 0 8 6"><path d="M0.5 2V5.5H6V3.6" stroke="#727272" stroke-width="0.8" fill="none"/><path d="M2.6 3.6C3 2 4.4 1.4 6 1.4M4.8 0.2L6.4 1.4L4.8 2.6" stroke="#727272" stroke-width="0.7" fill="none"/></svg>
<div class="b" style="left:42px;top:569.4px;width:0.8px;height:4px;background:#727272;"></div>
<svg style="left:0;top:0" width="1024" height="576"><polygon points="45.620000000000005,569.6999999999999 45.620000000000005,573.1 43.410000000000004,571.4" fill="#727272"/></svg>
<svg style="left:0;top:0" width="1024" height="576"><polygon points="52.42,569.6999999999999 52.42,573.1 50.21,571.4" fill="#727272"/></svg>
<div class="b" style="left:55.5px;top:568px;width:41px;height:7.4px;background:#2c2c2c;"></div>
<svg style="left:0;top:0" width="1024" height="576"><polygon points="99.4,570.64 102.6,570.64 101,572.72" fill="#727272"/></svg>
<svg style="left:0;top:0" width="1024" height="576"><polygon points="111.38000000000001,569.6999999999999 111.38000000000001,573.1 113.59,571.4" fill="#727272"/></svg>
<svg style="left:0;top:0" width="1024" height="576"><polygon points="117.98,569.6999999999999 117.98,573.1 120.19,571.4" fill="#727272"/></svg>
<div class="b" style="left:121px;top:569.4px;width:0.8px;height:4px;background:#727272;"></div>
<svg style="left:127.6px;top:568.6px" width="6" height="6" viewBox="0 0 6 6"><path d="M0.5 5.5V0.5H3.4L5.2 2.2V5.5Z" stroke="#727272" stroke-width="0.8" fill="none"/></svg>
<div class="t sa" style="top:568.68px;font-size:5.2px;line-height:6.24px;color:#585858;left:140.00px;transform:scaleX(0.9237);">[Basic] (working)</div>
<svg style="left:0;top:0" width="1024" height="576"><polygon points="195.1,570.64 198.29999999999998,570.64 196.7,572.72" fill="#727272"/></svg>
<div class="b" style="left:203.4px;top:569px;width:5.2px;height:5.2px;border-radius:50%;background:#418039"></div>
<div class="t sa" style="top:568.68px;font-size:5.2px;line-height:6.24px;color:#666;left:211.00px;transform:scaleX(0.9229);">No errors</div>
<svg style="left:0;top:0" width="1024" height="576"><polygon points="243.6,570.76 246.4,570.76 245,572.58" fill="#727272"/></svg>
<div class="b" style="left:249.2px;top:567px;width:6.8px;height:9px;background:#1e1e1e;"></div>
<svg style="left:0;top:0" width="1024" height="576"><polygon points="254.02,569.6999999999999 254.02,573.1 251.81,571.4" fill="#909090"/></svg>
<div class="b" style="left:72px;top:575.2px;width:120px;height:0.8px;background:#4e4e4e;"></div>
<svg style="left:0;top:0" width="1024" height="576"><polygon points="409.86,569.5 409.86,573.3 412.33,571.4" fill="#6a6a6a"/></svg>
<div class="b" style="left:424px;top:567px;width:122px;height:9px;background:#2f2f2f;"></div>
<div class="b" style="left:546px;top:567px;width:7.4px;height:9px;background:#1e1e1e;"></div>
<svg style="left:0;top:0" width="1024" height="576"><polygon points="551.6800000000001,569.6 551.6800000000001,573.1999999999999 549.34,571.4" fill="#c0c0c0"/></svg>
<svg style="left:437.8px;top:568.4px" width="8" height="6" viewBox="0 0 8 6"><path d="M0.5 2V5.5H6V3.6" stroke="#a0a0a0" stroke-width="0.8" fill="none"/><path d="M2.6 3.6C3 2 4.4 1.4 6 1.4M4.8 0.2L6.4 1.4L4.8 2.6" stroke="#a0a0a0" stroke-width="0.7" fill="none"/></svg>
<div class="b" style="left:449.6px;top:569.4px;width:0.8px;height:4px;background:#a0a0a0;"></div>
<svg style="left:0;top:0" width="1024" height="576"><polygon points="453.41999999999996,569.6999999999999 453.41999999999996,573.1 451.21,571.4" fill="#a0a0a0"/></svg>
<svg style="left:0;top:0" width="1024" height="576"><polygon points="460.41999999999996,569.6999999999999 460.41999999999996,573.1 458.21,571.4" fill="#a0a0a0"/></svg>
<div class="t sa" style="top:568.49px;font-size:5.4px;line-height:6.48px;color:#b0b0b0;left:467.00px;transform:scaleX(0.9157);">15</div>
<svg style="left:0;top:0" width="1024" height="576"><polygon points="509.09999999999997,570.64 512.3,570.64 510.7,572.72" fill="#a0a0a0"/></svg>
<svg style="left:0;top:0" width="1024" height="576"><polygon points="519.98,569.6999999999999 519.98,573.1 522.19,571.4" fill="#a0a0a0"/></svg>
<svg style="left:0;top:0" width="1024" height="576"><polygon points="526.58,569.6999999999999 526.58,573.1 528.7900000000001,571.4" fill="#a0a0a0"/></svg>
<div class="b" style="left:529.6px;top:569.4px;width:0.8px;height:4px;background:#a0a0a0;"></div>
<div class="b" style="left:745.2px;top:567.5px;width:147.3px;height:7.5px;background:#6c6c6c;"></div>
<div class="b" style="left:979.4px;top:545px;width:47.8px;height:47.8px;border-radius:50%;background:#444;overflow:hidden;clip-path:circle(50%)"><div class="b" style="left:32px;top:0;width:16px;height:17px;background:#262626"></div><div class="b" style="left:0;top:17px;width:60px;height:1px;background:#333"></div><div class="b" style="left:3.2px;top:17px;width:10px;height:14px;background:#333"></div><div class="b" style="left:30.6px;top:18px;width:20px;height:14px;background:#4a4a4a"></div></div>
<svg style="left:0;top:0" width="1024" height="576"><polygon points="1015.0,554.84 1020.2,554.84 1017.6,558.22" fill="#e8e8e8"/></svg>
<svg style="left:0;top:0" width="1024" height="576"><polygon points="984.84,566.8 984.84,572.0 988.22,569.4" fill="#e0e0e0"/></svg>
<div class="b" style="left:996.7px;top:565px;width:13.4px;height:9px;background:#3c3c3c;border:1px solid #b8b8b8;box-sizing:border-box;"></div>
<svg style="left:1012.5px;top:565px" width="10" height="10" viewBox="0 0 10 10"><path d="M8.6 1.4L1.4 8.6M8.6 4.4L4.4 8.6M8.6 7.2L7.2 8.6" stroke="#8a8a8a" stroke-width="1" stroke-dasharray="1.2 1"/></svg>
<div class="b" style="left:977.9px;top:543.5px;width:50.8px;height:50.8px;border-radius:50%;border:3px solid #e01010;box-sizing:border-box;"></div>
<div class="t sa" style="top:43.13px;font-size:6.1px;line-height:7.32px;color:#d0d0d0;left:23.40px;transform:scaleX(0.9985);-webkit-text-stroke:0.15px #d0d0d0;">*fszk_konyv_intenziv_interakcio_A4.indd @ 83%</div>
</div></div>
</body></html>
